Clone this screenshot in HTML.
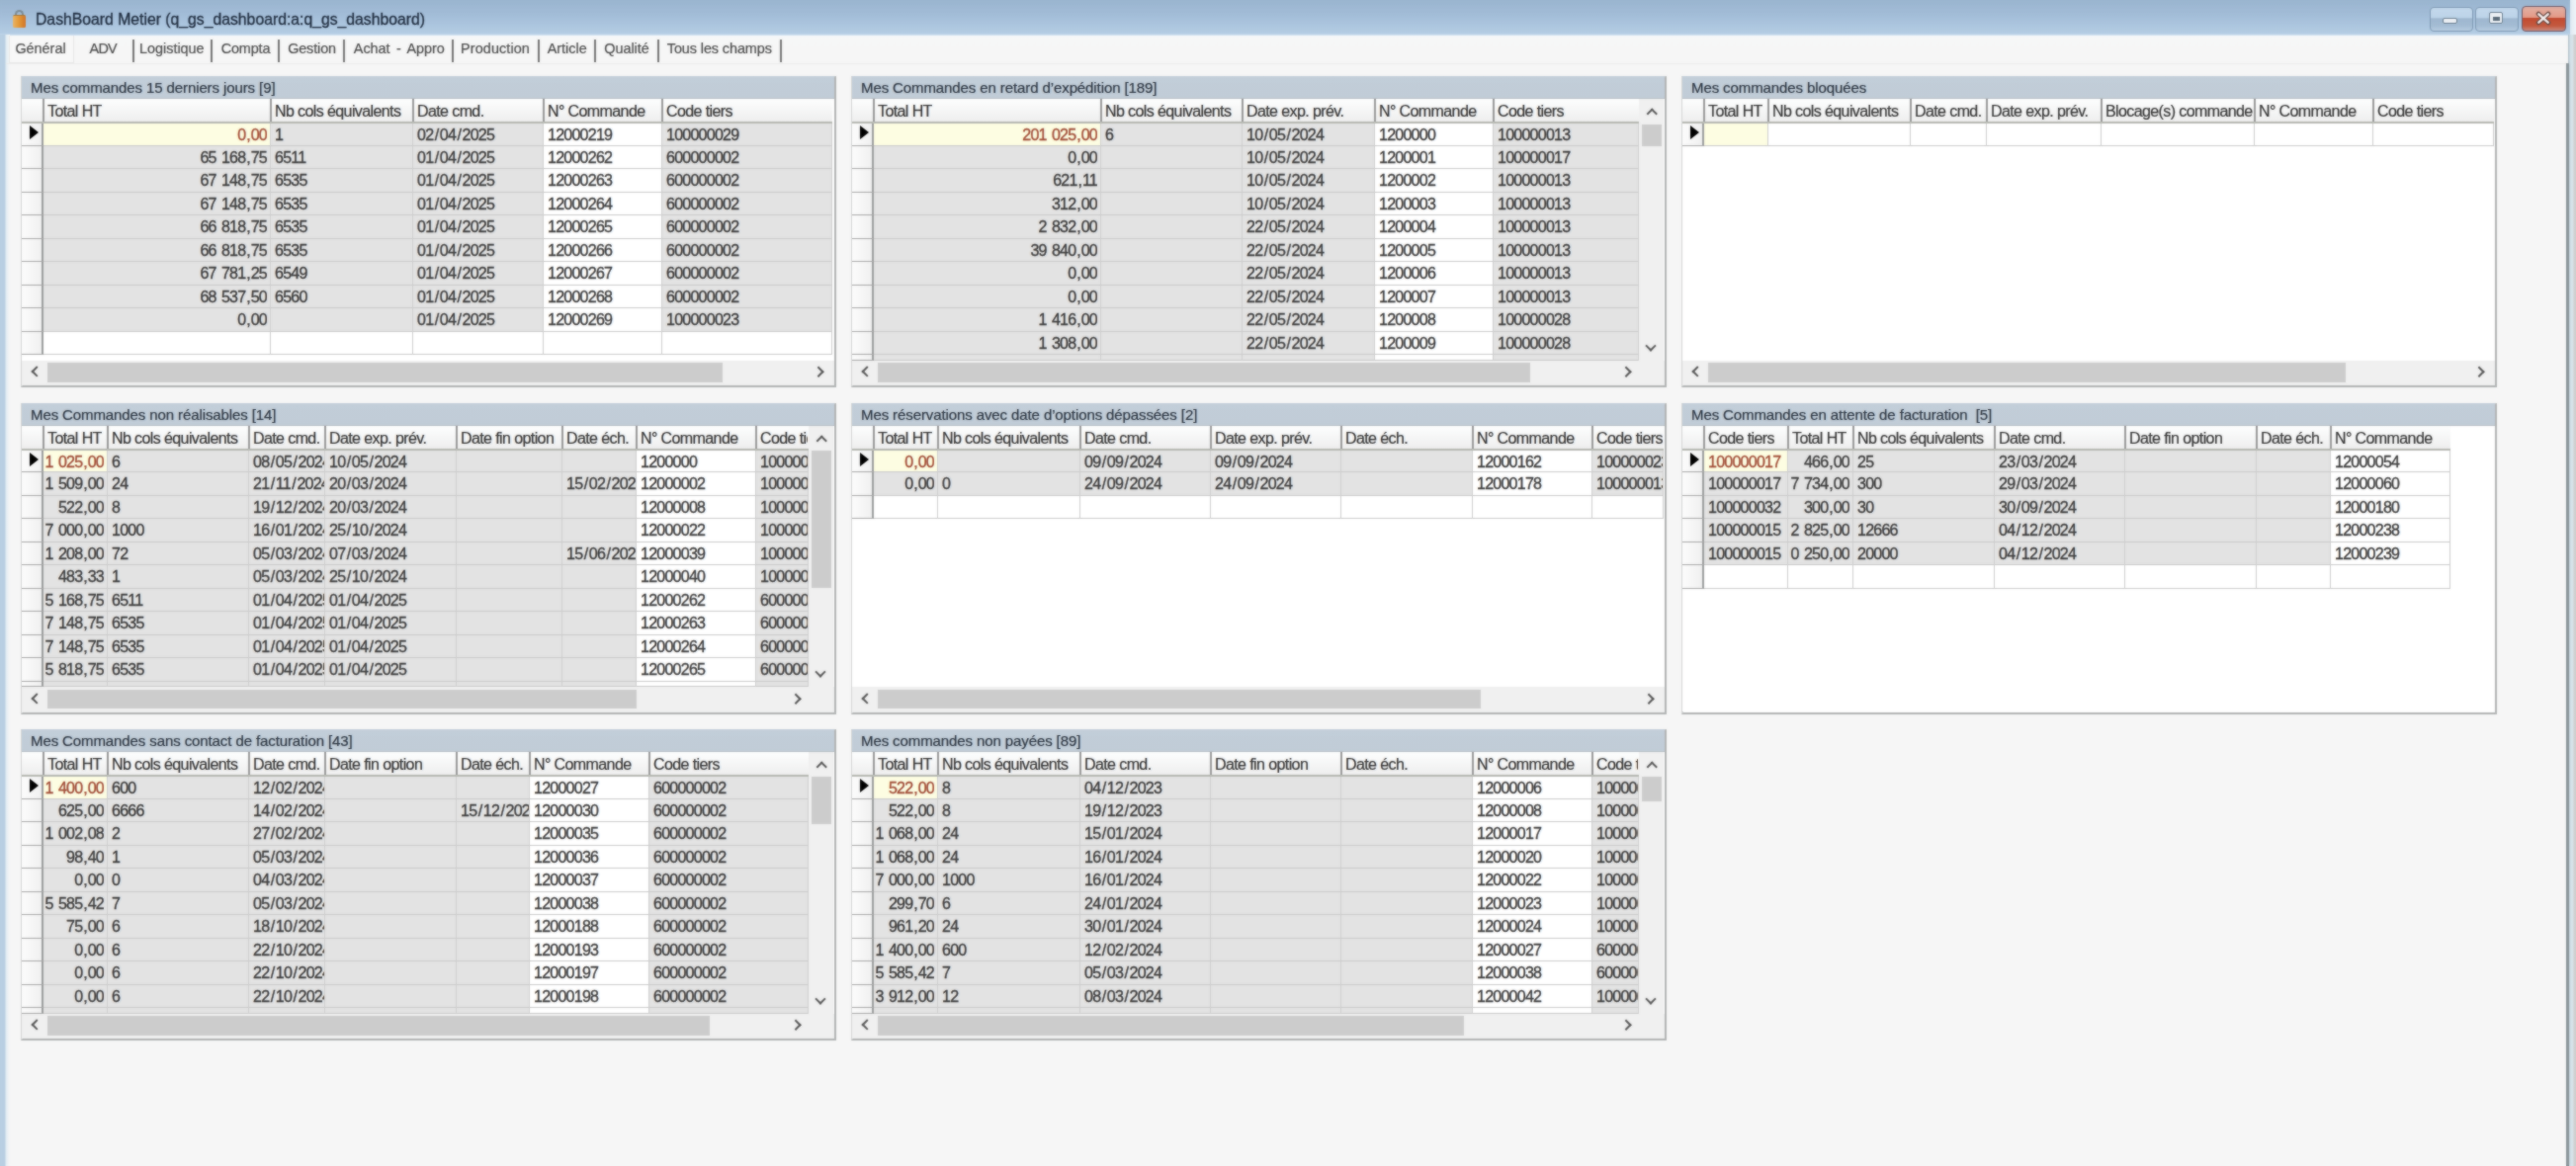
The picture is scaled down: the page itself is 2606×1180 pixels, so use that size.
<!DOCTYPE html><html><head><meta charset="utf-8"><style>
*{margin:0;padding:0;box-sizing:border-box}
html,body{width:2606px;height:1180px;overflow:hidden;background:#f6f6f6;font-family:"Liberation Sans",sans-serif;position:relative}
div{position:absolute}
.pn{background:#fff;border-left:2px solid #d4d6d6;border-top:1px solid #c4c8cc;border-right:2px solid #b2b4b4;border-bottom:2px solid #b2b4b4}
.ph{height:23px;background:linear-gradient(#c3ced9,#c1cdd8);border-bottom:1px solid #b4bcc4}
.pt{font-size:15px;line-height:23px;color:#2a3440;white-space:pre;letter-spacing:-0.1px;-webkit-text-stroke:0.2px currentColor}
.wa{background:#fff}
.ch{height:25px;background:linear-gradient(#fdfefe,#eeeeee);border-bottom:2px solid #b6b8b2}
.hs{width:2px;height:23px;background:#9a9a9a}
.ht{font-size:16px;line-height:26px;height:23px;color:#333;white-space:nowrap;overflow:hidden;letter-spacing:-0.6px;-webkit-text-stroke:0.2px currentColor}
.ic{width:22px;background:linear-gradient(90deg,#fcfcfc,#f0f0f0);border-right:2px solid #9c9e9e;border-bottom:1.5px solid #a8a8a8}
.c{border-right:1px solid #cfcfcf;border-bottom:1px solid #cbcbcb}
.t{font-size:16px;line-height:24px;height:22px;white-space:nowrap;overflow:hidden;letter-spacing:-0.75px;word-spacing:1.5px;-webkit-text-stroke:0.35px currentColor}
.tri{right:0;top:0}
.sl{margin:0 1.4px}
.cm{margin:0 0.8px}
.arr{width:0;height:0;border-top:7.5px solid transparent;border-bottom:7.5px solid transparent;border-left:9.5px solid #000}
.vsb{background:#f0f0f0}
.vth{background:#cdcdcd}
.hsb{height:25.5px;background:#f0f0f0}
.hth{height:19.5px;background:#cdcdcd}
.al,.ar,.au,.ad{width:10px;height:10px}
.al::before,.ar::before,.au::before,.ad::before{content:"";position:absolute;width:6.2px;height:6.2px;border-left:2.8px solid #5a5a5a;border-bottom:2.8px solid #5a5a5a}
.al::before{left:3px;top:2.4px;transform:rotate(45deg)}
.ar::before{left:0px;top:2.4px;transform:rotate(-135deg)}
.au::before{left:2px;top:3px;transform:rotate(135deg)}
.ad::before{left:2px;top:0px;transform:rotate(-45deg)}
.tb{left:0;top:0;width:2606px;height:37px;background:linear-gradient(#9ab5cf,#a3bdd8 40%,#b4cde4 92%,#eef4fa)}
.lb{left:0;top:35px;width:10px;height:1145px;background:linear-gradient(90deg,#b8cfe2 45%,#e4eef4 65%,#f6f6f6)}
.rb{left:2598px;top:35px;width:8px;height:1145px;background:linear-gradient(90deg,#aab8c0,#d2e0e8 25%,#d8e4ea 60%,#d0d0d0 75%,#cecece)}
.rbt{left:2600px;top:0;width:6px;height:35px;background:linear-gradient(90deg,#dfe9f2,#eef4f8)}
.title{left:36px;top:8px;font-size:15.75px;line-height:24px;color:#1d2a3c;white-space:nowrap;-webkit-text-stroke:0.3px currentColor}
.tabbar{left:6px;top:36px;width:2592px;height:29px;background:linear-gradient(#f4f8fb,#f6f7f7 10%,#f6f6f6)}
.tab{top:37px;font-size:14.4px;line-height:24px;color:#4a4a4a;white-space:nowrap;-webkit-text-stroke:0.2px currentColor}
.sep{top:39.5px;width:2px;height:23.5px;background:#767676}
.content{left:6px;top:65px;width:2592px;height:1115px;background:#f6f6f6}
</style></head><body><div style="left:0;top:0;width:2606px;height:1180px;overflow:hidden;will-change:transform"><div class="tb"></div><div class="content"></div><div class="tabbar"></div><div class="lb"></div><div class="rb"></div><div class="rbt"></div><div class="title">DashBoard Metier (q_gs_dashboard:a:q_gs_dashboard)</div><div style="left:14.5px;top:9.5px;width:9.5px;height:9px;border:2.2px solid #7d8c94;border-bottom:none;border-radius:5px 5px 0 0"></div><div style="left:12.5px;top:15px;width:13.5px;height:13px;border-radius:1.5px;border-top:1.5px solid #a87838;background:linear-gradient(90deg,#e8b468,#e49a38 45%,#d0742a)"></div><div style="left:9px;top:36px;width:66px;height:28px;border:1px solid #e6e6e6;border-top:none;background:#f8f8f8"></div><div class="tab" style="left:15.4px;">Général</div><div class="tab" style="left:90.5px;letter-spacing:-0.7px">ADV</div><div class="tab" style="left:141px;">Logistique</div><div class="tab" style="left:223.7px;letter-spacing:-0.13px">Compta</div><div class="tab" style="left:291.2px;letter-spacing:-0.13px">Gestion</div><div class="tab" style="left:357.8px;word-spacing:2.4px">Achat - Appro</div><div class="tab" style="left:466px;letter-spacing:0.12px">Production</div><div class="tab" style="left:553.7px;">Article</div><div class="tab" style="left:611.2px;">Qualité</div><div class="tab" style="left:674.8px;letter-spacing:-0.08px">Tous les champs</div><div class="sep" style="left:134px"></div><div class="sep" style="left:213px"></div><div class="sep" style="left:281px"></div><div class="sep" style="left:347px"></div><div class="sep" style="left:457px"></div><div class="sep" style="left:544px"></div><div class="sep" style="left:601px"></div><div class="sep" style="left:665px"></div><div class="sep" style="left:789px"></div><div style="left:2458px;top:7px;width:44px;height:25px;border:1.5px solid #7f9ab4;border-radius:4px;background:linear-gradient(#c4d9ec,#bcd3e8 45%,#9eb7cf 46%,#a5bdd4 80%,#b8cee2)"></div><div style="left:2471px;top:18px;width:15px;height:6px;border:1.5px solid #6a7e90;background:#eef2f6;border-radius:2px"></div><div style="left:2504px;top:7px;width:44px;height:25px;border:1.5px solid #7f9ab4;border-radius:4px;background:linear-gradient(#c4d9ec,#bcd3e8 45%,#9eb7cf 46%,#a5bdd4 80%,#b8cee2)"></div><div style="left:2518px;top:12px;width:14px;height:12px;border:1.5px solid #6a7e90;background:#eef2f6;border-radius:2px"></div><div style="left:2522px;top:16.5px;width:7px;height:4px;background:#5a6a78"></div><div style="left:2551px;top:6px;width:45px;height:26px;border:1.5px solid #6e5a68;border-radius:4px;background:linear-gradient(#e2b0a4,#e49a88 44%,#c24a30 46%,#c45a40 80%,#c88a80)"></div><svg style="position:absolute;left:2564px;top:11px" width="18" height="15" viewBox="0 0 18 15"><path d="M4 3 L14 12 M14 3 L4 12" stroke="#6a4a44" stroke-width="4.6" stroke-linecap="round"/><path d="M4.3 3.3 L13.7 11.7 M13.7 3.3 L4.3 11.7" stroke="#f4eeee" stroke-width="2.4" stroke-linecap="round"/></svg><div style="left:2596px;top:64px;width:2.5px;height:1116px;background:#8a9499"></div><div style="left:6px;top:64px;width:2590px;height:1px;background:#ebebea"></div><div class="pn" style="left:21px;top:77px;width:825px;height:315px"></div><div class="ph" style="left:22px;top:77px;width:822px"></div><div class="pt" style="left:31px;top:77px">Mes commandes 15 derniers jours [9]</div><div class="wa" style="left:22px;top:100px;width:822px;height:264.5px"></div><div class="ch" style="left:22px;top:100px;width:820px"></div><div class="ic" style="left:22px;top:125.0px;height:22.5px"></div><div class="c" style="left:44px;top:125.0px;width:230px;height:22.5px;background:#fdfde2"></div><div class="c" style="left:274px;top:125.0px;width:144px;height:22.5px;background:#e3e3e3"></div><div class="c" style="left:418px;top:125.0px;width:132px;height:22.5px;background:#e3e3e3"></div><div class="c" style="left:550px;top:125.0px;width:120px;height:22.5px;background:#fff"></div><div class="c" style="left:670px;top:125.0px;width:172px;height:22.5px;background:#e3e3e3"></div><div class="t" style="left:44px;top:125.0px;width:226px;color:#a04a34"><div class="tri">0<span class="cm">,</span>00</div></div><div class="t" style="left:278px;top:125.0px;width:139px;color:#3a3a3a">1</div><div class="t" style="left:422px;top:125.0px;width:127px;color:#3a3a3a">02<span class="sl">/</span>04<span class="sl">/</span>2025</div><div class="t" style="left:554px;top:125.0px;width:115px;color:#3a3a3a">12000219</div><div class="t" style="left:674px;top:125.0px;width:167px;color:#3a3a3a">100000029</div><div class="arr" style="left:29.5px;top:127.0px"></div><div class="ic" style="left:22px;top:147.5px;height:23.5px"></div><div class="c" style="left:44px;top:147.5px;width:230px;height:23.5px;background:#e3e3e3"></div><div class="c" style="left:274px;top:147.5px;width:144px;height:23.5px;background:#e3e3e3"></div><div class="c" style="left:418px;top:147.5px;width:132px;height:23.5px;background:#e3e3e3"></div><div class="c" style="left:550px;top:147.5px;width:120px;height:23.5px;background:#fff"></div><div class="c" style="left:670px;top:147.5px;width:172px;height:23.5px;background:#e3e3e3"></div><div class="t" style="left:44px;top:147.5px;width:226px;color:#3a3a3a"><div class="tri">65 168<span class="cm">,</span>75</div></div><div class="t" style="left:278px;top:147.5px;width:139px;color:#3a3a3a">6511</div><div class="t" style="left:422px;top:147.5px;width:127px;color:#3a3a3a">01<span class="sl">/</span>04<span class="sl">/</span>2025</div><div class="t" style="left:554px;top:147.5px;width:115px;color:#3a3a3a">12000262</div><div class="t" style="left:674px;top:147.5px;width:167px;color:#3a3a3a">600000002</div><div class="ic" style="left:22px;top:171.0px;height:23.5px"></div><div class="c" style="left:44px;top:171.0px;width:230px;height:23.5px;background:#e3e3e3"></div><div class="c" style="left:274px;top:171.0px;width:144px;height:23.5px;background:#e3e3e3"></div><div class="c" style="left:418px;top:171.0px;width:132px;height:23.5px;background:#e3e3e3"></div><div class="c" style="left:550px;top:171.0px;width:120px;height:23.5px;background:#fff"></div><div class="c" style="left:670px;top:171.0px;width:172px;height:23.5px;background:#e3e3e3"></div><div class="t" style="left:44px;top:171.0px;width:226px;color:#3a3a3a"><div class="tri">67 148<span class="cm">,</span>75</div></div><div class="t" style="left:278px;top:171.0px;width:139px;color:#3a3a3a">6535</div><div class="t" style="left:422px;top:171.0px;width:127px;color:#3a3a3a">01<span class="sl">/</span>04<span class="sl">/</span>2025</div><div class="t" style="left:554px;top:171.0px;width:115px;color:#3a3a3a">12000263</div><div class="t" style="left:674px;top:171.0px;width:167px;color:#3a3a3a">600000002</div><div class="ic" style="left:22px;top:194.5px;height:23.5px"></div><div class="c" style="left:44px;top:194.5px;width:230px;height:23.5px;background:#e3e3e3"></div><div class="c" style="left:274px;top:194.5px;width:144px;height:23.5px;background:#e3e3e3"></div><div class="c" style="left:418px;top:194.5px;width:132px;height:23.5px;background:#e3e3e3"></div><div class="c" style="left:550px;top:194.5px;width:120px;height:23.5px;background:#fff"></div><div class="c" style="left:670px;top:194.5px;width:172px;height:23.5px;background:#e3e3e3"></div><div class="t" style="left:44px;top:194.5px;width:226px;color:#3a3a3a"><div class="tri">67 148<span class="cm">,</span>75</div></div><div class="t" style="left:278px;top:194.5px;width:139px;color:#3a3a3a">6535</div><div class="t" style="left:422px;top:194.5px;width:127px;color:#3a3a3a">01<span class="sl">/</span>04<span class="sl">/</span>2025</div><div class="t" style="left:554px;top:194.5px;width:115px;color:#3a3a3a">12000264</div><div class="t" style="left:674px;top:194.5px;width:167px;color:#3a3a3a">600000002</div><div class="ic" style="left:22px;top:218.0px;height:23.5px"></div><div class="c" style="left:44px;top:218.0px;width:230px;height:23.5px;background:#e3e3e3"></div><div class="c" style="left:274px;top:218.0px;width:144px;height:23.5px;background:#e3e3e3"></div><div class="c" style="left:418px;top:218.0px;width:132px;height:23.5px;background:#e3e3e3"></div><div class="c" style="left:550px;top:218.0px;width:120px;height:23.5px;background:#fff"></div><div class="c" style="left:670px;top:218.0px;width:172px;height:23.5px;background:#e3e3e3"></div><div class="t" style="left:44px;top:218.0px;width:226px;color:#3a3a3a"><div class="tri">66 818<span class="cm">,</span>75</div></div><div class="t" style="left:278px;top:218.0px;width:139px;color:#3a3a3a">6535</div><div class="t" style="left:422px;top:218.0px;width:127px;color:#3a3a3a">01<span class="sl">/</span>04<span class="sl">/</span>2025</div><div class="t" style="left:554px;top:218.0px;width:115px;color:#3a3a3a">12000265</div><div class="t" style="left:674px;top:218.0px;width:167px;color:#3a3a3a">600000002</div><div class="ic" style="left:22px;top:241.5px;height:23.5px"></div><div class="c" style="left:44px;top:241.5px;width:230px;height:23.5px;background:#e3e3e3"></div><div class="c" style="left:274px;top:241.5px;width:144px;height:23.5px;background:#e3e3e3"></div><div class="c" style="left:418px;top:241.5px;width:132px;height:23.5px;background:#e3e3e3"></div><div class="c" style="left:550px;top:241.5px;width:120px;height:23.5px;background:#fff"></div><div class="c" style="left:670px;top:241.5px;width:172px;height:23.5px;background:#e3e3e3"></div><div class="t" style="left:44px;top:241.5px;width:226px;color:#3a3a3a"><div class="tri">66 818<span class="cm">,</span>75</div></div><div class="t" style="left:278px;top:241.5px;width:139px;color:#3a3a3a">6535</div><div class="t" style="left:422px;top:241.5px;width:127px;color:#3a3a3a">01<span class="sl">/</span>04<span class="sl">/</span>2025</div><div class="t" style="left:554px;top:241.5px;width:115px;color:#3a3a3a">12000266</div><div class="t" style="left:674px;top:241.5px;width:167px;color:#3a3a3a">600000002</div><div class="ic" style="left:22px;top:265.0px;height:23.5px"></div><div class="c" style="left:44px;top:265.0px;width:230px;height:23.5px;background:#e3e3e3"></div><div class="c" style="left:274px;top:265.0px;width:144px;height:23.5px;background:#e3e3e3"></div><div class="c" style="left:418px;top:265.0px;width:132px;height:23.5px;background:#e3e3e3"></div><div class="c" style="left:550px;top:265.0px;width:120px;height:23.5px;background:#fff"></div><div class="c" style="left:670px;top:265.0px;width:172px;height:23.5px;background:#e3e3e3"></div><div class="t" style="left:44px;top:265.0px;width:226px;color:#3a3a3a"><div class="tri">67 781<span class="cm">,</span>25</div></div><div class="t" style="left:278px;top:265.0px;width:139px;color:#3a3a3a">6549</div><div class="t" style="left:422px;top:265.0px;width:127px;color:#3a3a3a">01<span class="sl">/</span>04<span class="sl">/</span>2025</div><div class="t" style="left:554px;top:265.0px;width:115px;color:#3a3a3a">12000267</div><div class="t" style="left:674px;top:265.0px;width:167px;color:#3a3a3a">600000002</div><div class="ic" style="left:22px;top:288.5px;height:23.5px"></div><div class="c" style="left:44px;top:288.5px;width:230px;height:23.5px;background:#e3e3e3"></div><div class="c" style="left:274px;top:288.5px;width:144px;height:23.5px;background:#e3e3e3"></div><div class="c" style="left:418px;top:288.5px;width:132px;height:23.5px;background:#e3e3e3"></div><div class="c" style="left:550px;top:288.5px;width:120px;height:23.5px;background:#fff"></div><div class="c" style="left:670px;top:288.5px;width:172px;height:23.5px;background:#e3e3e3"></div><div class="t" style="left:44px;top:288.5px;width:226px;color:#3a3a3a"><div class="tri">68 537<span class="cm">,</span>50</div></div><div class="t" style="left:278px;top:288.5px;width:139px;color:#3a3a3a">6560</div><div class="t" style="left:422px;top:288.5px;width:127px;color:#3a3a3a">01<span class="sl">/</span>04<span class="sl">/</span>2025</div><div class="t" style="left:554px;top:288.5px;width:115px;color:#3a3a3a">12000268</div><div class="t" style="left:674px;top:288.5px;width:167px;color:#3a3a3a">600000002</div><div class="ic" style="left:22px;top:312.0px;height:23.5px"></div><div class="c" style="left:44px;top:312.0px;width:230px;height:23.5px;background:#e3e3e3"></div><div class="c" style="left:274px;top:312.0px;width:144px;height:23.5px;background:#e3e3e3"></div><div class="c" style="left:418px;top:312.0px;width:132px;height:23.5px;background:#e3e3e3"></div><div class="c" style="left:550px;top:312.0px;width:120px;height:23.5px;background:#fff"></div><div class="c" style="left:670px;top:312.0px;width:172px;height:23.5px;background:#e3e3e3"></div><div class="t" style="left:44px;top:312.0px;width:226px;color:#3a3a3a"><div class="tri">0<span class="cm">,</span>00</div></div><div class="t" style="left:422px;top:312.0px;width:127px;color:#3a3a3a">01<span class="sl">/</span>04<span class="sl">/</span>2025</div><div class="t" style="left:554px;top:312.0px;width:115px;color:#3a3a3a">12000269</div><div class="t" style="left:674px;top:312.0px;width:167px;color:#3a3a3a">100000023</div><div class="ic" style="left:22px;top:335.5px;height:23.5px"></div><div class="c" style="left:44px;top:335.5px;width:230px;height:23.5px;background:#fff"></div><div class="c" style="left:274px;top:335.5px;width:144px;height:23.5px;background:#fff"></div><div class="c" style="left:418px;top:335.5px;width:132px;height:23.5px;background:#fff"></div><div class="c" style="left:550px;top:335.5px;width:120px;height:23.5px;background:#fff"></div><div class="c" style="left:670px;top:335.5px;width:172px;height:23.5px;background:#fff"></div><div class="hs" style="left:43px;top:100px"></div><div class="ht" style="left:48px;top:100px;width:225px">Total HT</div><div class="hs" style="left:273px;top:100px"></div><div class="ht" style="left:278px;top:100px;width:139px">Nb cols équivalents</div><div class="hs" style="left:417px;top:100px"></div><div class="ht" style="left:422px;top:100px;width:127px">Date cmd.</div><div class="hs" style="left:549px;top:100px"></div><div class="ht" style="left:554px;top:100px;width:115px">N° Commande</div><div class="hs" style="left:669px;top:100px"></div><div class="ht" style="left:674px;top:100px;width:167px">Code tiers</div><div class="hsb" style="left:22px;top:364.5px;width:822px"></div><div class="hth" style="left:48px;top:367.0px;width:683px"></div><div class="al" style="left:29.5px;top:370.0px"></div><div class="ar" style="left:824px;top:370.0px"></div><div class="pn" style="left:861px;top:77px;width:825px;height:315px"></div><div class="ph" style="left:862px;top:77px;width:822px"></div><div class="pt" style="left:871px;top:77px">Mes Commandes en retard d’expédition [189]</div><div class="wa" style="left:862px;top:100px;width:822px;height:264.5px"></div><div class="ch" style="left:862px;top:100px;width:796px"></div><div class="ic" style="left:862px;top:125.0px;height:22.5px"></div><div class="c" style="left:884px;top:125.0px;width:230px;height:22.5px;background:#fdfde2"></div><div class="c" style="left:1114px;top:125.0px;width:143px;height:22.5px;background:#e3e3e3"></div><div class="c" style="left:1257px;top:125.0px;width:134px;height:22.5px;background:#e3e3e3"></div><div class="c" style="left:1391px;top:125.0px;width:120px;height:22.5px;background:#fff"></div><div class="c" style="left:1511px;top:125.0px;width:147px;height:22.5px;background:#e3e3e3"></div><div class="t" style="left:884px;top:125.0px;width:226px;color:#a04a34"><div class="tri">201 025<span class="cm">,</span>00</div></div><div class="t" style="left:1118px;top:125.0px;width:138px;color:#3a3a3a">6</div><div class="t" style="left:1261px;top:125.0px;width:129px;color:#3a3a3a">10<span class="sl">/</span>05<span class="sl">/</span>2024</div><div class="t" style="left:1395px;top:125.0px;width:115px;color:#3a3a3a">1200000</div><div class="t" style="left:1515px;top:125.0px;width:142px;color:#3a3a3a">100000013</div><div class="arr" style="left:869.5px;top:127.0px"></div><div class="ic" style="left:862px;top:147.5px;height:23.5px"></div><div class="c" style="left:884px;top:147.5px;width:230px;height:23.5px;background:#e3e3e3"></div><div class="c" style="left:1114px;top:147.5px;width:143px;height:23.5px;background:#e3e3e3"></div><div class="c" style="left:1257px;top:147.5px;width:134px;height:23.5px;background:#e3e3e3"></div><div class="c" style="left:1391px;top:147.5px;width:120px;height:23.5px;background:#fff"></div><div class="c" style="left:1511px;top:147.5px;width:147px;height:23.5px;background:#e3e3e3"></div><div class="t" style="left:884px;top:147.5px;width:226px;color:#3a3a3a"><div class="tri">0<span class="cm">,</span>00</div></div><div class="t" style="left:1261px;top:147.5px;width:129px;color:#3a3a3a">10<span class="sl">/</span>05<span class="sl">/</span>2024</div><div class="t" style="left:1395px;top:147.5px;width:115px;color:#3a3a3a">1200001</div><div class="t" style="left:1515px;top:147.5px;width:142px;color:#3a3a3a">100000017</div><div class="ic" style="left:862px;top:171.0px;height:23.5px"></div><div class="c" style="left:884px;top:171.0px;width:230px;height:23.5px;background:#e3e3e3"></div><div class="c" style="left:1114px;top:171.0px;width:143px;height:23.5px;background:#e3e3e3"></div><div class="c" style="left:1257px;top:171.0px;width:134px;height:23.5px;background:#e3e3e3"></div><div class="c" style="left:1391px;top:171.0px;width:120px;height:23.5px;background:#fff"></div><div class="c" style="left:1511px;top:171.0px;width:147px;height:23.5px;background:#e3e3e3"></div><div class="t" style="left:884px;top:171.0px;width:226px;color:#3a3a3a"><div class="tri">621<span class="cm">,</span>11</div></div><div class="t" style="left:1261px;top:171.0px;width:129px;color:#3a3a3a">10<span class="sl">/</span>05<span class="sl">/</span>2024</div><div class="t" style="left:1395px;top:171.0px;width:115px;color:#3a3a3a">1200002</div><div class="t" style="left:1515px;top:171.0px;width:142px;color:#3a3a3a">100000013</div><div class="ic" style="left:862px;top:194.5px;height:23.5px"></div><div class="c" style="left:884px;top:194.5px;width:230px;height:23.5px;background:#e3e3e3"></div><div class="c" style="left:1114px;top:194.5px;width:143px;height:23.5px;background:#e3e3e3"></div><div class="c" style="left:1257px;top:194.5px;width:134px;height:23.5px;background:#e3e3e3"></div><div class="c" style="left:1391px;top:194.5px;width:120px;height:23.5px;background:#fff"></div><div class="c" style="left:1511px;top:194.5px;width:147px;height:23.5px;background:#e3e3e3"></div><div class="t" style="left:884px;top:194.5px;width:226px;color:#3a3a3a"><div class="tri">312<span class="cm">,</span>00</div></div><div class="t" style="left:1261px;top:194.5px;width:129px;color:#3a3a3a">10<span class="sl">/</span>05<span class="sl">/</span>2024</div><div class="t" style="left:1395px;top:194.5px;width:115px;color:#3a3a3a">1200003</div><div class="t" style="left:1515px;top:194.5px;width:142px;color:#3a3a3a">100000013</div><div class="ic" style="left:862px;top:218.0px;height:23.5px"></div><div class="c" style="left:884px;top:218.0px;width:230px;height:23.5px;background:#e3e3e3"></div><div class="c" style="left:1114px;top:218.0px;width:143px;height:23.5px;background:#e3e3e3"></div><div class="c" style="left:1257px;top:218.0px;width:134px;height:23.5px;background:#e3e3e3"></div><div class="c" style="left:1391px;top:218.0px;width:120px;height:23.5px;background:#fff"></div><div class="c" style="left:1511px;top:218.0px;width:147px;height:23.5px;background:#e3e3e3"></div><div class="t" style="left:884px;top:218.0px;width:226px;color:#3a3a3a"><div class="tri">2 832<span class="cm">,</span>00</div></div><div class="t" style="left:1261px;top:218.0px;width:129px;color:#3a3a3a">22<span class="sl">/</span>05<span class="sl">/</span>2024</div><div class="t" style="left:1395px;top:218.0px;width:115px;color:#3a3a3a">1200004</div><div class="t" style="left:1515px;top:218.0px;width:142px;color:#3a3a3a">100000013</div><div class="ic" style="left:862px;top:241.5px;height:23.5px"></div><div class="c" style="left:884px;top:241.5px;width:230px;height:23.5px;background:#e3e3e3"></div><div class="c" style="left:1114px;top:241.5px;width:143px;height:23.5px;background:#e3e3e3"></div><div class="c" style="left:1257px;top:241.5px;width:134px;height:23.5px;background:#e3e3e3"></div><div class="c" style="left:1391px;top:241.5px;width:120px;height:23.5px;background:#fff"></div><div class="c" style="left:1511px;top:241.5px;width:147px;height:23.5px;background:#e3e3e3"></div><div class="t" style="left:884px;top:241.5px;width:226px;color:#3a3a3a"><div class="tri">39 840<span class="cm">,</span>00</div></div><div class="t" style="left:1261px;top:241.5px;width:129px;color:#3a3a3a">22<span class="sl">/</span>05<span class="sl">/</span>2024</div><div class="t" style="left:1395px;top:241.5px;width:115px;color:#3a3a3a">1200005</div><div class="t" style="left:1515px;top:241.5px;width:142px;color:#3a3a3a">100000013</div><div class="ic" style="left:862px;top:265.0px;height:23.5px"></div><div class="c" style="left:884px;top:265.0px;width:230px;height:23.5px;background:#e3e3e3"></div><div class="c" style="left:1114px;top:265.0px;width:143px;height:23.5px;background:#e3e3e3"></div><div class="c" style="left:1257px;top:265.0px;width:134px;height:23.5px;background:#e3e3e3"></div><div class="c" style="left:1391px;top:265.0px;width:120px;height:23.5px;background:#fff"></div><div class="c" style="left:1511px;top:265.0px;width:147px;height:23.5px;background:#e3e3e3"></div><div class="t" style="left:884px;top:265.0px;width:226px;color:#3a3a3a"><div class="tri">0<span class="cm">,</span>00</div></div><div class="t" style="left:1261px;top:265.0px;width:129px;color:#3a3a3a">22<span class="sl">/</span>05<span class="sl">/</span>2024</div><div class="t" style="left:1395px;top:265.0px;width:115px;color:#3a3a3a">1200006</div><div class="t" style="left:1515px;top:265.0px;width:142px;color:#3a3a3a">100000013</div><div class="ic" style="left:862px;top:288.5px;height:23.5px"></div><div class="c" style="left:884px;top:288.5px;width:230px;height:23.5px;background:#e3e3e3"></div><div class="c" style="left:1114px;top:288.5px;width:143px;height:23.5px;background:#e3e3e3"></div><div class="c" style="left:1257px;top:288.5px;width:134px;height:23.5px;background:#e3e3e3"></div><div class="c" style="left:1391px;top:288.5px;width:120px;height:23.5px;background:#fff"></div><div class="c" style="left:1511px;top:288.5px;width:147px;height:23.5px;background:#e3e3e3"></div><div class="t" style="left:884px;top:288.5px;width:226px;color:#3a3a3a"><div class="tri">0<span class="cm">,</span>00</div></div><div class="t" style="left:1261px;top:288.5px;width:129px;color:#3a3a3a">22<span class="sl">/</span>05<span class="sl">/</span>2024</div><div class="t" style="left:1395px;top:288.5px;width:115px;color:#3a3a3a">1200007</div><div class="t" style="left:1515px;top:288.5px;width:142px;color:#3a3a3a">100000013</div><div class="ic" style="left:862px;top:312.0px;height:23.5px"></div><div class="c" style="left:884px;top:312.0px;width:230px;height:23.5px;background:#e3e3e3"></div><div class="c" style="left:1114px;top:312.0px;width:143px;height:23.5px;background:#e3e3e3"></div><div class="c" style="left:1257px;top:312.0px;width:134px;height:23.5px;background:#e3e3e3"></div><div class="c" style="left:1391px;top:312.0px;width:120px;height:23.5px;background:#fff"></div><div class="c" style="left:1511px;top:312.0px;width:147px;height:23.5px;background:#e3e3e3"></div><div class="t" style="left:884px;top:312.0px;width:226px;color:#3a3a3a"><div class="tri">1 416<span class="cm">,</span>00</div></div><div class="t" style="left:1261px;top:312.0px;width:129px;color:#3a3a3a">22<span class="sl">/</span>05<span class="sl">/</span>2024</div><div class="t" style="left:1395px;top:312.0px;width:115px;color:#3a3a3a">1200008</div><div class="t" style="left:1515px;top:312.0px;width:142px;color:#3a3a3a">100000028</div><div class="ic" style="left:862px;top:335.5px;height:23.5px"></div><div class="c" style="left:884px;top:335.5px;width:230px;height:23.5px;background:#e3e3e3"></div><div class="c" style="left:1114px;top:335.5px;width:143px;height:23.5px;background:#e3e3e3"></div><div class="c" style="left:1257px;top:335.5px;width:134px;height:23.5px;background:#e3e3e3"></div><div class="c" style="left:1391px;top:335.5px;width:120px;height:23.5px;background:#fff"></div><div class="c" style="left:1511px;top:335.5px;width:147px;height:23.5px;background:#e3e3e3"></div><div class="t" style="left:884px;top:335.5px;width:226px;color:#3a3a3a"><div class="tri">1 308<span class="cm">,</span>00</div></div><div class="t" style="left:1261px;top:335.5px;width:129px;color:#3a3a3a">22<span class="sl">/</span>05<span class="sl">/</span>2024</div><div class="t" style="left:1395px;top:335.5px;width:115px;color:#3a3a3a">1200009</div><div class="t" style="left:1515px;top:335.5px;width:142px;color:#3a3a3a">100000028</div><div class="ic" style="left:862px;top:359.0px;height:5.5px"></div><div class="c" style="left:884px;top:359.0px;width:230px;height:5.5px;background:#e3e3e3"></div><div class="c" style="left:1114px;top:359.0px;width:143px;height:5.5px;background:#e3e3e3"></div><div class="c" style="left:1257px;top:359.0px;width:134px;height:5.5px;background:#e3e3e3"></div><div class="c" style="left:1391px;top:359.0px;width:120px;height:5.5px;background:#fff"></div><div class="c" style="left:1511px;top:359.0px;width:147px;height:5.5px;background:#e3e3e3"></div><div class="hs" style="left:883px;top:100px"></div><div class="ht" style="left:888px;top:100px;width:225px">Total HT</div><div class="hs" style="left:1113px;top:100px"></div><div class="ht" style="left:1118px;top:100px;width:138px">Nb cols équivalents</div><div class="hs" style="left:1256px;top:100px"></div><div class="ht" style="left:1261px;top:100px;width:129px">Date exp. prév.</div><div class="hs" style="left:1390px;top:100px"></div><div class="ht" style="left:1395px;top:100px;width:115px">N° Commande</div><div class="hs" style="left:1510px;top:100px"></div><div class="ht" style="left:1515px;top:100px;width:142px">Code tiers</div><div class="vsb" style="left:1658px;top:100px;width:25px;height:264.5px"></div><div class="vth" style="left:1660.5px;top:126px;width:20px;height:21.5px"></div><div class="au" style="left:1665px;top:108px"></div><div class="ad" style="left:1664px;top:345.5px"></div><div class="hsb" style="left:862px;top:364.5px;width:822px"></div><div class="hth" style="left:888px;top:367.0px;width:660px"></div><div class="al" style="left:869.5px;top:370.0px"></div><div class="ar" style="left:1641px;top:370.0px"></div><div class="pn" style="left:1701px;top:77px;width:825px;height:315px"></div><div class="ph" style="left:1702px;top:77px;width:822px"></div><div class="pt" style="left:1711px;top:77px">Mes commandes bloquées</div><div class="wa" style="left:1702px;top:100px;width:822px;height:264.5px"></div><div class="ch" style="left:1702px;top:100px;width:821px"></div><div class="ic" style="left:1702px;top:125.0px;height:22.5px"></div><div class="c" style="left:1724px;top:125.0px;width:65px;height:22.5px;background:#fdfde2"></div><div class="c" style="left:1789px;top:125.0px;width:144px;height:22.5px;background:#fff"></div><div class="c" style="left:1933px;top:125.0px;width:77px;height:22.5px;background:#fff"></div><div class="c" style="left:2010px;top:125.0px;width:116px;height:22.5px;background:#fff"></div><div class="c" style="left:2126px;top:125.0px;width:155px;height:22.5px;background:#fff"></div><div class="c" style="left:2281px;top:125.0px;width:120px;height:22.5px;background:#fff"></div><div class="c" style="left:2401px;top:125.0px;width:122px;height:22.5px;background:#fff"></div><div class="arr" style="left:1709.5px;top:127.0px"></div><div class="hs" style="left:1723px;top:100px"></div><div class="ht" style="left:1728px;top:100px;width:60px">Total HT</div><div class="hs" style="left:1788px;top:100px"></div><div class="ht" style="left:1793px;top:100px;width:139px">Nb cols équivalents</div><div class="hs" style="left:1932px;top:100px"></div><div class="ht" style="left:1937px;top:100px;width:72px">Date cmd.</div><div class="hs" style="left:2009px;top:100px"></div><div class="ht" style="left:2014px;top:100px;width:111px">Date exp. prév.</div><div class="hs" style="left:2125px;top:100px"></div><div class="ht" style="left:2130px;top:100px;width:150px">Blocage(s) commande</div><div class="hs" style="left:2280px;top:100px"></div><div class="ht" style="left:2285px;top:100px;width:115px">N° Commande</div><div class="hs" style="left:2400px;top:100px"></div><div class="ht" style="left:2405px;top:100px;width:117px">Code tiers</div><div class="hsb" style="left:1702px;top:364.5px;width:822px"></div><div class="hth" style="left:1728px;top:367.0px;width:645px"></div><div class="al" style="left:1709.5px;top:370.0px"></div><div class="ar" style="left:2504px;top:370.0px"></div><div class="pn" style="left:21px;top:407.5px;width:825px;height:315px"></div><div class="ph" style="left:22px;top:407.5px;width:822px"></div><div class="pt" style="left:31px;top:407.5px">Mes Commandes non réalisables [14]</div><div class="wa" style="left:22px;top:430.5px;width:822px;height:264.5px"></div><div class="ch" style="left:22px;top:430.5px;width:796px"></div><div class="ic" style="left:22px;top:455.5px;height:22.5px"></div><div class="c" style="left:44px;top:455.5px;width:65px;height:22.5px;background:#fdfde2"></div><div class="c" style="left:109px;top:455.5px;width:143px;height:22.5px;background:#e3e3e3"></div><div class="c" style="left:252px;top:455.5px;width:77px;height:22.5px;background:#e3e3e3"></div><div class="c" style="left:329px;top:455.5px;width:133px;height:22.5px;background:#e3e3e3"></div><div class="c" style="left:462px;top:455.5px;width:107px;height:22.5px;background:#e3e3e3"></div><div class="c" style="left:569px;top:455.5px;width:75px;height:22.5px;background:#e3e3e3"></div><div class="c" style="left:644px;top:455.5px;width:121px;height:22.5px;background:#fff"></div><div class="c" style="left:765px;top:455.5px;width:53px;height:22.5px;background:#e3e3e3"></div><div class="t" style="left:44px;top:455.5px;width:61px;color:#a04a34"><div class="tri">1 025<span class="cm">,</span>00</div></div><div class="t" style="left:113px;top:455.5px;width:138px;color:#3a3a3a">6</div><div class="t" style="left:256px;top:455.5px;width:72px;color:#3a3a3a">08<span class="sl">/</span>05<span class="sl">/</span>2024</div><div class="t" style="left:333px;top:455.5px;width:128px;color:#3a3a3a">10<span class="sl">/</span>05<span class="sl">/</span>2024</div><div class="t" style="left:648px;top:455.5px;width:116px;color:#3a3a3a">1200000</div><div class="t" style="left:769px;top:455.5px;width:48px;color:#3a3a3a">100000013</div><div class="arr" style="left:29.5px;top:457.5px"></div><div class="ic" style="left:22px;top:478.0px;height:23.5px"></div><div class="c" style="left:44px;top:478.0px;width:65px;height:23.5px;background:#e3e3e3"></div><div class="c" style="left:109px;top:478.0px;width:143px;height:23.5px;background:#e3e3e3"></div><div class="c" style="left:252px;top:478.0px;width:77px;height:23.5px;background:#e3e3e3"></div><div class="c" style="left:329px;top:478.0px;width:133px;height:23.5px;background:#e3e3e3"></div><div class="c" style="left:462px;top:478.0px;width:107px;height:23.5px;background:#e3e3e3"></div><div class="c" style="left:569px;top:478.0px;width:75px;height:23.5px;background:#e3e3e3"></div><div class="c" style="left:644px;top:478.0px;width:121px;height:23.5px;background:#fff"></div><div class="c" style="left:765px;top:478.0px;width:53px;height:23.5px;background:#e3e3e3"></div><div class="t" style="left:44px;top:478.0px;width:61px;color:#3a3a3a"><div class="tri">1 509<span class="cm">,</span>00</div></div><div class="t" style="left:113px;top:478.0px;width:138px;color:#3a3a3a">24</div><div class="t" style="left:256px;top:478.0px;width:72px;color:#3a3a3a">21<span class="sl">/</span>11<span class="sl">/</span>2024</div><div class="t" style="left:333px;top:478.0px;width:128px;color:#3a3a3a">20<span class="sl">/</span>03<span class="sl">/</span>2024</div><div class="t" style="left:573px;top:478.0px;width:70px;color:#3a3a3a">15<span class="sl">/</span>02<span class="sl">/</span>2024</div><div class="t" style="left:648px;top:478.0px;width:116px;color:#3a3a3a">12000002</div><div class="t" style="left:769px;top:478.0px;width:48px;color:#3a3a3a">100000013</div><div class="ic" style="left:22px;top:501.5px;height:23.5px"></div><div class="c" style="left:44px;top:501.5px;width:65px;height:23.5px;background:#e3e3e3"></div><div class="c" style="left:109px;top:501.5px;width:143px;height:23.5px;background:#e3e3e3"></div><div class="c" style="left:252px;top:501.5px;width:77px;height:23.5px;background:#e3e3e3"></div><div class="c" style="left:329px;top:501.5px;width:133px;height:23.5px;background:#e3e3e3"></div><div class="c" style="left:462px;top:501.5px;width:107px;height:23.5px;background:#e3e3e3"></div><div class="c" style="left:569px;top:501.5px;width:75px;height:23.5px;background:#e3e3e3"></div><div class="c" style="left:644px;top:501.5px;width:121px;height:23.5px;background:#fff"></div><div class="c" style="left:765px;top:501.5px;width:53px;height:23.5px;background:#e3e3e3"></div><div class="t" style="left:44px;top:501.5px;width:61px;color:#3a3a3a"><div class="tri">522<span class="cm">,</span>00</div></div><div class="t" style="left:113px;top:501.5px;width:138px;color:#3a3a3a">8</div><div class="t" style="left:256px;top:501.5px;width:72px;color:#3a3a3a">19<span class="sl">/</span>12<span class="sl">/</span>2024</div><div class="t" style="left:333px;top:501.5px;width:128px;color:#3a3a3a">20<span class="sl">/</span>03<span class="sl">/</span>2024</div><div class="t" style="left:648px;top:501.5px;width:116px;color:#3a3a3a">12000008</div><div class="t" style="left:769px;top:501.5px;width:48px;color:#3a3a3a">100000013</div><div class="ic" style="left:22px;top:525.0px;height:23.5px"></div><div class="c" style="left:44px;top:525.0px;width:65px;height:23.5px;background:#e3e3e3"></div><div class="c" style="left:109px;top:525.0px;width:143px;height:23.5px;background:#e3e3e3"></div><div class="c" style="left:252px;top:525.0px;width:77px;height:23.5px;background:#e3e3e3"></div><div class="c" style="left:329px;top:525.0px;width:133px;height:23.5px;background:#e3e3e3"></div><div class="c" style="left:462px;top:525.0px;width:107px;height:23.5px;background:#e3e3e3"></div><div class="c" style="left:569px;top:525.0px;width:75px;height:23.5px;background:#e3e3e3"></div><div class="c" style="left:644px;top:525.0px;width:121px;height:23.5px;background:#fff"></div><div class="c" style="left:765px;top:525.0px;width:53px;height:23.5px;background:#e3e3e3"></div><div class="t" style="left:44px;top:525.0px;width:61px;color:#3a3a3a"><div class="tri">7 000<span class="cm">,</span>00</div></div><div class="t" style="left:113px;top:525.0px;width:138px;color:#3a3a3a">1000</div><div class="t" style="left:256px;top:525.0px;width:72px;color:#3a3a3a">16<span class="sl">/</span>01<span class="sl">/</span>2024</div><div class="t" style="left:333px;top:525.0px;width:128px;color:#3a3a3a">25<span class="sl">/</span>10<span class="sl">/</span>2024</div><div class="t" style="left:648px;top:525.0px;width:116px;color:#3a3a3a">12000022</div><div class="t" style="left:769px;top:525.0px;width:48px;color:#3a3a3a">100000013</div><div class="ic" style="left:22px;top:548.5px;height:23.5px"></div><div class="c" style="left:44px;top:548.5px;width:65px;height:23.5px;background:#e3e3e3"></div><div class="c" style="left:109px;top:548.5px;width:143px;height:23.5px;background:#e3e3e3"></div><div class="c" style="left:252px;top:548.5px;width:77px;height:23.5px;background:#e3e3e3"></div><div class="c" style="left:329px;top:548.5px;width:133px;height:23.5px;background:#e3e3e3"></div><div class="c" style="left:462px;top:548.5px;width:107px;height:23.5px;background:#e3e3e3"></div><div class="c" style="left:569px;top:548.5px;width:75px;height:23.5px;background:#e3e3e3"></div><div class="c" style="left:644px;top:548.5px;width:121px;height:23.5px;background:#fff"></div><div class="c" style="left:765px;top:548.5px;width:53px;height:23.5px;background:#e3e3e3"></div><div class="t" style="left:44px;top:548.5px;width:61px;color:#3a3a3a"><div class="tri">1 208<span class="cm">,</span>00</div></div><div class="t" style="left:113px;top:548.5px;width:138px;color:#3a3a3a">72</div><div class="t" style="left:256px;top:548.5px;width:72px;color:#3a3a3a">05<span class="sl">/</span>03<span class="sl">/</span>2024</div><div class="t" style="left:333px;top:548.5px;width:128px;color:#3a3a3a">07<span class="sl">/</span>03<span class="sl">/</span>2024</div><div class="t" style="left:573px;top:548.5px;width:70px;color:#3a3a3a">15<span class="sl">/</span>06<span class="sl">/</span>2024</div><div class="t" style="left:648px;top:548.5px;width:116px;color:#3a3a3a">12000039</div><div class="t" style="left:769px;top:548.5px;width:48px;color:#3a3a3a">100000013</div><div class="ic" style="left:22px;top:572.0px;height:23.5px"></div><div class="c" style="left:44px;top:572.0px;width:65px;height:23.5px;background:#e3e3e3"></div><div class="c" style="left:109px;top:572.0px;width:143px;height:23.5px;background:#e3e3e3"></div><div class="c" style="left:252px;top:572.0px;width:77px;height:23.5px;background:#e3e3e3"></div><div class="c" style="left:329px;top:572.0px;width:133px;height:23.5px;background:#e3e3e3"></div><div class="c" style="left:462px;top:572.0px;width:107px;height:23.5px;background:#e3e3e3"></div><div class="c" style="left:569px;top:572.0px;width:75px;height:23.5px;background:#e3e3e3"></div><div class="c" style="left:644px;top:572.0px;width:121px;height:23.5px;background:#fff"></div><div class="c" style="left:765px;top:572.0px;width:53px;height:23.5px;background:#e3e3e3"></div><div class="t" style="left:44px;top:572.0px;width:61px;color:#3a3a3a"><div class="tri">483<span class="cm">,</span>33</div></div><div class="t" style="left:113px;top:572.0px;width:138px;color:#3a3a3a">1</div><div class="t" style="left:256px;top:572.0px;width:72px;color:#3a3a3a">05<span class="sl">/</span>03<span class="sl">/</span>2024</div><div class="t" style="left:333px;top:572.0px;width:128px;color:#3a3a3a">25<span class="sl">/</span>10<span class="sl">/</span>2024</div><div class="t" style="left:648px;top:572.0px;width:116px;color:#3a3a3a">12000040</div><div class="t" style="left:769px;top:572.0px;width:48px;color:#3a3a3a">100000013</div><div class="ic" style="left:22px;top:595.5px;height:23.5px"></div><div class="c" style="left:44px;top:595.5px;width:65px;height:23.5px;background:#e3e3e3"></div><div class="c" style="left:109px;top:595.5px;width:143px;height:23.5px;background:#e3e3e3"></div><div class="c" style="left:252px;top:595.5px;width:77px;height:23.5px;background:#e3e3e3"></div><div class="c" style="left:329px;top:595.5px;width:133px;height:23.5px;background:#e3e3e3"></div><div class="c" style="left:462px;top:595.5px;width:107px;height:23.5px;background:#e3e3e3"></div><div class="c" style="left:569px;top:595.5px;width:75px;height:23.5px;background:#e3e3e3"></div><div class="c" style="left:644px;top:595.5px;width:121px;height:23.5px;background:#fff"></div><div class="c" style="left:765px;top:595.5px;width:53px;height:23.5px;background:#e3e3e3"></div><div class="t" style="left:44px;top:595.5px;width:61px;color:#3a3a3a"><div class="tri">5 168<span class="cm">,</span>75</div></div><div class="t" style="left:113px;top:595.5px;width:138px;color:#3a3a3a">6511</div><div class="t" style="left:256px;top:595.5px;width:72px;color:#3a3a3a">01<span class="sl">/</span>04<span class="sl">/</span>2025</div><div class="t" style="left:333px;top:595.5px;width:128px;color:#3a3a3a">01<span class="sl">/</span>04<span class="sl">/</span>2025</div><div class="t" style="left:648px;top:595.5px;width:116px;color:#3a3a3a">12000262</div><div class="t" style="left:769px;top:595.5px;width:48px;color:#3a3a3a">600000002</div><div class="ic" style="left:22px;top:619.0px;height:23.5px"></div><div class="c" style="left:44px;top:619.0px;width:65px;height:23.5px;background:#e3e3e3"></div><div class="c" style="left:109px;top:619.0px;width:143px;height:23.5px;background:#e3e3e3"></div><div class="c" style="left:252px;top:619.0px;width:77px;height:23.5px;background:#e3e3e3"></div><div class="c" style="left:329px;top:619.0px;width:133px;height:23.5px;background:#e3e3e3"></div><div class="c" style="left:462px;top:619.0px;width:107px;height:23.5px;background:#e3e3e3"></div><div class="c" style="left:569px;top:619.0px;width:75px;height:23.5px;background:#e3e3e3"></div><div class="c" style="left:644px;top:619.0px;width:121px;height:23.5px;background:#fff"></div><div class="c" style="left:765px;top:619.0px;width:53px;height:23.5px;background:#e3e3e3"></div><div class="t" style="left:44px;top:619.0px;width:61px;color:#3a3a3a"><div class="tri">7 148<span class="cm">,</span>75</div></div><div class="t" style="left:113px;top:619.0px;width:138px;color:#3a3a3a">6535</div><div class="t" style="left:256px;top:619.0px;width:72px;color:#3a3a3a">01<span class="sl">/</span>04<span class="sl">/</span>2025</div><div class="t" style="left:333px;top:619.0px;width:128px;color:#3a3a3a">01<span class="sl">/</span>04<span class="sl">/</span>2025</div><div class="t" style="left:648px;top:619.0px;width:116px;color:#3a3a3a">12000263</div><div class="t" style="left:769px;top:619.0px;width:48px;color:#3a3a3a">600000002</div><div class="ic" style="left:22px;top:642.5px;height:23.5px"></div><div class="c" style="left:44px;top:642.5px;width:65px;height:23.5px;background:#e3e3e3"></div><div class="c" style="left:109px;top:642.5px;width:143px;height:23.5px;background:#e3e3e3"></div><div class="c" style="left:252px;top:642.5px;width:77px;height:23.5px;background:#e3e3e3"></div><div class="c" style="left:329px;top:642.5px;width:133px;height:23.5px;background:#e3e3e3"></div><div class="c" style="left:462px;top:642.5px;width:107px;height:23.5px;background:#e3e3e3"></div><div class="c" style="left:569px;top:642.5px;width:75px;height:23.5px;background:#e3e3e3"></div><div class="c" style="left:644px;top:642.5px;width:121px;height:23.5px;background:#fff"></div><div class="c" style="left:765px;top:642.5px;width:53px;height:23.5px;background:#e3e3e3"></div><div class="t" style="left:44px;top:642.5px;width:61px;color:#3a3a3a"><div class="tri">7 148<span class="cm">,</span>75</div></div><div class="t" style="left:113px;top:642.5px;width:138px;color:#3a3a3a">6535</div><div class="t" style="left:256px;top:642.5px;width:72px;color:#3a3a3a">01<span class="sl">/</span>04<span class="sl">/</span>2025</div><div class="t" style="left:333px;top:642.5px;width:128px;color:#3a3a3a">01<span class="sl">/</span>04<span class="sl">/</span>2025</div><div class="t" style="left:648px;top:642.5px;width:116px;color:#3a3a3a">12000264</div><div class="t" style="left:769px;top:642.5px;width:48px;color:#3a3a3a">600000002</div><div class="ic" style="left:22px;top:666.0px;height:23.5px"></div><div class="c" style="left:44px;top:666.0px;width:65px;height:23.5px;background:#e3e3e3"></div><div class="c" style="left:109px;top:666.0px;width:143px;height:23.5px;background:#e3e3e3"></div><div class="c" style="left:252px;top:666.0px;width:77px;height:23.5px;background:#e3e3e3"></div><div class="c" style="left:329px;top:666.0px;width:133px;height:23.5px;background:#e3e3e3"></div><div class="c" style="left:462px;top:666.0px;width:107px;height:23.5px;background:#e3e3e3"></div><div class="c" style="left:569px;top:666.0px;width:75px;height:23.5px;background:#e3e3e3"></div><div class="c" style="left:644px;top:666.0px;width:121px;height:23.5px;background:#fff"></div><div class="c" style="left:765px;top:666.0px;width:53px;height:23.5px;background:#e3e3e3"></div><div class="t" style="left:44px;top:666.0px;width:61px;color:#3a3a3a"><div class="tri">5 818<span class="cm">,</span>75</div></div><div class="t" style="left:113px;top:666.0px;width:138px;color:#3a3a3a">6535</div><div class="t" style="left:256px;top:666.0px;width:72px;color:#3a3a3a">01<span class="sl">/</span>04<span class="sl">/</span>2025</div><div class="t" style="left:333px;top:666.0px;width:128px;color:#3a3a3a">01<span class="sl">/</span>04<span class="sl">/</span>2025</div><div class="t" style="left:648px;top:666.0px;width:116px;color:#3a3a3a">12000265</div><div class="t" style="left:769px;top:666.0px;width:48px;color:#3a3a3a">600000002</div><div class="ic" style="left:22px;top:689.5px;height:5.5px"></div><div class="c" style="left:44px;top:689.5px;width:65px;height:5.5px;background:#e3e3e3"></div><div class="c" style="left:109px;top:689.5px;width:143px;height:5.5px;background:#e3e3e3"></div><div class="c" style="left:252px;top:689.5px;width:77px;height:5.5px;background:#e3e3e3"></div><div class="c" style="left:329px;top:689.5px;width:133px;height:5.5px;background:#e3e3e3"></div><div class="c" style="left:462px;top:689.5px;width:107px;height:5.5px;background:#e3e3e3"></div><div class="c" style="left:569px;top:689.5px;width:75px;height:5.5px;background:#e3e3e3"></div><div class="c" style="left:644px;top:689.5px;width:121px;height:5.5px;background:#fff"></div><div class="c" style="left:765px;top:689.5px;width:53px;height:5.5px;background:#e3e3e3"></div><div class="hs" style="left:43px;top:430.5px"></div><div class="ht" style="left:48px;top:430.5px;width:60px">Total HT</div><div class="hs" style="left:108px;top:430.5px"></div><div class="ht" style="left:113px;top:430.5px;width:138px">Nb cols équivalents</div><div class="hs" style="left:251px;top:430.5px"></div><div class="ht" style="left:256px;top:430.5px;width:72px">Date cmd.</div><div class="hs" style="left:328px;top:430.5px"></div><div class="ht" style="left:333px;top:430.5px;width:128px">Date exp. prév.</div><div class="hs" style="left:461px;top:430.5px"></div><div class="ht" style="left:466px;top:430.5px;width:102px">Date fin option</div><div class="hs" style="left:568px;top:430.5px"></div><div class="ht" style="left:573px;top:430.5px;width:70px">Date éch.</div><div class="hs" style="left:643px;top:430.5px"></div><div class="ht" style="left:648px;top:430.5px;width:116px">N° Commande</div><div class="hs" style="left:764px;top:430.5px"></div><div class="ht" style="left:769px;top:430.5px;width:48px">Code tiers</div><div class="vsb" style="left:818px;top:430.5px;width:25px;height:264.5px"></div><div class="vth" style="left:820.5px;top:456px;width:20px;height:139px"></div><div class="au" style="left:825px;top:438.5px"></div><div class="ad" style="left:824px;top:676.0px"></div><div class="hsb" style="left:22px;top:695.0px;width:822px"></div><div class="hth" style="left:48px;top:697.5px;width:596px"></div><div class="al" style="left:29.5px;top:700.5px"></div><div class="ar" style="left:801px;top:700.5px"></div><div class="pn" style="left:861px;top:407.5px;width:825px;height:315px"></div><div class="ph" style="left:862px;top:407.5px;width:822px"></div><div class="pt" style="left:871px;top:407.5px">Mes réservations avec date d’options dépassées [2]</div><div class="wa" style="left:862px;top:430.5px;width:822px;height:264.5px"></div><div class="ch" style="left:862px;top:430.5px;width:821px"></div><div class="ic" style="left:862px;top:455.5px;height:22.5px"></div><div class="c" style="left:884px;top:455.5px;width:65px;height:22.5px;background:#fdfde2"></div><div class="c" style="left:949px;top:455.5px;width:144px;height:22.5px;background:#e3e3e3"></div><div class="c" style="left:1093px;top:455.5px;width:132px;height:22.5px;background:#e3e3e3"></div><div class="c" style="left:1225px;top:455.5px;width:132px;height:22.5px;background:#e3e3e3"></div><div class="c" style="left:1357px;top:455.5px;width:133px;height:22.5px;background:#e3e3e3"></div><div class="c" style="left:1490px;top:455.5px;width:121px;height:22.5px;background:#fff"></div><div class="c" style="left:1611px;top:455.5px;width:72px;height:22.5px;background:#e3e3e3"></div><div class="t" style="left:884px;top:455.5px;width:61px;color:#a04a34"><div class="tri">0<span class="cm">,</span>00</div></div><div class="t" style="left:1097px;top:455.5px;width:127px;color:#3a3a3a">09<span class="sl">/</span>09<span class="sl">/</span>2024</div><div class="t" style="left:1229px;top:455.5px;width:127px;color:#3a3a3a">09<span class="sl">/</span>09<span class="sl">/</span>2024</div><div class="t" style="left:1494px;top:455.5px;width:116px;color:#3a3a3a">12000162</div><div class="t" style="left:1615px;top:455.5px;width:67px;color:#3a3a3a">100000023</div><div class="arr" style="left:869.5px;top:457.5px"></div><div class="ic" style="left:862px;top:478.0px;height:23.5px"></div><div class="c" style="left:884px;top:478.0px;width:65px;height:23.5px;background:#e3e3e3"></div><div class="c" style="left:949px;top:478.0px;width:144px;height:23.5px;background:#e3e3e3"></div><div class="c" style="left:1093px;top:478.0px;width:132px;height:23.5px;background:#e3e3e3"></div><div class="c" style="left:1225px;top:478.0px;width:132px;height:23.5px;background:#e3e3e3"></div><div class="c" style="left:1357px;top:478.0px;width:133px;height:23.5px;background:#e3e3e3"></div><div class="c" style="left:1490px;top:478.0px;width:121px;height:23.5px;background:#fff"></div><div class="c" style="left:1611px;top:478.0px;width:72px;height:23.5px;background:#e3e3e3"></div><div class="t" style="left:884px;top:478.0px;width:61px;color:#3a3a3a"><div class="tri">0<span class="cm">,</span>00</div></div><div class="t" style="left:953px;top:478.0px;width:139px;color:#3a3a3a">0</div><div class="t" style="left:1097px;top:478.0px;width:127px;color:#3a3a3a">24<span class="sl">/</span>09<span class="sl">/</span>2024</div><div class="t" style="left:1229px;top:478.0px;width:127px;color:#3a3a3a">24<span class="sl">/</span>09<span class="sl">/</span>2024</div><div class="t" style="left:1494px;top:478.0px;width:116px;color:#3a3a3a">12000178</div><div class="t" style="left:1615px;top:478.0px;width:67px;color:#3a3a3a">100000013</div><div class="ic" style="left:862px;top:501.5px;height:23.5px"></div><div class="c" style="left:884px;top:501.5px;width:65px;height:23.5px;background:#fff"></div><div class="c" style="left:949px;top:501.5px;width:144px;height:23.5px;background:#fff"></div><div class="c" style="left:1093px;top:501.5px;width:132px;height:23.5px;background:#fff"></div><div class="c" style="left:1225px;top:501.5px;width:132px;height:23.5px;background:#fff"></div><div class="c" style="left:1357px;top:501.5px;width:133px;height:23.5px;background:#fff"></div><div class="c" style="left:1490px;top:501.5px;width:121px;height:23.5px;background:#fff"></div><div class="c" style="left:1611px;top:501.5px;width:72px;height:23.5px;background:#fff"></div><div class="hs" style="left:883px;top:430.5px"></div><div class="ht" style="left:888px;top:430.5px;width:60px">Total HT</div><div class="hs" style="left:948px;top:430.5px"></div><div class="ht" style="left:953px;top:430.5px;width:139px">Nb cols équivalents</div><div class="hs" style="left:1092px;top:430.5px"></div><div class="ht" style="left:1097px;top:430.5px;width:127px">Date cmd.</div><div class="hs" style="left:1224px;top:430.5px"></div><div class="ht" style="left:1229px;top:430.5px;width:127px">Date exp. prév.</div><div class="hs" style="left:1356px;top:430.5px"></div><div class="ht" style="left:1361px;top:430.5px;width:128px">Date éch.</div><div class="hs" style="left:1489px;top:430.5px"></div><div class="ht" style="left:1494px;top:430.5px;width:116px">N° Commande</div><div class="hs" style="left:1610px;top:430.5px"></div><div class="ht" style="left:1615px;top:430.5px;width:67px">Code tiers</div><div class="hsb" style="left:862px;top:695.0px;width:822px"></div><div class="hth" style="left:888px;top:697.5px;width:610px"></div><div class="al" style="left:869.5px;top:700.5px"></div><div class="ar" style="left:1664px;top:700.5px"></div><div class="pn" style="left:1701px;top:407.5px;width:825px;height:315px"></div><div class="ph" style="left:1702px;top:407.5px;width:822px"></div><div class="pt" style="left:1711px;top:407.5px">Mes Commandes en attente de facturation  [5]</div><div class="wa" style="left:1702px;top:430.5px;width:822px;height:289.0px"></div><div class="ch" style="left:1702px;top:430.5px;width:777px"></div><div class="ic" style="left:1702px;top:455.5px;height:22.5px"></div><div class="c" style="left:1724px;top:455.5px;width:85px;height:22.5px;background:#fdfde2"></div><div class="c" style="left:1809px;top:455.5px;width:66px;height:22.5px;background:#e3e3e3"></div><div class="c" style="left:1875px;top:455.5px;width:143px;height:22.5px;background:#e3e3e3"></div><div class="c" style="left:2018px;top:455.5px;width:132px;height:22.5px;background:#e3e3e3"></div><div class="c" style="left:2150px;top:455.5px;width:133px;height:22.5px;background:#e3e3e3"></div><div class="c" style="left:2283px;top:455.5px;width:75px;height:22.5px;background:#e3e3e3"></div><div class="c" style="left:2358px;top:455.5px;width:121px;height:22.5px;background:#fff"></div><div class="t" style="left:1728px;top:455.5px;width:80px;color:#a04a34">100000017</div><div class="t" style="left:1809px;top:455.5px;width:62px;color:#3a3a3a"><div class="tri">466<span class="cm">,</span>00</div></div><div class="t" style="left:1879px;top:455.5px;width:138px;color:#3a3a3a">25</div><div class="t" style="left:2022px;top:455.5px;width:127px;color:#3a3a3a">23<span class="sl">/</span>03<span class="sl">/</span>2024</div><div class="t" style="left:2362px;top:455.5px;width:116px;color:#3a3a3a">12000054</div><div class="arr" style="left:1709.5px;top:457.5px"></div><div class="ic" style="left:1702px;top:478.0px;height:23.5px"></div><div class="c" style="left:1724px;top:478.0px;width:85px;height:23.5px;background:#e3e3e3"></div><div class="c" style="left:1809px;top:478.0px;width:66px;height:23.5px;background:#e3e3e3"></div><div class="c" style="left:1875px;top:478.0px;width:143px;height:23.5px;background:#e3e3e3"></div><div class="c" style="left:2018px;top:478.0px;width:132px;height:23.5px;background:#e3e3e3"></div><div class="c" style="left:2150px;top:478.0px;width:133px;height:23.5px;background:#e3e3e3"></div><div class="c" style="left:2283px;top:478.0px;width:75px;height:23.5px;background:#e3e3e3"></div><div class="c" style="left:2358px;top:478.0px;width:121px;height:23.5px;background:#fff"></div><div class="t" style="left:1728px;top:478.0px;width:80px;color:#3a3a3a">100000017</div><div class="t" style="left:1809px;top:478.0px;width:62px;color:#3a3a3a"><div class="tri">7 734<span class="cm">,</span>00</div></div><div class="t" style="left:1879px;top:478.0px;width:138px;color:#3a3a3a">300</div><div class="t" style="left:2022px;top:478.0px;width:127px;color:#3a3a3a">29<span class="sl">/</span>03<span class="sl">/</span>2024</div><div class="t" style="left:2362px;top:478.0px;width:116px;color:#3a3a3a">12000060</div><div class="ic" style="left:1702px;top:501.5px;height:23.5px"></div><div class="c" style="left:1724px;top:501.5px;width:85px;height:23.5px;background:#e3e3e3"></div><div class="c" style="left:1809px;top:501.5px;width:66px;height:23.5px;background:#e3e3e3"></div><div class="c" style="left:1875px;top:501.5px;width:143px;height:23.5px;background:#e3e3e3"></div><div class="c" style="left:2018px;top:501.5px;width:132px;height:23.5px;background:#e3e3e3"></div><div class="c" style="left:2150px;top:501.5px;width:133px;height:23.5px;background:#e3e3e3"></div><div class="c" style="left:2283px;top:501.5px;width:75px;height:23.5px;background:#e3e3e3"></div><div class="c" style="left:2358px;top:501.5px;width:121px;height:23.5px;background:#fff"></div><div class="t" style="left:1728px;top:501.5px;width:80px;color:#3a3a3a">100000032</div><div class="t" style="left:1809px;top:501.5px;width:62px;color:#3a3a3a"><div class="tri">300<span class="cm">,</span>00</div></div><div class="t" style="left:1879px;top:501.5px;width:138px;color:#3a3a3a">30</div><div class="t" style="left:2022px;top:501.5px;width:127px;color:#3a3a3a">30<span class="sl">/</span>09<span class="sl">/</span>2024</div><div class="t" style="left:2362px;top:501.5px;width:116px;color:#3a3a3a">12000180</div><div class="ic" style="left:1702px;top:525.0px;height:23.5px"></div><div class="c" style="left:1724px;top:525.0px;width:85px;height:23.5px;background:#e3e3e3"></div><div class="c" style="left:1809px;top:525.0px;width:66px;height:23.5px;background:#e3e3e3"></div><div class="c" style="left:1875px;top:525.0px;width:143px;height:23.5px;background:#e3e3e3"></div><div class="c" style="left:2018px;top:525.0px;width:132px;height:23.5px;background:#e3e3e3"></div><div class="c" style="left:2150px;top:525.0px;width:133px;height:23.5px;background:#e3e3e3"></div><div class="c" style="left:2283px;top:525.0px;width:75px;height:23.5px;background:#e3e3e3"></div><div class="c" style="left:2358px;top:525.0px;width:121px;height:23.5px;background:#fff"></div><div class="t" style="left:1728px;top:525.0px;width:80px;color:#3a3a3a">100000015</div><div class="t" style="left:1809px;top:525.0px;width:62px;color:#3a3a3a"><div class="tri">2 825<span class="cm">,</span>00</div></div><div class="t" style="left:1879px;top:525.0px;width:138px;color:#3a3a3a">12666</div><div class="t" style="left:2022px;top:525.0px;width:127px;color:#3a3a3a">04<span class="sl">/</span>12<span class="sl">/</span>2024</div><div class="t" style="left:2362px;top:525.0px;width:116px;color:#3a3a3a">12000238</div><div class="ic" style="left:1702px;top:548.5px;height:23.5px"></div><div class="c" style="left:1724px;top:548.5px;width:85px;height:23.5px;background:#e3e3e3"></div><div class="c" style="left:1809px;top:548.5px;width:66px;height:23.5px;background:#e3e3e3"></div><div class="c" style="left:1875px;top:548.5px;width:143px;height:23.5px;background:#e3e3e3"></div><div class="c" style="left:2018px;top:548.5px;width:132px;height:23.5px;background:#e3e3e3"></div><div class="c" style="left:2150px;top:548.5px;width:133px;height:23.5px;background:#e3e3e3"></div><div class="c" style="left:2283px;top:548.5px;width:75px;height:23.5px;background:#e3e3e3"></div><div class="c" style="left:2358px;top:548.5px;width:121px;height:23.5px;background:#fff"></div><div class="t" style="left:1728px;top:548.5px;width:80px;color:#3a3a3a">100000015</div><div class="t" style="left:1809px;top:548.5px;width:62px;color:#3a3a3a"><div class="tri">0 250<span class="cm">,</span>00</div></div><div class="t" style="left:1879px;top:548.5px;width:138px;color:#3a3a3a">20000</div><div class="t" style="left:2022px;top:548.5px;width:127px;color:#3a3a3a">04<span class="sl">/</span>12<span class="sl">/</span>2024</div><div class="t" style="left:2362px;top:548.5px;width:116px;color:#3a3a3a">12000239</div><div class="ic" style="left:1702px;top:572.0px;height:23.5px"></div><div class="c" style="left:1724px;top:572.0px;width:85px;height:23.5px;background:#fff"></div><div class="c" style="left:1809px;top:572.0px;width:66px;height:23.5px;background:#fff"></div><div class="c" style="left:1875px;top:572.0px;width:143px;height:23.5px;background:#fff"></div><div class="c" style="left:2018px;top:572.0px;width:132px;height:23.5px;background:#fff"></div><div class="c" style="left:2150px;top:572.0px;width:133px;height:23.5px;background:#fff"></div><div class="c" style="left:2283px;top:572.0px;width:75px;height:23.5px;background:#fff"></div><div class="c" style="left:2358px;top:572.0px;width:121px;height:23.5px;background:#fff"></div><div class="hs" style="left:1723px;top:430.5px"></div><div class="ht" style="left:1728px;top:430.5px;width:80px">Code tiers</div><div class="hs" style="left:1808px;top:430.5px"></div><div class="ht" style="left:1813px;top:430.5px;width:61px">Total HT</div><div class="hs" style="left:1874px;top:430.5px"></div><div class="ht" style="left:1879px;top:430.5px;width:138px">Nb cols équivalents</div><div class="hs" style="left:2017px;top:430.5px"></div><div class="ht" style="left:2022px;top:430.5px;width:127px">Date cmd.</div><div class="hs" style="left:2149px;top:430.5px"></div><div class="ht" style="left:2154px;top:430.5px;width:128px">Date fin option</div><div class="hs" style="left:2282px;top:430.5px"></div><div class="ht" style="left:2287px;top:430.5px;width:70px">Date éch.</div><div class="hs" style="left:2357px;top:430.5px"></div><div class="ht" style="left:2362px;top:430.5px;width:116px">N° Commande</div><div class="pn" style="left:21px;top:738px;width:825px;height:315px"></div><div class="ph" style="left:22px;top:738px;width:822px"></div><div class="pt" style="left:31px;top:738px">Mes Commandes sans contact de facturation [43]</div><div class="wa" style="left:22px;top:761px;width:822px;height:264.5px"></div><div class="ch" style="left:22px;top:761px;width:796px"></div><div class="ic" style="left:22px;top:786.0px;height:22.5px"></div><div class="c" style="left:44px;top:786.0px;width:65px;height:22.5px;background:#fdfde2"></div><div class="c" style="left:109px;top:786.0px;width:143px;height:22.5px;background:#e3e3e3"></div><div class="c" style="left:252px;top:786.0px;width:77px;height:22.5px;background:#e3e3e3"></div><div class="c" style="left:329px;top:786.0px;width:133px;height:22.5px;background:#e3e3e3"></div><div class="c" style="left:462px;top:786.0px;width:74px;height:22.5px;background:#e3e3e3"></div><div class="c" style="left:536px;top:786.0px;width:121px;height:22.5px;background:#fff"></div><div class="c" style="left:657px;top:786.0px;width:161px;height:22.5px;background:#e3e3e3"></div><div class="t" style="left:44px;top:786.0px;width:61px;color:#a04a34"><div class="tri">1 400<span class="cm">,</span>00</div></div><div class="t" style="left:113px;top:786.0px;width:138px;color:#3a3a3a">600</div><div class="t" style="left:256px;top:786.0px;width:72px;color:#3a3a3a">12<span class="sl">/</span>02<span class="sl">/</span>2024</div><div class="t" style="left:540px;top:786.0px;width:116px;color:#3a3a3a">12000027</div><div class="t" style="left:661px;top:786.0px;width:156px;color:#3a3a3a">600000002</div><div class="arr" style="left:29.5px;top:788.0px"></div><div class="ic" style="left:22px;top:808.5px;height:23.5px"></div><div class="c" style="left:44px;top:808.5px;width:65px;height:23.5px;background:#e3e3e3"></div><div class="c" style="left:109px;top:808.5px;width:143px;height:23.5px;background:#e3e3e3"></div><div class="c" style="left:252px;top:808.5px;width:77px;height:23.5px;background:#e3e3e3"></div><div class="c" style="left:329px;top:808.5px;width:133px;height:23.5px;background:#e3e3e3"></div><div class="c" style="left:462px;top:808.5px;width:74px;height:23.5px;background:#e3e3e3"></div><div class="c" style="left:536px;top:808.5px;width:121px;height:23.5px;background:#fff"></div><div class="c" style="left:657px;top:808.5px;width:161px;height:23.5px;background:#e3e3e3"></div><div class="t" style="left:44px;top:808.5px;width:61px;color:#3a3a3a"><div class="tri">625<span class="cm">,</span>00</div></div><div class="t" style="left:113px;top:808.5px;width:138px;color:#3a3a3a">6666</div><div class="t" style="left:256px;top:808.5px;width:72px;color:#3a3a3a">14<span class="sl">/</span>02<span class="sl">/</span>2024</div><div class="t" style="left:466px;top:808.5px;width:69px;color:#3a3a3a">15<span class="sl">/</span>12<span class="sl">/</span>2024</div><div class="t" style="left:540px;top:808.5px;width:116px;color:#3a3a3a">12000030</div><div class="t" style="left:661px;top:808.5px;width:156px;color:#3a3a3a">600000002</div><div class="ic" style="left:22px;top:832.0px;height:23.5px"></div><div class="c" style="left:44px;top:832.0px;width:65px;height:23.5px;background:#e3e3e3"></div><div class="c" style="left:109px;top:832.0px;width:143px;height:23.5px;background:#e3e3e3"></div><div class="c" style="left:252px;top:832.0px;width:77px;height:23.5px;background:#e3e3e3"></div><div class="c" style="left:329px;top:832.0px;width:133px;height:23.5px;background:#e3e3e3"></div><div class="c" style="left:462px;top:832.0px;width:74px;height:23.5px;background:#e3e3e3"></div><div class="c" style="left:536px;top:832.0px;width:121px;height:23.5px;background:#fff"></div><div class="c" style="left:657px;top:832.0px;width:161px;height:23.5px;background:#e3e3e3"></div><div class="t" style="left:44px;top:832.0px;width:61px;color:#3a3a3a"><div class="tri">1 002<span class="cm">,</span>08</div></div><div class="t" style="left:113px;top:832.0px;width:138px;color:#3a3a3a">2</div><div class="t" style="left:256px;top:832.0px;width:72px;color:#3a3a3a">27<span class="sl">/</span>02<span class="sl">/</span>2024</div><div class="t" style="left:540px;top:832.0px;width:116px;color:#3a3a3a">12000035</div><div class="t" style="left:661px;top:832.0px;width:156px;color:#3a3a3a">600000002</div><div class="ic" style="left:22px;top:855.5px;height:23.5px"></div><div class="c" style="left:44px;top:855.5px;width:65px;height:23.5px;background:#e3e3e3"></div><div class="c" style="left:109px;top:855.5px;width:143px;height:23.5px;background:#e3e3e3"></div><div class="c" style="left:252px;top:855.5px;width:77px;height:23.5px;background:#e3e3e3"></div><div class="c" style="left:329px;top:855.5px;width:133px;height:23.5px;background:#e3e3e3"></div><div class="c" style="left:462px;top:855.5px;width:74px;height:23.5px;background:#e3e3e3"></div><div class="c" style="left:536px;top:855.5px;width:121px;height:23.5px;background:#fff"></div><div class="c" style="left:657px;top:855.5px;width:161px;height:23.5px;background:#e3e3e3"></div><div class="t" style="left:44px;top:855.5px;width:61px;color:#3a3a3a"><div class="tri">98<span class="cm">,</span>40</div></div><div class="t" style="left:113px;top:855.5px;width:138px;color:#3a3a3a">1</div><div class="t" style="left:256px;top:855.5px;width:72px;color:#3a3a3a">05<span class="sl">/</span>03<span class="sl">/</span>2024</div><div class="t" style="left:540px;top:855.5px;width:116px;color:#3a3a3a">12000036</div><div class="t" style="left:661px;top:855.5px;width:156px;color:#3a3a3a">600000002</div><div class="ic" style="left:22px;top:879.0px;height:23.5px"></div><div class="c" style="left:44px;top:879.0px;width:65px;height:23.5px;background:#e3e3e3"></div><div class="c" style="left:109px;top:879.0px;width:143px;height:23.5px;background:#e3e3e3"></div><div class="c" style="left:252px;top:879.0px;width:77px;height:23.5px;background:#e3e3e3"></div><div class="c" style="left:329px;top:879.0px;width:133px;height:23.5px;background:#e3e3e3"></div><div class="c" style="left:462px;top:879.0px;width:74px;height:23.5px;background:#e3e3e3"></div><div class="c" style="left:536px;top:879.0px;width:121px;height:23.5px;background:#fff"></div><div class="c" style="left:657px;top:879.0px;width:161px;height:23.5px;background:#e3e3e3"></div><div class="t" style="left:44px;top:879.0px;width:61px;color:#3a3a3a"><div class="tri">0<span class="cm">,</span>00</div></div><div class="t" style="left:113px;top:879.0px;width:138px;color:#3a3a3a">0</div><div class="t" style="left:256px;top:879.0px;width:72px;color:#3a3a3a">04<span class="sl">/</span>03<span class="sl">/</span>2024</div><div class="t" style="left:540px;top:879.0px;width:116px;color:#3a3a3a">12000037</div><div class="t" style="left:661px;top:879.0px;width:156px;color:#3a3a3a">600000002</div><div class="ic" style="left:22px;top:902.5px;height:23.5px"></div><div class="c" style="left:44px;top:902.5px;width:65px;height:23.5px;background:#e3e3e3"></div><div class="c" style="left:109px;top:902.5px;width:143px;height:23.5px;background:#e3e3e3"></div><div class="c" style="left:252px;top:902.5px;width:77px;height:23.5px;background:#e3e3e3"></div><div class="c" style="left:329px;top:902.5px;width:133px;height:23.5px;background:#e3e3e3"></div><div class="c" style="left:462px;top:902.5px;width:74px;height:23.5px;background:#e3e3e3"></div><div class="c" style="left:536px;top:902.5px;width:121px;height:23.5px;background:#fff"></div><div class="c" style="left:657px;top:902.5px;width:161px;height:23.5px;background:#e3e3e3"></div><div class="t" style="left:44px;top:902.5px;width:61px;color:#3a3a3a"><div class="tri">5 585<span class="cm">,</span>42</div></div><div class="t" style="left:113px;top:902.5px;width:138px;color:#3a3a3a">7</div><div class="t" style="left:256px;top:902.5px;width:72px;color:#3a3a3a">05<span class="sl">/</span>03<span class="sl">/</span>2024</div><div class="t" style="left:540px;top:902.5px;width:116px;color:#3a3a3a">12000038</div><div class="t" style="left:661px;top:902.5px;width:156px;color:#3a3a3a">600000002</div><div class="ic" style="left:22px;top:926.0px;height:23.5px"></div><div class="c" style="left:44px;top:926.0px;width:65px;height:23.5px;background:#e3e3e3"></div><div class="c" style="left:109px;top:926.0px;width:143px;height:23.5px;background:#e3e3e3"></div><div class="c" style="left:252px;top:926.0px;width:77px;height:23.5px;background:#e3e3e3"></div><div class="c" style="left:329px;top:926.0px;width:133px;height:23.5px;background:#e3e3e3"></div><div class="c" style="left:462px;top:926.0px;width:74px;height:23.5px;background:#e3e3e3"></div><div class="c" style="left:536px;top:926.0px;width:121px;height:23.5px;background:#fff"></div><div class="c" style="left:657px;top:926.0px;width:161px;height:23.5px;background:#e3e3e3"></div><div class="t" style="left:44px;top:926.0px;width:61px;color:#3a3a3a"><div class="tri">75<span class="cm">,</span>00</div></div><div class="t" style="left:113px;top:926.0px;width:138px;color:#3a3a3a">6</div><div class="t" style="left:256px;top:926.0px;width:72px;color:#3a3a3a">18<span class="sl">/</span>10<span class="sl">/</span>2024</div><div class="t" style="left:540px;top:926.0px;width:116px;color:#3a3a3a">12000188</div><div class="t" style="left:661px;top:926.0px;width:156px;color:#3a3a3a">600000002</div><div class="ic" style="left:22px;top:949.5px;height:23.5px"></div><div class="c" style="left:44px;top:949.5px;width:65px;height:23.5px;background:#e3e3e3"></div><div class="c" style="left:109px;top:949.5px;width:143px;height:23.5px;background:#e3e3e3"></div><div class="c" style="left:252px;top:949.5px;width:77px;height:23.5px;background:#e3e3e3"></div><div class="c" style="left:329px;top:949.5px;width:133px;height:23.5px;background:#e3e3e3"></div><div class="c" style="left:462px;top:949.5px;width:74px;height:23.5px;background:#e3e3e3"></div><div class="c" style="left:536px;top:949.5px;width:121px;height:23.5px;background:#fff"></div><div class="c" style="left:657px;top:949.5px;width:161px;height:23.5px;background:#e3e3e3"></div><div class="t" style="left:44px;top:949.5px;width:61px;color:#3a3a3a"><div class="tri">0<span class="cm">,</span>00</div></div><div class="t" style="left:113px;top:949.5px;width:138px;color:#3a3a3a">6</div><div class="t" style="left:256px;top:949.5px;width:72px;color:#3a3a3a">22<span class="sl">/</span>10<span class="sl">/</span>2024</div><div class="t" style="left:540px;top:949.5px;width:116px;color:#3a3a3a">12000193</div><div class="t" style="left:661px;top:949.5px;width:156px;color:#3a3a3a">600000002</div><div class="ic" style="left:22px;top:973.0px;height:23.5px"></div><div class="c" style="left:44px;top:973.0px;width:65px;height:23.5px;background:#e3e3e3"></div><div class="c" style="left:109px;top:973.0px;width:143px;height:23.5px;background:#e3e3e3"></div><div class="c" style="left:252px;top:973.0px;width:77px;height:23.5px;background:#e3e3e3"></div><div class="c" style="left:329px;top:973.0px;width:133px;height:23.5px;background:#e3e3e3"></div><div class="c" style="left:462px;top:973.0px;width:74px;height:23.5px;background:#e3e3e3"></div><div class="c" style="left:536px;top:973.0px;width:121px;height:23.5px;background:#fff"></div><div class="c" style="left:657px;top:973.0px;width:161px;height:23.5px;background:#e3e3e3"></div><div class="t" style="left:44px;top:973.0px;width:61px;color:#3a3a3a"><div class="tri">0<span class="cm">,</span>00</div></div><div class="t" style="left:113px;top:973.0px;width:138px;color:#3a3a3a">6</div><div class="t" style="left:256px;top:973.0px;width:72px;color:#3a3a3a">22<span class="sl">/</span>10<span class="sl">/</span>2024</div><div class="t" style="left:540px;top:973.0px;width:116px;color:#3a3a3a">12000197</div><div class="t" style="left:661px;top:973.0px;width:156px;color:#3a3a3a">600000002</div><div class="ic" style="left:22px;top:996.5px;height:23.5px"></div><div class="c" style="left:44px;top:996.5px;width:65px;height:23.5px;background:#e3e3e3"></div><div class="c" style="left:109px;top:996.5px;width:143px;height:23.5px;background:#e3e3e3"></div><div class="c" style="left:252px;top:996.5px;width:77px;height:23.5px;background:#e3e3e3"></div><div class="c" style="left:329px;top:996.5px;width:133px;height:23.5px;background:#e3e3e3"></div><div class="c" style="left:462px;top:996.5px;width:74px;height:23.5px;background:#e3e3e3"></div><div class="c" style="left:536px;top:996.5px;width:121px;height:23.5px;background:#fff"></div><div class="c" style="left:657px;top:996.5px;width:161px;height:23.5px;background:#e3e3e3"></div><div class="t" style="left:44px;top:996.5px;width:61px;color:#3a3a3a"><div class="tri">0<span class="cm">,</span>00</div></div><div class="t" style="left:113px;top:996.5px;width:138px;color:#3a3a3a">6</div><div class="t" style="left:256px;top:996.5px;width:72px;color:#3a3a3a">22<span class="sl">/</span>10<span class="sl">/</span>2024</div><div class="t" style="left:540px;top:996.5px;width:116px;color:#3a3a3a">12000198</div><div class="t" style="left:661px;top:996.5px;width:156px;color:#3a3a3a">600000002</div><div class="ic" style="left:22px;top:1020.0px;height:5.5px"></div><div class="c" style="left:44px;top:1020.0px;width:65px;height:5.5px;background:#e3e3e3"></div><div class="c" style="left:109px;top:1020.0px;width:143px;height:5.5px;background:#e3e3e3"></div><div class="c" style="left:252px;top:1020.0px;width:77px;height:5.5px;background:#e3e3e3"></div><div class="c" style="left:329px;top:1020.0px;width:133px;height:5.5px;background:#e3e3e3"></div><div class="c" style="left:462px;top:1020.0px;width:74px;height:5.5px;background:#e3e3e3"></div><div class="c" style="left:536px;top:1020.0px;width:121px;height:5.5px;background:#fff"></div><div class="c" style="left:657px;top:1020.0px;width:161px;height:5.5px;background:#e3e3e3"></div><div class="hs" style="left:43px;top:761px"></div><div class="ht" style="left:48px;top:761px;width:60px">Total HT</div><div class="hs" style="left:108px;top:761px"></div><div class="ht" style="left:113px;top:761px;width:138px">Nb cols équivalents</div><div class="hs" style="left:251px;top:761px"></div><div class="ht" style="left:256px;top:761px;width:72px">Date cmd.</div><div class="hs" style="left:328px;top:761px"></div><div class="ht" style="left:333px;top:761px;width:128px">Date fin option</div><div class="hs" style="left:461px;top:761px"></div><div class="ht" style="left:466px;top:761px;width:69px">Date éch.</div><div class="hs" style="left:535px;top:761px"></div><div class="ht" style="left:540px;top:761px;width:116px">N° Commande</div><div class="hs" style="left:656px;top:761px"></div><div class="ht" style="left:661px;top:761px;width:156px">Code tiers</div><div class="vsb" style="left:818px;top:761px;width:25px;height:264.5px"></div><div class="vth" style="left:820.5px;top:786px;width:20px;height:48px"></div><div class="au" style="left:825px;top:769px"></div><div class="ad" style="left:824px;top:1006.5px"></div><div class="hsb" style="left:22px;top:1025.5px;width:822px"></div><div class="hth" style="left:48px;top:1028.0px;width:670px"></div><div class="al" style="left:29.5px;top:1031.0px"></div><div class="ar" style="left:801px;top:1031.0px"></div><div class="pn" style="left:861px;top:738px;width:825px;height:315px"></div><div class="ph" style="left:862px;top:738px;width:822px"></div><div class="pt" style="left:871px;top:738px">Mes commandes non payées [89]</div><div class="wa" style="left:862px;top:761px;width:822px;height:264.5px"></div><div class="ch" style="left:862px;top:761px;width:796px"></div><div class="ic" style="left:862px;top:786.0px;height:22.5px"></div><div class="c" style="left:884px;top:786.0px;width:65px;height:22.5px;background:#fdfde2"></div><div class="c" style="left:949px;top:786.0px;width:144px;height:22.5px;background:#e3e3e3"></div><div class="c" style="left:1093px;top:786.0px;width:132px;height:22.5px;background:#e3e3e3"></div><div class="c" style="left:1225px;top:786.0px;width:132px;height:22.5px;background:#e3e3e3"></div><div class="c" style="left:1357px;top:786.0px;width:133px;height:22.5px;background:#e3e3e3"></div><div class="c" style="left:1490px;top:786.0px;width:121px;height:22.5px;background:#fff"></div><div class="c" style="left:1611px;top:786.0px;width:47px;height:22.5px;background:#e3e3e3"></div><div class="t" style="left:884px;top:786.0px;width:61px;color:#a04a34"><div class="tri">522<span class="cm">,</span>00</div></div><div class="t" style="left:953px;top:786.0px;width:139px;color:#3a3a3a">8</div><div class="t" style="left:1097px;top:786.0px;width:127px;color:#3a3a3a">04<span class="sl">/</span>12<span class="sl">/</span>2023</div><div class="t" style="left:1494px;top:786.0px;width:116px;color:#3a3a3a">12000006</div><div class="t" style="left:1615px;top:786.0px;width:42px;color:#3a3a3a">100000013</div><div class="arr" style="left:869.5px;top:788.0px"></div><div class="ic" style="left:862px;top:808.5px;height:23.5px"></div><div class="c" style="left:884px;top:808.5px;width:65px;height:23.5px;background:#e3e3e3"></div><div class="c" style="left:949px;top:808.5px;width:144px;height:23.5px;background:#e3e3e3"></div><div class="c" style="left:1093px;top:808.5px;width:132px;height:23.5px;background:#e3e3e3"></div><div class="c" style="left:1225px;top:808.5px;width:132px;height:23.5px;background:#e3e3e3"></div><div class="c" style="left:1357px;top:808.5px;width:133px;height:23.5px;background:#e3e3e3"></div><div class="c" style="left:1490px;top:808.5px;width:121px;height:23.5px;background:#fff"></div><div class="c" style="left:1611px;top:808.5px;width:47px;height:23.5px;background:#e3e3e3"></div><div class="t" style="left:884px;top:808.5px;width:61px;color:#3a3a3a"><div class="tri">522<span class="cm">,</span>00</div></div><div class="t" style="left:953px;top:808.5px;width:139px;color:#3a3a3a">8</div><div class="t" style="left:1097px;top:808.5px;width:127px;color:#3a3a3a">19<span class="sl">/</span>12<span class="sl">/</span>2023</div><div class="t" style="left:1494px;top:808.5px;width:116px;color:#3a3a3a">12000008</div><div class="t" style="left:1615px;top:808.5px;width:42px;color:#3a3a3a">100000013</div><div class="ic" style="left:862px;top:832.0px;height:23.5px"></div><div class="c" style="left:884px;top:832.0px;width:65px;height:23.5px;background:#e3e3e3"></div><div class="c" style="left:949px;top:832.0px;width:144px;height:23.5px;background:#e3e3e3"></div><div class="c" style="left:1093px;top:832.0px;width:132px;height:23.5px;background:#e3e3e3"></div><div class="c" style="left:1225px;top:832.0px;width:132px;height:23.5px;background:#e3e3e3"></div><div class="c" style="left:1357px;top:832.0px;width:133px;height:23.5px;background:#e3e3e3"></div><div class="c" style="left:1490px;top:832.0px;width:121px;height:23.5px;background:#fff"></div><div class="c" style="left:1611px;top:832.0px;width:47px;height:23.5px;background:#e3e3e3"></div><div class="t" style="left:884px;top:832.0px;width:61px;color:#3a3a3a"><div class="tri">1 068<span class="cm">,</span>00</div></div><div class="t" style="left:953px;top:832.0px;width:139px;color:#3a3a3a">24</div><div class="t" style="left:1097px;top:832.0px;width:127px;color:#3a3a3a">15<span class="sl">/</span>01<span class="sl">/</span>2024</div><div class="t" style="left:1494px;top:832.0px;width:116px;color:#3a3a3a">12000017</div><div class="t" style="left:1615px;top:832.0px;width:42px;color:#3a3a3a">100000013</div><div class="ic" style="left:862px;top:855.5px;height:23.5px"></div><div class="c" style="left:884px;top:855.5px;width:65px;height:23.5px;background:#e3e3e3"></div><div class="c" style="left:949px;top:855.5px;width:144px;height:23.5px;background:#e3e3e3"></div><div class="c" style="left:1093px;top:855.5px;width:132px;height:23.5px;background:#e3e3e3"></div><div class="c" style="left:1225px;top:855.5px;width:132px;height:23.5px;background:#e3e3e3"></div><div class="c" style="left:1357px;top:855.5px;width:133px;height:23.5px;background:#e3e3e3"></div><div class="c" style="left:1490px;top:855.5px;width:121px;height:23.5px;background:#fff"></div><div class="c" style="left:1611px;top:855.5px;width:47px;height:23.5px;background:#e3e3e3"></div><div class="t" style="left:884px;top:855.5px;width:61px;color:#3a3a3a"><div class="tri">1 068<span class="cm">,</span>00</div></div><div class="t" style="left:953px;top:855.5px;width:139px;color:#3a3a3a">24</div><div class="t" style="left:1097px;top:855.5px;width:127px;color:#3a3a3a">16<span class="sl">/</span>01<span class="sl">/</span>2024</div><div class="t" style="left:1494px;top:855.5px;width:116px;color:#3a3a3a">12000020</div><div class="t" style="left:1615px;top:855.5px;width:42px;color:#3a3a3a">100000013</div><div class="ic" style="left:862px;top:879.0px;height:23.5px"></div><div class="c" style="left:884px;top:879.0px;width:65px;height:23.5px;background:#e3e3e3"></div><div class="c" style="left:949px;top:879.0px;width:144px;height:23.5px;background:#e3e3e3"></div><div class="c" style="left:1093px;top:879.0px;width:132px;height:23.5px;background:#e3e3e3"></div><div class="c" style="left:1225px;top:879.0px;width:132px;height:23.5px;background:#e3e3e3"></div><div class="c" style="left:1357px;top:879.0px;width:133px;height:23.5px;background:#e3e3e3"></div><div class="c" style="left:1490px;top:879.0px;width:121px;height:23.5px;background:#fff"></div><div class="c" style="left:1611px;top:879.0px;width:47px;height:23.5px;background:#e3e3e3"></div><div class="t" style="left:884px;top:879.0px;width:61px;color:#3a3a3a"><div class="tri">7 000<span class="cm">,</span>00</div></div><div class="t" style="left:953px;top:879.0px;width:139px;color:#3a3a3a">1000</div><div class="t" style="left:1097px;top:879.0px;width:127px;color:#3a3a3a">16<span class="sl">/</span>01<span class="sl">/</span>2024</div><div class="t" style="left:1494px;top:879.0px;width:116px;color:#3a3a3a">12000022</div><div class="t" style="left:1615px;top:879.0px;width:42px;color:#3a3a3a">100000013</div><div class="ic" style="left:862px;top:902.5px;height:23.5px"></div><div class="c" style="left:884px;top:902.5px;width:65px;height:23.5px;background:#e3e3e3"></div><div class="c" style="left:949px;top:902.5px;width:144px;height:23.5px;background:#e3e3e3"></div><div class="c" style="left:1093px;top:902.5px;width:132px;height:23.5px;background:#e3e3e3"></div><div class="c" style="left:1225px;top:902.5px;width:132px;height:23.5px;background:#e3e3e3"></div><div class="c" style="left:1357px;top:902.5px;width:133px;height:23.5px;background:#e3e3e3"></div><div class="c" style="left:1490px;top:902.5px;width:121px;height:23.5px;background:#fff"></div><div class="c" style="left:1611px;top:902.5px;width:47px;height:23.5px;background:#e3e3e3"></div><div class="t" style="left:884px;top:902.5px;width:61px;color:#3a3a3a"><div class="tri">299<span class="cm">,</span>70</div></div><div class="t" style="left:953px;top:902.5px;width:139px;color:#3a3a3a">6</div><div class="t" style="left:1097px;top:902.5px;width:127px;color:#3a3a3a">24<span class="sl">/</span>01<span class="sl">/</span>2024</div><div class="t" style="left:1494px;top:902.5px;width:116px;color:#3a3a3a">12000023</div><div class="t" style="left:1615px;top:902.5px;width:42px;color:#3a3a3a">100000013</div><div class="ic" style="left:862px;top:926.0px;height:23.5px"></div><div class="c" style="left:884px;top:926.0px;width:65px;height:23.5px;background:#e3e3e3"></div><div class="c" style="left:949px;top:926.0px;width:144px;height:23.5px;background:#e3e3e3"></div><div class="c" style="left:1093px;top:926.0px;width:132px;height:23.5px;background:#e3e3e3"></div><div class="c" style="left:1225px;top:926.0px;width:132px;height:23.5px;background:#e3e3e3"></div><div class="c" style="left:1357px;top:926.0px;width:133px;height:23.5px;background:#e3e3e3"></div><div class="c" style="left:1490px;top:926.0px;width:121px;height:23.5px;background:#fff"></div><div class="c" style="left:1611px;top:926.0px;width:47px;height:23.5px;background:#e3e3e3"></div><div class="t" style="left:884px;top:926.0px;width:61px;color:#3a3a3a"><div class="tri">961<span class="cm">,</span>20</div></div><div class="t" style="left:953px;top:926.0px;width:139px;color:#3a3a3a">24</div><div class="t" style="left:1097px;top:926.0px;width:127px;color:#3a3a3a">30<span class="sl">/</span>01<span class="sl">/</span>2024</div><div class="t" style="left:1494px;top:926.0px;width:116px;color:#3a3a3a">12000024</div><div class="t" style="left:1615px;top:926.0px;width:42px;color:#3a3a3a">100000013</div><div class="ic" style="left:862px;top:949.5px;height:23.5px"></div><div class="c" style="left:884px;top:949.5px;width:65px;height:23.5px;background:#e3e3e3"></div><div class="c" style="left:949px;top:949.5px;width:144px;height:23.5px;background:#e3e3e3"></div><div class="c" style="left:1093px;top:949.5px;width:132px;height:23.5px;background:#e3e3e3"></div><div class="c" style="left:1225px;top:949.5px;width:132px;height:23.5px;background:#e3e3e3"></div><div class="c" style="left:1357px;top:949.5px;width:133px;height:23.5px;background:#e3e3e3"></div><div class="c" style="left:1490px;top:949.5px;width:121px;height:23.5px;background:#fff"></div><div class="c" style="left:1611px;top:949.5px;width:47px;height:23.5px;background:#e3e3e3"></div><div class="t" style="left:884px;top:949.5px;width:61px;color:#3a3a3a"><div class="tri">1 400<span class="cm">,</span>00</div></div><div class="t" style="left:953px;top:949.5px;width:139px;color:#3a3a3a">600</div><div class="t" style="left:1097px;top:949.5px;width:127px;color:#3a3a3a">12<span class="sl">/</span>02<span class="sl">/</span>2024</div><div class="t" style="left:1494px;top:949.5px;width:116px;color:#3a3a3a">12000027</div><div class="t" style="left:1615px;top:949.5px;width:42px;color:#3a3a3a">600000002</div><div class="ic" style="left:862px;top:973.0px;height:23.5px"></div><div class="c" style="left:884px;top:973.0px;width:65px;height:23.5px;background:#e3e3e3"></div><div class="c" style="left:949px;top:973.0px;width:144px;height:23.5px;background:#e3e3e3"></div><div class="c" style="left:1093px;top:973.0px;width:132px;height:23.5px;background:#e3e3e3"></div><div class="c" style="left:1225px;top:973.0px;width:132px;height:23.5px;background:#e3e3e3"></div><div class="c" style="left:1357px;top:973.0px;width:133px;height:23.5px;background:#e3e3e3"></div><div class="c" style="left:1490px;top:973.0px;width:121px;height:23.5px;background:#fff"></div><div class="c" style="left:1611px;top:973.0px;width:47px;height:23.5px;background:#e3e3e3"></div><div class="t" style="left:884px;top:973.0px;width:61px;color:#3a3a3a"><div class="tri">5 585<span class="cm">,</span>42</div></div><div class="t" style="left:953px;top:973.0px;width:139px;color:#3a3a3a">7</div><div class="t" style="left:1097px;top:973.0px;width:127px;color:#3a3a3a">05<span class="sl">/</span>03<span class="sl">/</span>2024</div><div class="t" style="left:1494px;top:973.0px;width:116px;color:#3a3a3a">12000038</div><div class="t" style="left:1615px;top:973.0px;width:42px;color:#3a3a3a">600000002</div><div class="ic" style="left:862px;top:996.5px;height:23.5px"></div><div class="c" style="left:884px;top:996.5px;width:65px;height:23.5px;background:#e3e3e3"></div><div class="c" style="left:949px;top:996.5px;width:144px;height:23.5px;background:#e3e3e3"></div><div class="c" style="left:1093px;top:996.5px;width:132px;height:23.5px;background:#e3e3e3"></div><div class="c" style="left:1225px;top:996.5px;width:132px;height:23.5px;background:#e3e3e3"></div><div class="c" style="left:1357px;top:996.5px;width:133px;height:23.5px;background:#e3e3e3"></div><div class="c" style="left:1490px;top:996.5px;width:121px;height:23.5px;background:#fff"></div><div class="c" style="left:1611px;top:996.5px;width:47px;height:23.5px;background:#e3e3e3"></div><div class="t" style="left:884px;top:996.5px;width:61px;color:#3a3a3a"><div class="tri">3 912<span class="cm">,</span>00</div></div><div class="t" style="left:953px;top:996.5px;width:139px;color:#3a3a3a">12</div><div class="t" style="left:1097px;top:996.5px;width:127px;color:#3a3a3a">08<span class="sl">/</span>03<span class="sl">/</span>2024</div><div class="t" style="left:1494px;top:996.5px;width:116px;color:#3a3a3a">12000042</div><div class="t" style="left:1615px;top:996.5px;width:42px;color:#3a3a3a">100000013</div><div class="ic" style="left:862px;top:1020.0px;height:5.5px"></div><div class="c" style="left:884px;top:1020.0px;width:65px;height:5.5px;background:#e3e3e3"></div><div class="c" style="left:949px;top:1020.0px;width:144px;height:5.5px;background:#e3e3e3"></div><div class="c" style="left:1093px;top:1020.0px;width:132px;height:5.5px;background:#e3e3e3"></div><div class="c" style="left:1225px;top:1020.0px;width:132px;height:5.5px;background:#e3e3e3"></div><div class="c" style="left:1357px;top:1020.0px;width:133px;height:5.5px;background:#e3e3e3"></div><div class="c" style="left:1490px;top:1020.0px;width:121px;height:5.5px;background:#fff"></div><div class="c" style="left:1611px;top:1020.0px;width:47px;height:5.5px;background:#e3e3e3"></div><div class="hs" style="left:883px;top:761px"></div><div class="ht" style="left:888px;top:761px;width:60px">Total HT</div><div class="hs" style="left:948px;top:761px"></div><div class="ht" style="left:953px;top:761px;width:139px">Nb cols équivalents</div><div class="hs" style="left:1092px;top:761px"></div><div class="ht" style="left:1097px;top:761px;width:127px">Date cmd.</div><div class="hs" style="left:1224px;top:761px"></div><div class="ht" style="left:1229px;top:761px;width:127px">Date fin option</div><div class="hs" style="left:1356px;top:761px"></div><div class="ht" style="left:1361px;top:761px;width:128px">Date éch.</div><div class="hs" style="left:1489px;top:761px"></div><div class="ht" style="left:1494px;top:761px;width:116px">N° Commande</div><div class="hs" style="left:1610px;top:761px"></div><div class="ht" style="left:1615px;top:761px;width:42px">Code tiers</div><div class="vsb" style="left:1658px;top:761px;width:25px;height:264.5px"></div><div class="vth" style="left:1660.5px;top:786px;width:20px;height:25px"></div><div class="au" style="left:1665px;top:769px"></div><div class="ad" style="left:1664px;top:1006.5px"></div><div class="hsb" style="left:862px;top:1025.5px;width:822px"></div><div class="hth" style="left:888px;top:1028.0px;width:593px"></div><div class="al" style="left:869.5px;top:1031.0px"></div><div class="ar" style="left:1641px;top:1031.0px"></div></div><div style="left:0;top:0;width:2606px;height:1180px;overflow:hidden;filter:blur(0.8px);opacity:0.55"><div class="tb"></div><div class="content"></div><div class="tabbar"></div><div class="lb"></div><div class="rb"></div><div class="rbt"></div><div class="title">DashBoard Metier (q_gs_dashboard:a:q_gs_dashboard)</div><div style="left:14.5px;top:9.5px;width:9.5px;height:9px;border:2.2px solid #7d8c94;border-bottom:none;border-radius:5px 5px 0 0"></div><div style="left:12.5px;top:15px;width:13.5px;height:13px;border-radius:1.5px;border-top:1.5px solid #a87838;background:linear-gradient(90deg,#e8b468,#e49a38 45%,#d0742a)"></div><div style="left:9px;top:36px;width:66px;height:28px;border:1px solid #e6e6e6;border-top:none;background:#f8f8f8"></div><div class="tab" style="left:15.4px;">Général</div><div class="tab" style="left:90.5px;letter-spacing:-0.7px">ADV</div><div class="tab" style="left:141px;">Logistique</div><div class="tab" style="left:223.7px;letter-spacing:-0.13px">Compta</div><div class="tab" style="left:291.2px;letter-spacing:-0.13px">Gestion</div><div class="tab" style="left:357.8px;word-spacing:2.4px">Achat - Appro</div><div class="tab" style="left:466px;letter-spacing:0.12px">Production</div><div class="tab" style="left:553.7px;">Article</div><div class="tab" style="left:611.2px;">Qualité</div><div class="tab" style="left:674.8px;letter-spacing:-0.08px">Tous les champs</div><div class="sep" style="left:134px"></div><div class="sep" style="left:213px"></div><div class="sep" style="left:281px"></div><div class="sep" style="left:347px"></div><div class="sep" style="left:457px"></div><div class="sep" style="left:544px"></div><div class="sep" style="left:601px"></div><div class="sep" style="left:665px"></div><div class="sep" style="left:789px"></div><div style="left:2458px;top:7px;width:44px;height:25px;border:1.5px solid #7f9ab4;border-radius:4px;background:linear-gradient(#c4d9ec,#bcd3e8 45%,#9eb7cf 46%,#a5bdd4 80%,#b8cee2)"></div><div style="left:2471px;top:18px;width:15px;height:6px;border:1.5px solid #6a7e90;background:#eef2f6;border-radius:2px"></div><div style="left:2504px;top:7px;width:44px;height:25px;border:1.5px solid #7f9ab4;border-radius:4px;background:linear-gradient(#c4d9ec,#bcd3e8 45%,#9eb7cf 46%,#a5bdd4 80%,#b8cee2)"></div><div style="left:2518px;top:12px;width:14px;height:12px;border:1.5px solid #6a7e90;background:#eef2f6;border-radius:2px"></div><div style="left:2522px;top:16.5px;width:7px;height:4px;background:#5a6a78"></div><div style="left:2551px;top:6px;width:45px;height:26px;border:1.5px solid #6e5a68;border-radius:4px;background:linear-gradient(#e2b0a4,#e49a88 44%,#c24a30 46%,#c45a40 80%,#c88a80)"></div><svg style="position:absolute;left:2564px;top:11px" width="18" height="15" viewBox="0 0 18 15"><path d="M4 3 L14 12 M14 3 L4 12" stroke="#6a4a44" stroke-width="4.6" stroke-linecap="round"/><path d="M4.3 3.3 L13.7 11.7 M13.7 3.3 L4.3 11.7" stroke="#f4eeee" stroke-width="2.4" stroke-linecap="round"/></svg><div style="left:2596px;top:64px;width:2.5px;height:1116px;background:#8a9499"></div><div style="left:6px;top:64px;width:2590px;height:1px;background:#ebebea"></div><div class="pn" style="left:21px;top:77px;width:825px;height:315px"></div><div class="ph" style="left:22px;top:77px;width:822px"></div><div class="pt" style="left:31px;top:77px">Mes commandes 15 derniers jours [9]</div><div class="wa" style="left:22px;top:100px;width:822px;height:264.5px"></div><div class="ch" style="left:22px;top:100px;width:820px"></div><div class="ic" style="left:22px;top:125.0px;height:22.5px"></div><div class="c" style="left:44px;top:125.0px;width:230px;height:22.5px;background:#fdfde2"></div><div class="c" style="left:274px;top:125.0px;width:144px;height:22.5px;background:#e3e3e3"></div><div class="c" style="left:418px;top:125.0px;width:132px;height:22.5px;background:#e3e3e3"></div><div class="c" style="left:550px;top:125.0px;width:120px;height:22.5px;background:#fff"></div><div class="c" style="left:670px;top:125.0px;width:172px;height:22.5px;background:#e3e3e3"></div><div class="t" style="left:44px;top:125.0px;width:226px;color:#a04a34"><div class="tri">0<span class="cm">,</span>00</div></div><div class="t" style="left:278px;top:125.0px;width:139px;color:#3a3a3a">1</div><div class="t" style="left:422px;top:125.0px;width:127px;color:#3a3a3a">02<span class="sl">/</span>04<span class="sl">/</span>2025</div><div class="t" style="left:554px;top:125.0px;width:115px;color:#3a3a3a">12000219</div><div class="t" style="left:674px;top:125.0px;width:167px;color:#3a3a3a">100000029</div><div class="arr" style="left:29.5px;top:127.0px"></div><div class="ic" style="left:22px;top:147.5px;height:23.5px"></div><div class="c" style="left:44px;top:147.5px;width:230px;height:23.5px;background:#e3e3e3"></div><div class="c" style="left:274px;top:147.5px;width:144px;height:23.5px;background:#e3e3e3"></div><div class="c" style="left:418px;top:147.5px;width:132px;height:23.5px;background:#e3e3e3"></div><div class="c" style="left:550px;top:147.5px;width:120px;height:23.5px;background:#fff"></div><div class="c" style="left:670px;top:147.5px;width:172px;height:23.5px;background:#e3e3e3"></div><div class="t" style="left:44px;top:147.5px;width:226px;color:#3a3a3a"><div class="tri">65 168<span class="cm">,</span>75</div></div><div class="t" style="left:278px;top:147.5px;width:139px;color:#3a3a3a">6511</div><div class="t" style="left:422px;top:147.5px;width:127px;color:#3a3a3a">01<span class="sl">/</span>04<span class="sl">/</span>2025</div><div class="t" style="left:554px;top:147.5px;width:115px;color:#3a3a3a">12000262</div><div class="t" style="left:674px;top:147.5px;width:167px;color:#3a3a3a">600000002</div><div class="ic" style="left:22px;top:171.0px;height:23.5px"></div><div class="c" style="left:44px;top:171.0px;width:230px;height:23.5px;background:#e3e3e3"></div><div class="c" style="left:274px;top:171.0px;width:144px;height:23.5px;background:#e3e3e3"></div><div class="c" style="left:418px;top:171.0px;width:132px;height:23.5px;background:#e3e3e3"></div><div class="c" style="left:550px;top:171.0px;width:120px;height:23.5px;background:#fff"></div><div class="c" style="left:670px;top:171.0px;width:172px;height:23.5px;background:#e3e3e3"></div><div class="t" style="left:44px;top:171.0px;width:226px;color:#3a3a3a"><div class="tri">67 148<span class="cm">,</span>75</div></div><div class="t" style="left:278px;top:171.0px;width:139px;color:#3a3a3a">6535</div><div class="t" style="left:422px;top:171.0px;width:127px;color:#3a3a3a">01<span class="sl">/</span>04<span class="sl">/</span>2025</div><div class="t" style="left:554px;top:171.0px;width:115px;color:#3a3a3a">12000263</div><div class="t" style="left:674px;top:171.0px;width:167px;color:#3a3a3a">600000002</div><div class="ic" style="left:22px;top:194.5px;height:23.5px"></div><div class="c" style="left:44px;top:194.5px;width:230px;height:23.5px;background:#e3e3e3"></div><div class="c" style="left:274px;top:194.5px;width:144px;height:23.5px;background:#e3e3e3"></div><div class="c" style="left:418px;top:194.5px;width:132px;height:23.5px;background:#e3e3e3"></div><div class="c" style="left:550px;top:194.5px;width:120px;height:23.5px;background:#fff"></div><div class="c" style="left:670px;top:194.5px;width:172px;height:23.5px;background:#e3e3e3"></div><div class="t" style="left:44px;top:194.5px;width:226px;color:#3a3a3a"><div class="tri">67 148<span class="cm">,</span>75</div></div><div class="t" style="left:278px;top:194.5px;width:139px;color:#3a3a3a">6535</div><div class="t" style="left:422px;top:194.5px;width:127px;color:#3a3a3a">01<span class="sl">/</span>04<span class="sl">/</span>2025</div><div class="t" style="left:554px;top:194.5px;width:115px;color:#3a3a3a">12000264</div><div class="t" style="left:674px;top:194.5px;width:167px;color:#3a3a3a">600000002</div><div class="ic" style="left:22px;top:218.0px;height:23.5px"></div><div class="c" style="left:44px;top:218.0px;width:230px;height:23.5px;background:#e3e3e3"></div><div class="c" style="left:274px;top:218.0px;width:144px;height:23.5px;background:#e3e3e3"></div><div class="c" style="left:418px;top:218.0px;width:132px;height:23.5px;background:#e3e3e3"></div><div class="c" style="left:550px;top:218.0px;width:120px;height:23.5px;background:#fff"></div><div class="c" style="left:670px;top:218.0px;width:172px;height:23.5px;background:#e3e3e3"></div><div class="t" style="left:44px;top:218.0px;width:226px;color:#3a3a3a"><div class="tri">66 818<span class="cm">,</span>75</div></div><div class="t" style="left:278px;top:218.0px;width:139px;color:#3a3a3a">6535</div><div class="t" style="left:422px;top:218.0px;width:127px;color:#3a3a3a">01<span class="sl">/</span>04<span class="sl">/</span>2025</div><div class="t" style="left:554px;top:218.0px;width:115px;color:#3a3a3a">12000265</div><div class="t" style="left:674px;top:218.0px;width:167px;color:#3a3a3a">600000002</div><div class="ic" style="left:22px;top:241.5px;height:23.5px"></div><div class="c" style="left:44px;top:241.5px;width:230px;height:23.5px;background:#e3e3e3"></div><div class="c" style="left:274px;top:241.5px;width:144px;height:23.5px;background:#e3e3e3"></div><div class="c" style="left:418px;top:241.5px;width:132px;height:23.5px;background:#e3e3e3"></div><div class="c" style="left:550px;top:241.5px;width:120px;height:23.5px;background:#fff"></div><div class="c" style="left:670px;top:241.5px;width:172px;height:23.5px;background:#e3e3e3"></div><div class="t" style="left:44px;top:241.5px;width:226px;color:#3a3a3a"><div class="tri">66 818<span class="cm">,</span>75</div></div><div class="t" style="left:278px;top:241.5px;width:139px;color:#3a3a3a">6535</div><div class="t" style="left:422px;top:241.5px;width:127px;color:#3a3a3a">01<span class="sl">/</span>04<span class="sl">/</span>2025</div><div class="t" style="left:554px;top:241.5px;width:115px;color:#3a3a3a">12000266</div><div class="t" style="left:674px;top:241.5px;width:167px;color:#3a3a3a">600000002</div><div class="ic" style="left:22px;top:265.0px;height:23.5px"></div><div class="c" style="left:44px;top:265.0px;width:230px;height:23.5px;background:#e3e3e3"></div><div class="c" style="left:274px;top:265.0px;width:144px;height:23.5px;background:#e3e3e3"></div><div class="c" style="left:418px;top:265.0px;width:132px;height:23.5px;background:#e3e3e3"></div><div class="c" style="left:550px;top:265.0px;width:120px;height:23.5px;background:#fff"></div><div class="c" style="left:670px;top:265.0px;width:172px;height:23.5px;background:#e3e3e3"></div><div class="t" style="left:44px;top:265.0px;width:226px;color:#3a3a3a"><div class="tri">67 781<span class="cm">,</span>25</div></div><div class="t" style="left:278px;top:265.0px;width:139px;color:#3a3a3a">6549</div><div class="t" style="left:422px;top:265.0px;width:127px;color:#3a3a3a">01<span class="sl">/</span>04<span class="sl">/</span>2025</div><div class="t" style="left:554px;top:265.0px;width:115px;color:#3a3a3a">12000267</div><div class="t" style="left:674px;top:265.0px;width:167px;color:#3a3a3a">600000002</div><div class="ic" style="left:22px;top:288.5px;height:23.5px"></div><div class="c" style="left:44px;top:288.5px;width:230px;height:23.5px;background:#e3e3e3"></div><div class="c" style="left:274px;top:288.5px;width:144px;height:23.5px;background:#e3e3e3"></div><div class="c" style="left:418px;top:288.5px;width:132px;height:23.5px;background:#e3e3e3"></div><div class="c" style="left:550px;top:288.5px;width:120px;height:23.5px;background:#fff"></div><div class="c" style="left:670px;top:288.5px;width:172px;height:23.5px;background:#e3e3e3"></div><div class="t" style="left:44px;top:288.5px;width:226px;color:#3a3a3a"><div class="tri">68 537<span class="cm">,</span>50</div></div><div class="t" style="left:278px;top:288.5px;width:139px;color:#3a3a3a">6560</div><div class="t" style="left:422px;top:288.5px;width:127px;color:#3a3a3a">01<span class="sl">/</span>04<span class="sl">/</span>2025</div><div class="t" style="left:554px;top:288.5px;width:115px;color:#3a3a3a">12000268</div><div class="t" style="left:674px;top:288.5px;width:167px;color:#3a3a3a">600000002</div><div class="ic" style="left:22px;top:312.0px;height:23.5px"></div><div class="c" style="left:44px;top:312.0px;width:230px;height:23.5px;background:#e3e3e3"></div><div class="c" style="left:274px;top:312.0px;width:144px;height:23.5px;background:#e3e3e3"></div><div class="c" style="left:418px;top:312.0px;width:132px;height:23.5px;background:#e3e3e3"></div><div class="c" style="left:550px;top:312.0px;width:120px;height:23.5px;background:#fff"></div><div class="c" style="left:670px;top:312.0px;width:172px;height:23.5px;background:#e3e3e3"></div><div class="t" style="left:44px;top:312.0px;width:226px;color:#3a3a3a"><div class="tri">0<span class="cm">,</span>00</div></div><div class="t" style="left:422px;top:312.0px;width:127px;color:#3a3a3a">01<span class="sl">/</span>04<span class="sl">/</span>2025</div><div class="t" style="left:554px;top:312.0px;width:115px;color:#3a3a3a">12000269</div><div class="t" style="left:674px;top:312.0px;width:167px;color:#3a3a3a">100000023</div><div class="ic" style="left:22px;top:335.5px;height:23.5px"></div><div class="c" style="left:44px;top:335.5px;width:230px;height:23.5px;background:#fff"></div><div class="c" style="left:274px;top:335.5px;width:144px;height:23.5px;background:#fff"></div><div class="c" style="left:418px;top:335.5px;width:132px;height:23.5px;background:#fff"></div><div class="c" style="left:550px;top:335.5px;width:120px;height:23.5px;background:#fff"></div><div class="c" style="left:670px;top:335.5px;width:172px;height:23.5px;background:#fff"></div><div class="hs" style="left:43px;top:100px"></div><div class="ht" style="left:48px;top:100px;width:225px">Total HT</div><div class="hs" style="left:273px;top:100px"></div><div class="ht" style="left:278px;top:100px;width:139px">Nb cols équivalents</div><div class="hs" style="left:417px;top:100px"></div><div class="ht" style="left:422px;top:100px;width:127px">Date cmd.</div><div class="hs" style="left:549px;top:100px"></div><div class="ht" style="left:554px;top:100px;width:115px">N° Commande</div><div class="hs" style="left:669px;top:100px"></div><div class="ht" style="left:674px;top:100px;width:167px">Code tiers</div><div class="hsb" style="left:22px;top:364.5px;width:822px"></div><div class="hth" style="left:48px;top:367.0px;width:683px"></div><div class="al" style="left:29.5px;top:370.0px"></div><div class="ar" style="left:824px;top:370.0px"></div><div class="pn" style="left:861px;top:77px;width:825px;height:315px"></div><div class="ph" style="left:862px;top:77px;width:822px"></div><div class="pt" style="left:871px;top:77px">Mes Commandes en retard d’expédition [189]</div><div class="wa" style="left:862px;top:100px;width:822px;height:264.5px"></div><div class="ch" style="left:862px;top:100px;width:796px"></div><div class="ic" style="left:862px;top:125.0px;height:22.5px"></div><div class="c" style="left:884px;top:125.0px;width:230px;height:22.5px;background:#fdfde2"></div><div class="c" style="left:1114px;top:125.0px;width:143px;height:22.5px;background:#e3e3e3"></div><div class="c" style="left:1257px;top:125.0px;width:134px;height:22.5px;background:#e3e3e3"></div><div class="c" style="left:1391px;top:125.0px;width:120px;height:22.5px;background:#fff"></div><div class="c" style="left:1511px;top:125.0px;width:147px;height:22.5px;background:#e3e3e3"></div><div class="t" style="left:884px;top:125.0px;width:226px;color:#a04a34"><div class="tri">201 025<span class="cm">,</span>00</div></div><div class="t" style="left:1118px;top:125.0px;width:138px;color:#3a3a3a">6</div><div class="t" style="left:1261px;top:125.0px;width:129px;color:#3a3a3a">10<span class="sl">/</span>05<span class="sl">/</span>2024</div><div class="t" style="left:1395px;top:125.0px;width:115px;color:#3a3a3a">1200000</div><div class="t" style="left:1515px;top:125.0px;width:142px;color:#3a3a3a">100000013</div><div class="arr" style="left:869.5px;top:127.0px"></div><div class="ic" style="left:862px;top:147.5px;height:23.5px"></div><div class="c" style="left:884px;top:147.5px;width:230px;height:23.5px;background:#e3e3e3"></div><div class="c" style="left:1114px;top:147.5px;width:143px;height:23.5px;background:#e3e3e3"></div><div class="c" style="left:1257px;top:147.5px;width:134px;height:23.5px;background:#e3e3e3"></div><div class="c" style="left:1391px;top:147.5px;width:120px;height:23.5px;background:#fff"></div><div class="c" style="left:1511px;top:147.5px;width:147px;height:23.5px;background:#e3e3e3"></div><div class="t" style="left:884px;top:147.5px;width:226px;color:#3a3a3a"><div class="tri">0<span class="cm">,</span>00</div></div><div class="t" style="left:1261px;top:147.5px;width:129px;color:#3a3a3a">10<span class="sl">/</span>05<span class="sl">/</span>2024</div><div class="t" style="left:1395px;top:147.5px;width:115px;color:#3a3a3a">1200001</div><div class="t" style="left:1515px;top:147.5px;width:142px;color:#3a3a3a">100000017</div><div class="ic" style="left:862px;top:171.0px;height:23.5px"></div><div class="c" style="left:884px;top:171.0px;width:230px;height:23.5px;background:#e3e3e3"></div><div class="c" style="left:1114px;top:171.0px;width:143px;height:23.5px;background:#e3e3e3"></div><div class="c" style="left:1257px;top:171.0px;width:134px;height:23.5px;background:#e3e3e3"></div><div class="c" style="left:1391px;top:171.0px;width:120px;height:23.5px;background:#fff"></div><div class="c" style="left:1511px;top:171.0px;width:147px;height:23.5px;background:#e3e3e3"></div><div class="t" style="left:884px;top:171.0px;width:226px;color:#3a3a3a"><div class="tri">621<span class="cm">,</span>11</div></div><div class="t" style="left:1261px;top:171.0px;width:129px;color:#3a3a3a">10<span class="sl">/</span>05<span class="sl">/</span>2024</div><div class="t" style="left:1395px;top:171.0px;width:115px;color:#3a3a3a">1200002</div><div class="t" style="left:1515px;top:171.0px;width:142px;color:#3a3a3a">100000013</div><div class="ic" style="left:862px;top:194.5px;height:23.5px"></div><div class="c" style="left:884px;top:194.5px;width:230px;height:23.5px;background:#e3e3e3"></div><div class="c" style="left:1114px;top:194.5px;width:143px;height:23.5px;background:#e3e3e3"></div><div class="c" style="left:1257px;top:194.5px;width:134px;height:23.5px;background:#e3e3e3"></div><div class="c" style="left:1391px;top:194.5px;width:120px;height:23.5px;background:#fff"></div><div class="c" style="left:1511px;top:194.5px;width:147px;height:23.5px;background:#e3e3e3"></div><div class="t" style="left:884px;top:194.5px;width:226px;color:#3a3a3a"><div class="tri">312<span class="cm">,</span>00</div></div><div class="t" style="left:1261px;top:194.5px;width:129px;color:#3a3a3a">10<span class="sl">/</span>05<span class="sl">/</span>2024</div><div class="t" style="left:1395px;top:194.5px;width:115px;color:#3a3a3a">1200003</div><div class="t" style="left:1515px;top:194.5px;width:142px;color:#3a3a3a">100000013</div><div class="ic" style="left:862px;top:218.0px;height:23.5px"></div><div class="c" style="left:884px;top:218.0px;width:230px;height:23.5px;background:#e3e3e3"></div><div class="c" style="left:1114px;top:218.0px;width:143px;height:23.5px;background:#e3e3e3"></div><div class="c" style="left:1257px;top:218.0px;width:134px;height:23.5px;background:#e3e3e3"></div><div class="c" style="left:1391px;top:218.0px;width:120px;height:23.5px;background:#fff"></div><div class="c" style="left:1511px;top:218.0px;width:147px;height:23.5px;background:#e3e3e3"></div><div class="t" style="left:884px;top:218.0px;width:226px;color:#3a3a3a"><div class="tri">2 832<span class="cm">,</span>00</div></div><div class="t" style="left:1261px;top:218.0px;width:129px;color:#3a3a3a">22<span class="sl">/</span>05<span class="sl">/</span>2024</div><div class="t" style="left:1395px;top:218.0px;width:115px;color:#3a3a3a">1200004</div><div class="t" style="left:1515px;top:218.0px;width:142px;color:#3a3a3a">100000013</div><div class="ic" style="left:862px;top:241.5px;height:23.5px"></div><div class="c" style="left:884px;top:241.5px;width:230px;height:23.5px;background:#e3e3e3"></div><div class="c" style="left:1114px;top:241.5px;width:143px;height:23.5px;background:#e3e3e3"></div><div class="c" style="left:1257px;top:241.5px;width:134px;height:23.5px;background:#e3e3e3"></div><div class="c" style="left:1391px;top:241.5px;width:120px;height:23.5px;background:#fff"></div><div class="c" style="left:1511px;top:241.5px;width:147px;height:23.5px;background:#e3e3e3"></div><div class="t" style="left:884px;top:241.5px;width:226px;color:#3a3a3a"><div class="tri">39 840<span class="cm">,</span>00</div></div><div class="t" style="left:1261px;top:241.5px;width:129px;color:#3a3a3a">22<span class="sl">/</span>05<span class="sl">/</span>2024</div><div class="t" style="left:1395px;top:241.5px;width:115px;color:#3a3a3a">1200005</div><div class="t" style="left:1515px;top:241.5px;width:142px;color:#3a3a3a">100000013</div><div class="ic" style="left:862px;top:265.0px;height:23.5px"></div><div class="c" style="left:884px;top:265.0px;width:230px;height:23.5px;background:#e3e3e3"></div><div class="c" style="left:1114px;top:265.0px;width:143px;height:23.5px;background:#e3e3e3"></div><div class="c" style="left:1257px;top:265.0px;width:134px;height:23.5px;background:#e3e3e3"></div><div class="c" style="left:1391px;top:265.0px;width:120px;height:23.5px;background:#fff"></div><div class="c" style="left:1511px;top:265.0px;width:147px;height:23.5px;background:#e3e3e3"></div><div class="t" style="left:884px;top:265.0px;width:226px;color:#3a3a3a"><div class="tri">0<span class="cm">,</span>00</div></div><div class="t" style="left:1261px;top:265.0px;width:129px;color:#3a3a3a">22<span class="sl">/</span>05<span class="sl">/</span>2024</div><div class="t" style="left:1395px;top:265.0px;width:115px;color:#3a3a3a">1200006</div><div class="t" style="left:1515px;top:265.0px;width:142px;color:#3a3a3a">100000013</div><div class="ic" style="left:862px;top:288.5px;height:23.5px"></div><div class="c" style="left:884px;top:288.5px;width:230px;height:23.5px;background:#e3e3e3"></div><div class="c" style="left:1114px;top:288.5px;width:143px;height:23.5px;background:#e3e3e3"></div><div class="c" style="left:1257px;top:288.5px;width:134px;height:23.5px;background:#e3e3e3"></div><div class="c" style="left:1391px;top:288.5px;width:120px;height:23.5px;background:#fff"></div><div class="c" style="left:1511px;top:288.5px;width:147px;height:23.5px;background:#e3e3e3"></div><div class="t" style="left:884px;top:288.5px;width:226px;color:#3a3a3a"><div class="tri">0<span class="cm">,</span>00</div></div><div class="t" style="left:1261px;top:288.5px;width:129px;color:#3a3a3a">22<span class="sl">/</span>05<span class="sl">/</span>2024</div><div class="t" style="left:1395px;top:288.5px;width:115px;color:#3a3a3a">1200007</div><div class="t" style="left:1515px;top:288.5px;width:142px;color:#3a3a3a">100000013</div><div class="ic" style="left:862px;top:312.0px;height:23.5px"></div><div class="c" style="left:884px;top:312.0px;width:230px;height:23.5px;background:#e3e3e3"></div><div class="c" style="left:1114px;top:312.0px;width:143px;height:23.5px;background:#e3e3e3"></div><div class="c" style="left:1257px;top:312.0px;width:134px;height:23.5px;background:#e3e3e3"></div><div class="c" style="left:1391px;top:312.0px;width:120px;height:23.5px;background:#fff"></div><div class="c" style="left:1511px;top:312.0px;width:147px;height:23.5px;background:#e3e3e3"></div><div class="t" style="left:884px;top:312.0px;width:226px;color:#3a3a3a"><div class="tri">1 416<span class="cm">,</span>00</div></div><div class="t" style="left:1261px;top:312.0px;width:129px;color:#3a3a3a">22<span class="sl">/</span>05<span class="sl">/</span>2024</div><div class="t" style="left:1395px;top:312.0px;width:115px;color:#3a3a3a">1200008</div><div class="t" style="left:1515px;top:312.0px;width:142px;color:#3a3a3a">100000028</div><div class="ic" style="left:862px;top:335.5px;height:23.5px"></div><div class="c" style="left:884px;top:335.5px;width:230px;height:23.5px;background:#e3e3e3"></div><div class="c" style="left:1114px;top:335.5px;width:143px;height:23.5px;background:#e3e3e3"></div><div class="c" style="left:1257px;top:335.5px;width:134px;height:23.5px;background:#e3e3e3"></div><div class="c" style="left:1391px;top:335.5px;width:120px;height:23.5px;background:#fff"></div><div class="c" style="left:1511px;top:335.5px;width:147px;height:23.5px;background:#e3e3e3"></div><div class="t" style="left:884px;top:335.5px;width:226px;color:#3a3a3a"><div class="tri">1 308<span class="cm">,</span>00</div></div><div class="t" style="left:1261px;top:335.5px;width:129px;color:#3a3a3a">22<span class="sl">/</span>05<span class="sl">/</span>2024</div><div class="t" style="left:1395px;top:335.5px;width:115px;color:#3a3a3a">1200009</div><div class="t" style="left:1515px;top:335.5px;width:142px;color:#3a3a3a">100000028</div><div class="ic" style="left:862px;top:359.0px;height:5.5px"></div><div class="c" style="left:884px;top:359.0px;width:230px;height:5.5px;background:#e3e3e3"></div><div class="c" style="left:1114px;top:359.0px;width:143px;height:5.5px;background:#e3e3e3"></div><div class="c" style="left:1257px;top:359.0px;width:134px;height:5.5px;background:#e3e3e3"></div><div class="c" style="left:1391px;top:359.0px;width:120px;height:5.5px;background:#fff"></div><div class="c" style="left:1511px;top:359.0px;width:147px;height:5.5px;background:#e3e3e3"></div><div class="hs" style="left:883px;top:100px"></div><div class="ht" style="left:888px;top:100px;width:225px">Total HT</div><div class="hs" style="left:1113px;top:100px"></div><div class="ht" style="left:1118px;top:100px;width:138px">Nb cols équivalents</div><div class="hs" style="left:1256px;top:100px"></div><div class="ht" style="left:1261px;top:100px;width:129px">Date exp. prév.</div><div class="hs" style="left:1390px;top:100px"></div><div class="ht" style="left:1395px;top:100px;width:115px">N° Commande</div><div class="hs" style="left:1510px;top:100px"></div><div class="ht" style="left:1515px;top:100px;width:142px">Code tiers</div><div class="vsb" style="left:1658px;top:100px;width:25px;height:264.5px"></div><div class="vth" style="left:1660.5px;top:126px;width:20px;height:21.5px"></div><div class="au" style="left:1665px;top:108px"></div><div class="ad" style="left:1664px;top:345.5px"></div><div class="hsb" style="left:862px;top:364.5px;width:822px"></div><div class="hth" style="left:888px;top:367.0px;width:660px"></div><div class="al" style="left:869.5px;top:370.0px"></div><div class="ar" style="left:1641px;top:370.0px"></div><div class="pn" style="left:1701px;top:77px;width:825px;height:315px"></div><div class="ph" style="left:1702px;top:77px;width:822px"></div><div class="pt" style="left:1711px;top:77px">Mes commandes bloquées</div><div class="wa" style="left:1702px;top:100px;width:822px;height:264.5px"></div><div class="ch" style="left:1702px;top:100px;width:821px"></div><div class="ic" style="left:1702px;top:125.0px;height:22.5px"></div><div class="c" style="left:1724px;top:125.0px;width:65px;height:22.5px;background:#fdfde2"></div><div class="c" style="left:1789px;top:125.0px;width:144px;height:22.5px;background:#fff"></div><div class="c" style="left:1933px;top:125.0px;width:77px;height:22.5px;background:#fff"></div><div class="c" style="left:2010px;top:125.0px;width:116px;height:22.5px;background:#fff"></div><div class="c" style="left:2126px;top:125.0px;width:155px;height:22.5px;background:#fff"></div><div class="c" style="left:2281px;top:125.0px;width:120px;height:22.5px;background:#fff"></div><div class="c" style="left:2401px;top:125.0px;width:122px;height:22.5px;background:#fff"></div><div class="arr" style="left:1709.5px;top:127.0px"></div><div class="hs" style="left:1723px;top:100px"></div><div class="ht" style="left:1728px;top:100px;width:60px">Total HT</div><div class="hs" style="left:1788px;top:100px"></div><div class="ht" style="left:1793px;top:100px;width:139px">Nb cols équivalents</div><div class="hs" style="left:1932px;top:100px"></div><div class="ht" style="left:1937px;top:100px;width:72px">Date cmd.</div><div class="hs" style="left:2009px;top:100px"></div><div class="ht" style="left:2014px;top:100px;width:111px">Date exp. prév.</div><div class="hs" style="left:2125px;top:100px"></div><div class="ht" style="left:2130px;top:100px;width:150px">Blocage(s) commande</div><div class="hs" style="left:2280px;top:100px"></div><div class="ht" style="left:2285px;top:100px;width:115px">N° Commande</div><div class="hs" style="left:2400px;top:100px"></div><div class="ht" style="left:2405px;top:100px;width:117px">Code tiers</div><div class="hsb" style="left:1702px;top:364.5px;width:822px"></div><div class="hth" style="left:1728px;top:367.0px;width:645px"></div><div class="al" style="left:1709.5px;top:370.0px"></div><div class="ar" style="left:2504px;top:370.0px"></div><div class="pn" style="left:21px;top:407.5px;width:825px;height:315px"></div><div class="ph" style="left:22px;top:407.5px;width:822px"></div><div class="pt" style="left:31px;top:407.5px">Mes Commandes non réalisables [14]</div><div class="wa" style="left:22px;top:430.5px;width:822px;height:264.5px"></div><div class="ch" style="left:22px;top:430.5px;width:796px"></div><div class="ic" style="left:22px;top:455.5px;height:22.5px"></div><div class="c" style="left:44px;top:455.5px;width:65px;height:22.5px;background:#fdfde2"></div><div class="c" style="left:109px;top:455.5px;width:143px;height:22.5px;background:#e3e3e3"></div><div class="c" style="left:252px;top:455.5px;width:77px;height:22.5px;background:#e3e3e3"></div><div class="c" style="left:329px;top:455.5px;width:133px;height:22.5px;background:#e3e3e3"></div><div class="c" style="left:462px;top:455.5px;width:107px;height:22.5px;background:#e3e3e3"></div><div class="c" style="left:569px;top:455.5px;width:75px;height:22.5px;background:#e3e3e3"></div><div class="c" style="left:644px;top:455.5px;width:121px;height:22.5px;background:#fff"></div><div class="c" style="left:765px;top:455.5px;width:53px;height:22.5px;background:#e3e3e3"></div><div class="t" style="left:44px;top:455.5px;width:61px;color:#a04a34"><div class="tri">1 025<span class="cm">,</span>00</div></div><div class="t" style="left:113px;top:455.5px;width:138px;color:#3a3a3a">6</div><div class="t" style="left:256px;top:455.5px;width:72px;color:#3a3a3a">08<span class="sl">/</span>05<span class="sl">/</span>2024</div><div class="t" style="left:333px;top:455.5px;width:128px;color:#3a3a3a">10<span class="sl">/</span>05<span class="sl">/</span>2024</div><div class="t" style="left:648px;top:455.5px;width:116px;color:#3a3a3a">1200000</div><div class="t" style="left:769px;top:455.5px;width:48px;color:#3a3a3a">100000013</div><div class="arr" style="left:29.5px;top:457.5px"></div><div class="ic" style="left:22px;top:478.0px;height:23.5px"></div><div class="c" style="left:44px;top:478.0px;width:65px;height:23.5px;background:#e3e3e3"></div><div class="c" style="left:109px;top:478.0px;width:143px;height:23.5px;background:#e3e3e3"></div><div class="c" style="left:252px;top:478.0px;width:77px;height:23.5px;background:#e3e3e3"></div><div class="c" style="left:329px;top:478.0px;width:133px;height:23.5px;background:#e3e3e3"></div><div class="c" style="left:462px;top:478.0px;width:107px;height:23.5px;background:#e3e3e3"></div><div class="c" style="left:569px;top:478.0px;width:75px;height:23.5px;background:#e3e3e3"></div><div class="c" style="left:644px;top:478.0px;width:121px;height:23.5px;background:#fff"></div><div class="c" style="left:765px;top:478.0px;width:53px;height:23.5px;background:#e3e3e3"></div><div class="t" style="left:44px;top:478.0px;width:61px;color:#3a3a3a"><div class="tri">1 509<span class="cm">,</span>00</div></div><div class="t" style="left:113px;top:478.0px;width:138px;color:#3a3a3a">24</div><div class="t" style="left:256px;top:478.0px;width:72px;color:#3a3a3a">21<span class="sl">/</span>11<span class="sl">/</span>2024</div><div class="t" style="left:333px;top:478.0px;width:128px;color:#3a3a3a">20<span class="sl">/</span>03<span class="sl">/</span>2024</div><div class="t" style="left:573px;top:478.0px;width:70px;color:#3a3a3a">15<span class="sl">/</span>02<span class="sl">/</span>2024</div><div class="t" style="left:648px;top:478.0px;width:116px;color:#3a3a3a">12000002</div><div class="t" style="left:769px;top:478.0px;width:48px;color:#3a3a3a">100000013</div><div class="ic" style="left:22px;top:501.5px;height:23.5px"></div><div class="c" style="left:44px;top:501.5px;width:65px;height:23.5px;background:#e3e3e3"></div><div class="c" style="left:109px;top:501.5px;width:143px;height:23.5px;background:#e3e3e3"></div><div class="c" style="left:252px;top:501.5px;width:77px;height:23.5px;background:#e3e3e3"></div><div class="c" style="left:329px;top:501.5px;width:133px;height:23.5px;background:#e3e3e3"></div><div class="c" style="left:462px;top:501.5px;width:107px;height:23.5px;background:#e3e3e3"></div><div class="c" style="left:569px;top:501.5px;width:75px;height:23.5px;background:#e3e3e3"></div><div class="c" style="left:644px;top:501.5px;width:121px;height:23.5px;background:#fff"></div><div class="c" style="left:765px;top:501.5px;width:53px;height:23.5px;background:#e3e3e3"></div><div class="t" style="left:44px;top:501.5px;width:61px;color:#3a3a3a"><div class="tri">522<span class="cm">,</span>00</div></div><div class="t" style="left:113px;top:501.5px;width:138px;color:#3a3a3a">8</div><div class="t" style="left:256px;top:501.5px;width:72px;color:#3a3a3a">19<span class="sl">/</span>12<span class="sl">/</span>2024</div><div class="t" style="left:333px;top:501.5px;width:128px;color:#3a3a3a">20<span class="sl">/</span>03<span class="sl">/</span>2024</div><div class="t" style="left:648px;top:501.5px;width:116px;color:#3a3a3a">12000008</div><div class="t" style="left:769px;top:501.5px;width:48px;color:#3a3a3a">100000013</div><div class="ic" style="left:22px;top:525.0px;height:23.5px"></div><div class="c" style="left:44px;top:525.0px;width:65px;height:23.5px;background:#e3e3e3"></div><div class="c" style="left:109px;top:525.0px;width:143px;height:23.5px;background:#e3e3e3"></div><div class="c" style="left:252px;top:525.0px;width:77px;height:23.5px;background:#e3e3e3"></div><div class="c" style="left:329px;top:525.0px;width:133px;height:23.5px;background:#e3e3e3"></div><div class="c" style="left:462px;top:525.0px;width:107px;height:23.5px;background:#e3e3e3"></div><div class="c" style="left:569px;top:525.0px;width:75px;height:23.5px;background:#e3e3e3"></div><div class="c" style="left:644px;top:525.0px;width:121px;height:23.5px;background:#fff"></div><div class="c" style="left:765px;top:525.0px;width:53px;height:23.5px;background:#e3e3e3"></div><div class="t" style="left:44px;top:525.0px;width:61px;color:#3a3a3a"><div class="tri">7 000<span class="cm">,</span>00</div></div><div class="t" style="left:113px;top:525.0px;width:138px;color:#3a3a3a">1000</div><div class="t" style="left:256px;top:525.0px;width:72px;color:#3a3a3a">16<span class="sl">/</span>01<span class="sl">/</span>2024</div><div class="t" style="left:333px;top:525.0px;width:128px;color:#3a3a3a">25<span class="sl">/</span>10<span class="sl">/</span>2024</div><div class="t" style="left:648px;top:525.0px;width:116px;color:#3a3a3a">12000022</div><div class="t" style="left:769px;top:525.0px;width:48px;color:#3a3a3a">100000013</div><div class="ic" style="left:22px;top:548.5px;height:23.5px"></div><div class="c" style="left:44px;top:548.5px;width:65px;height:23.5px;background:#e3e3e3"></div><div class="c" style="left:109px;top:548.5px;width:143px;height:23.5px;background:#e3e3e3"></div><div class="c" style="left:252px;top:548.5px;width:77px;height:23.5px;background:#e3e3e3"></div><div class="c" style="left:329px;top:548.5px;width:133px;height:23.5px;background:#e3e3e3"></div><div class="c" style="left:462px;top:548.5px;width:107px;height:23.5px;background:#e3e3e3"></div><div class="c" style="left:569px;top:548.5px;width:75px;height:23.5px;background:#e3e3e3"></div><div class="c" style="left:644px;top:548.5px;width:121px;height:23.5px;background:#fff"></div><div class="c" style="left:765px;top:548.5px;width:53px;height:23.5px;background:#e3e3e3"></div><div class="t" style="left:44px;top:548.5px;width:61px;color:#3a3a3a"><div class="tri">1 208<span class="cm">,</span>00</div></div><div class="t" style="left:113px;top:548.5px;width:138px;color:#3a3a3a">72</div><div class="t" style="left:256px;top:548.5px;width:72px;color:#3a3a3a">05<span class="sl">/</span>03<span class="sl">/</span>2024</div><div class="t" style="left:333px;top:548.5px;width:128px;color:#3a3a3a">07<span class="sl">/</span>03<span class="sl">/</span>2024</div><div class="t" style="left:573px;top:548.5px;width:70px;color:#3a3a3a">15<span class="sl">/</span>06<span class="sl">/</span>2024</div><div class="t" style="left:648px;top:548.5px;width:116px;color:#3a3a3a">12000039</div><div class="t" style="left:769px;top:548.5px;width:48px;color:#3a3a3a">100000013</div><div class="ic" style="left:22px;top:572.0px;height:23.5px"></div><div class="c" style="left:44px;top:572.0px;width:65px;height:23.5px;background:#e3e3e3"></div><div class="c" style="left:109px;top:572.0px;width:143px;height:23.5px;background:#e3e3e3"></div><div class="c" style="left:252px;top:572.0px;width:77px;height:23.5px;background:#e3e3e3"></div><div class="c" style="left:329px;top:572.0px;width:133px;height:23.5px;background:#e3e3e3"></div><div class="c" style="left:462px;top:572.0px;width:107px;height:23.5px;background:#e3e3e3"></div><div class="c" style="left:569px;top:572.0px;width:75px;height:23.5px;background:#e3e3e3"></div><div class="c" style="left:644px;top:572.0px;width:121px;height:23.5px;background:#fff"></div><div class="c" style="left:765px;top:572.0px;width:53px;height:23.5px;background:#e3e3e3"></div><div class="t" style="left:44px;top:572.0px;width:61px;color:#3a3a3a"><div class="tri">483<span class="cm">,</span>33</div></div><div class="t" style="left:113px;top:572.0px;width:138px;color:#3a3a3a">1</div><div class="t" style="left:256px;top:572.0px;width:72px;color:#3a3a3a">05<span class="sl">/</span>03<span class="sl">/</span>2024</div><div class="t" style="left:333px;top:572.0px;width:128px;color:#3a3a3a">25<span class="sl">/</span>10<span class="sl">/</span>2024</div><div class="t" style="left:648px;top:572.0px;width:116px;color:#3a3a3a">12000040</div><div class="t" style="left:769px;top:572.0px;width:48px;color:#3a3a3a">100000013</div><div class="ic" style="left:22px;top:595.5px;height:23.5px"></div><div class="c" style="left:44px;top:595.5px;width:65px;height:23.5px;background:#e3e3e3"></div><div class="c" style="left:109px;top:595.5px;width:143px;height:23.5px;background:#e3e3e3"></div><div class="c" style="left:252px;top:595.5px;width:77px;height:23.5px;background:#e3e3e3"></div><div class="c" style="left:329px;top:595.5px;width:133px;height:23.5px;background:#e3e3e3"></div><div class="c" style="left:462px;top:595.5px;width:107px;height:23.5px;background:#e3e3e3"></div><div class="c" style="left:569px;top:595.5px;width:75px;height:23.5px;background:#e3e3e3"></div><div class="c" style="left:644px;top:595.5px;width:121px;height:23.5px;background:#fff"></div><div class="c" style="left:765px;top:595.5px;width:53px;height:23.5px;background:#e3e3e3"></div><div class="t" style="left:44px;top:595.5px;width:61px;color:#3a3a3a"><div class="tri">5 168<span class="cm">,</span>75</div></div><div class="t" style="left:113px;top:595.5px;width:138px;color:#3a3a3a">6511</div><div class="t" style="left:256px;top:595.5px;width:72px;color:#3a3a3a">01<span class="sl">/</span>04<span class="sl">/</span>2025</div><div class="t" style="left:333px;top:595.5px;width:128px;color:#3a3a3a">01<span class="sl">/</span>04<span class="sl">/</span>2025</div><div class="t" style="left:648px;top:595.5px;width:116px;color:#3a3a3a">12000262</div><div class="t" style="left:769px;top:595.5px;width:48px;color:#3a3a3a">600000002</div><div class="ic" style="left:22px;top:619.0px;height:23.5px"></div><div class="c" style="left:44px;top:619.0px;width:65px;height:23.5px;background:#e3e3e3"></div><div class="c" style="left:109px;top:619.0px;width:143px;height:23.5px;background:#e3e3e3"></div><div class="c" style="left:252px;top:619.0px;width:77px;height:23.5px;background:#e3e3e3"></div><div class="c" style="left:329px;top:619.0px;width:133px;height:23.5px;background:#e3e3e3"></div><div class="c" style="left:462px;top:619.0px;width:107px;height:23.5px;background:#e3e3e3"></div><div class="c" style="left:569px;top:619.0px;width:75px;height:23.5px;background:#e3e3e3"></div><div class="c" style="left:644px;top:619.0px;width:121px;height:23.5px;background:#fff"></div><div class="c" style="left:765px;top:619.0px;width:53px;height:23.5px;background:#e3e3e3"></div><div class="t" style="left:44px;top:619.0px;width:61px;color:#3a3a3a"><div class="tri">7 148<span class="cm">,</span>75</div></div><div class="t" style="left:113px;top:619.0px;width:138px;color:#3a3a3a">6535</div><div class="t" style="left:256px;top:619.0px;width:72px;color:#3a3a3a">01<span class="sl">/</span>04<span class="sl">/</span>2025</div><div class="t" style="left:333px;top:619.0px;width:128px;color:#3a3a3a">01<span class="sl">/</span>04<span class="sl">/</span>2025</div><div class="t" style="left:648px;top:619.0px;width:116px;color:#3a3a3a">12000263</div><div class="t" style="left:769px;top:619.0px;width:48px;color:#3a3a3a">600000002</div><div class="ic" style="left:22px;top:642.5px;height:23.5px"></div><div class="c" style="left:44px;top:642.5px;width:65px;height:23.5px;background:#e3e3e3"></div><div class="c" style="left:109px;top:642.5px;width:143px;height:23.5px;background:#e3e3e3"></div><div class="c" style="left:252px;top:642.5px;width:77px;height:23.5px;background:#e3e3e3"></div><div class="c" style="left:329px;top:642.5px;width:133px;height:23.5px;background:#e3e3e3"></div><div class="c" style="left:462px;top:642.5px;width:107px;height:23.5px;background:#e3e3e3"></div><div class="c" style="left:569px;top:642.5px;width:75px;height:23.5px;background:#e3e3e3"></div><div class="c" style="left:644px;top:642.5px;width:121px;height:23.5px;background:#fff"></div><div class="c" style="left:765px;top:642.5px;width:53px;height:23.5px;background:#e3e3e3"></div><div class="t" style="left:44px;top:642.5px;width:61px;color:#3a3a3a"><div class="tri">7 148<span class="cm">,</span>75</div></div><div class="t" style="left:113px;top:642.5px;width:138px;color:#3a3a3a">6535</div><div class="t" style="left:256px;top:642.5px;width:72px;color:#3a3a3a">01<span class="sl">/</span>04<span class="sl">/</span>2025</div><div class="t" style="left:333px;top:642.5px;width:128px;color:#3a3a3a">01<span class="sl">/</span>04<span class="sl">/</span>2025</div><div class="t" style="left:648px;top:642.5px;width:116px;color:#3a3a3a">12000264</div><div class="t" style="left:769px;top:642.5px;width:48px;color:#3a3a3a">600000002</div><div class="ic" style="left:22px;top:666.0px;height:23.5px"></div><div class="c" style="left:44px;top:666.0px;width:65px;height:23.5px;background:#e3e3e3"></div><div class="c" style="left:109px;top:666.0px;width:143px;height:23.5px;background:#e3e3e3"></div><div class="c" style="left:252px;top:666.0px;width:77px;height:23.5px;background:#e3e3e3"></div><div class="c" style="left:329px;top:666.0px;width:133px;height:23.5px;background:#e3e3e3"></div><div class="c" style="left:462px;top:666.0px;width:107px;height:23.5px;background:#e3e3e3"></div><div class="c" style="left:569px;top:666.0px;width:75px;height:23.5px;background:#e3e3e3"></div><div class="c" style="left:644px;top:666.0px;width:121px;height:23.5px;background:#fff"></div><div class="c" style="left:765px;top:666.0px;width:53px;height:23.5px;background:#e3e3e3"></div><div class="t" style="left:44px;top:666.0px;width:61px;color:#3a3a3a"><div class="tri">5 818<span class="cm">,</span>75</div></div><div class="t" style="left:113px;top:666.0px;width:138px;color:#3a3a3a">6535</div><div class="t" style="left:256px;top:666.0px;width:72px;color:#3a3a3a">01<span class="sl">/</span>04<span class="sl">/</span>2025</div><div class="t" style="left:333px;top:666.0px;width:128px;color:#3a3a3a">01<span class="sl">/</span>04<span class="sl">/</span>2025</div><div class="t" style="left:648px;top:666.0px;width:116px;color:#3a3a3a">12000265</div><div class="t" style="left:769px;top:666.0px;width:48px;color:#3a3a3a">600000002</div><div class="ic" style="left:22px;top:689.5px;height:5.5px"></div><div class="c" style="left:44px;top:689.5px;width:65px;height:5.5px;background:#e3e3e3"></div><div class="c" style="left:109px;top:689.5px;width:143px;height:5.5px;background:#e3e3e3"></div><div class="c" style="left:252px;top:689.5px;width:77px;height:5.5px;background:#e3e3e3"></div><div class="c" style="left:329px;top:689.5px;width:133px;height:5.5px;background:#e3e3e3"></div><div class="c" style="left:462px;top:689.5px;width:107px;height:5.5px;background:#e3e3e3"></div><div class="c" style="left:569px;top:689.5px;width:75px;height:5.5px;background:#e3e3e3"></div><div class="c" style="left:644px;top:689.5px;width:121px;height:5.5px;background:#fff"></div><div class="c" style="left:765px;top:689.5px;width:53px;height:5.5px;background:#e3e3e3"></div><div class="hs" style="left:43px;top:430.5px"></div><div class="ht" style="left:48px;top:430.5px;width:60px">Total HT</div><div class="hs" style="left:108px;top:430.5px"></div><div class="ht" style="left:113px;top:430.5px;width:138px">Nb cols équivalents</div><div class="hs" style="left:251px;top:430.5px"></div><div class="ht" style="left:256px;top:430.5px;width:72px">Date cmd.</div><div class="hs" style="left:328px;top:430.5px"></div><div class="ht" style="left:333px;top:430.5px;width:128px">Date exp. prév.</div><div class="hs" style="left:461px;top:430.5px"></div><div class="ht" style="left:466px;top:430.5px;width:102px">Date fin option</div><div class="hs" style="left:568px;top:430.5px"></div><div class="ht" style="left:573px;top:430.5px;width:70px">Date éch.</div><div class="hs" style="left:643px;top:430.5px"></div><div class="ht" style="left:648px;top:430.5px;width:116px">N° Commande</div><div class="hs" style="left:764px;top:430.5px"></div><div class="ht" style="left:769px;top:430.5px;width:48px">Code tiers</div><div class="vsb" style="left:818px;top:430.5px;width:25px;height:264.5px"></div><div class="vth" style="left:820.5px;top:456px;width:20px;height:139px"></div><div class="au" style="left:825px;top:438.5px"></div><div class="ad" style="left:824px;top:676.0px"></div><div class="hsb" style="left:22px;top:695.0px;width:822px"></div><div class="hth" style="left:48px;top:697.5px;width:596px"></div><div class="al" style="left:29.5px;top:700.5px"></div><div class="ar" style="left:801px;top:700.5px"></div><div class="pn" style="left:861px;top:407.5px;width:825px;height:315px"></div><div class="ph" style="left:862px;top:407.5px;width:822px"></div><div class="pt" style="left:871px;top:407.5px">Mes réservations avec date d’options dépassées [2]</div><div class="wa" style="left:862px;top:430.5px;width:822px;height:264.5px"></div><div class="ch" style="left:862px;top:430.5px;width:821px"></div><div class="ic" style="left:862px;top:455.5px;height:22.5px"></div><div class="c" style="left:884px;top:455.5px;width:65px;height:22.5px;background:#fdfde2"></div><div class="c" style="left:949px;top:455.5px;width:144px;height:22.5px;background:#e3e3e3"></div><div class="c" style="left:1093px;top:455.5px;width:132px;height:22.5px;background:#e3e3e3"></div><div class="c" style="left:1225px;top:455.5px;width:132px;height:22.5px;background:#e3e3e3"></div><div class="c" style="left:1357px;top:455.5px;width:133px;height:22.5px;background:#e3e3e3"></div><div class="c" style="left:1490px;top:455.5px;width:121px;height:22.5px;background:#fff"></div><div class="c" style="left:1611px;top:455.5px;width:72px;height:22.5px;background:#e3e3e3"></div><div class="t" style="left:884px;top:455.5px;width:61px;color:#a04a34"><div class="tri">0<span class="cm">,</span>00</div></div><div class="t" style="left:1097px;top:455.5px;width:127px;color:#3a3a3a">09<span class="sl">/</span>09<span class="sl">/</span>2024</div><div class="t" style="left:1229px;top:455.5px;width:127px;color:#3a3a3a">09<span class="sl">/</span>09<span class="sl">/</span>2024</div><div class="t" style="left:1494px;top:455.5px;width:116px;color:#3a3a3a">12000162</div><div class="t" style="left:1615px;top:455.5px;width:67px;color:#3a3a3a">100000023</div><div class="arr" style="left:869.5px;top:457.5px"></div><div class="ic" style="left:862px;top:478.0px;height:23.5px"></div><div class="c" style="left:884px;top:478.0px;width:65px;height:23.5px;background:#e3e3e3"></div><div class="c" style="left:949px;top:478.0px;width:144px;height:23.5px;background:#e3e3e3"></div><div class="c" style="left:1093px;top:478.0px;width:132px;height:23.5px;background:#e3e3e3"></div><div class="c" style="left:1225px;top:478.0px;width:132px;height:23.5px;background:#e3e3e3"></div><div class="c" style="left:1357px;top:478.0px;width:133px;height:23.5px;background:#e3e3e3"></div><div class="c" style="left:1490px;top:478.0px;width:121px;height:23.5px;background:#fff"></div><div class="c" style="left:1611px;top:478.0px;width:72px;height:23.5px;background:#e3e3e3"></div><div class="t" style="left:884px;top:478.0px;width:61px;color:#3a3a3a"><div class="tri">0<span class="cm">,</span>00</div></div><div class="t" style="left:953px;top:478.0px;width:139px;color:#3a3a3a">0</div><div class="t" style="left:1097px;top:478.0px;width:127px;color:#3a3a3a">24<span class="sl">/</span>09<span class="sl">/</span>2024</div><div class="t" style="left:1229px;top:478.0px;width:127px;color:#3a3a3a">24<span class="sl">/</span>09<span class="sl">/</span>2024</div><div class="t" style="left:1494px;top:478.0px;width:116px;color:#3a3a3a">12000178</div><div class="t" style="left:1615px;top:478.0px;width:67px;color:#3a3a3a">100000013</div><div class="ic" style="left:862px;top:501.5px;height:23.5px"></div><div class="c" style="left:884px;top:501.5px;width:65px;height:23.5px;background:#fff"></div><div class="c" style="left:949px;top:501.5px;width:144px;height:23.5px;background:#fff"></div><div class="c" style="left:1093px;top:501.5px;width:132px;height:23.5px;background:#fff"></div><div class="c" style="left:1225px;top:501.5px;width:132px;height:23.5px;background:#fff"></div><div class="c" style="left:1357px;top:501.5px;width:133px;height:23.5px;background:#fff"></div><div class="c" style="left:1490px;top:501.5px;width:121px;height:23.5px;background:#fff"></div><div class="c" style="left:1611px;top:501.5px;width:72px;height:23.5px;background:#fff"></div><div class="hs" style="left:883px;top:430.5px"></div><div class="ht" style="left:888px;top:430.5px;width:60px">Total HT</div><div class="hs" style="left:948px;top:430.5px"></div><div class="ht" style="left:953px;top:430.5px;width:139px">Nb cols équivalents</div><div class="hs" style="left:1092px;top:430.5px"></div><div class="ht" style="left:1097px;top:430.5px;width:127px">Date cmd.</div><div class="hs" style="left:1224px;top:430.5px"></div><div class="ht" style="left:1229px;top:430.5px;width:127px">Date exp. prév.</div><div class="hs" style="left:1356px;top:430.5px"></div><div class="ht" style="left:1361px;top:430.5px;width:128px">Date éch.</div><div class="hs" style="left:1489px;top:430.5px"></div><div class="ht" style="left:1494px;top:430.5px;width:116px">N° Commande</div><div class="hs" style="left:1610px;top:430.5px"></div><div class="ht" style="left:1615px;top:430.5px;width:67px">Code tiers</div><div class="hsb" style="left:862px;top:695.0px;width:822px"></div><div class="hth" style="left:888px;top:697.5px;width:610px"></div><div class="al" style="left:869.5px;top:700.5px"></div><div class="ar" style="left:1664px;top:700.5px"></div><div class="pn" style="left:1701px;top:407.5px;width:825px;height:315px"></div><div class="ph" style="left:1702px;top:407.5px;width:822px"></div><div class="pt" style="left:1711px;top:407.5px">Mes Commandes en attente de facturation  [5]</div><div class="wa" style="left:1702px;top:430.5px;width:822px;height:289.0px"></div><div class="ch" style="left:1702px;top:430.5px;width:777px"></div><div class="ic" style="left:1702px;top:455.5px;height:22.5px"></div><div class="c" style="left:1724px;top:455.5px;width:85px;height:22.5px;background:#fdfde2"></div><div class="c" style="left:1809px;top:455.5px;width:66px;height:22.5px;background:#e3e3e3"></div><div class="c" style="left:1875px;top:455.5px;width:143px;height:22.5px;background:#e3e3e3"></div><div class="c" style="left:2018px;top:455.5px;width:132px;height:22.5px;background:#e3e3e3"></div><div class="c" style="left:2150px;top:455.5px;width:133px;height:22.5px;background:#e3e3e3"></div><div class="c" style="left:2283px;top:455.5px;width:75px;height:22.5px;background:#e3e3e3"></div><div class="c" style="left:2358px;top:455.5px;width:121px;height:22.5px;background:#fff"></div><div class="t" style="left:1728px;top:455.5px;width:80px;color:#a04a34">100000017</div><div class="t" style="left:1809px;top:455.5px;width:62px;color:#3a3a3a"><div class="tri">466<span class="cm">,</span>00</div></div><div class="t" style="left:1879px;top:455.5px;width:138px;color:#3a3a3a">25</div><div class="t" style="left:2022px;top:455.5px;width:127px;color:#3a3a3a">23<span class="sl">/</span>03<span class="sl">/</span>2024</div><div class="t" style="left:2362px;top:455.5px;width:116px;color:#3a3a3a">12000054</div><div class="arr" style="left:1709.5px;top:457.5px"></div><div class="ic" style="left:1702px;top:478.0px;height:23.5px"></div><div class="c" style="left:1724px;top:478.0px;width:85px;height:23.5px;background:#e3e3e3"></div><div class="c" style="left:1809px;top:478.0px;width:66px;height:23.5px;background:#e3e3e3"></div><div class="c" style="left:1875px;top:478.0px;width:143px;height:23.5px;background:#e3e3e3"></div><div class="c" style="left:2018px;top:478.0px;width:132px;height:23.5px;background:#e3e3e3"></div><div class="c" style="left:2150px;top:478.0px;width:133px;height:23.5px;background:#e3e3e3"></div><div class="c" style="left:2283px;top:478.0px;width:75px;height:23.5px;background:#e3e3e3"></div><div class="c" style="left:2358px;top:478.0px;width:121px;height:23.5px;background:#fff"></div><div class="t" style="left:1728px;top:478.0px;width:80px;color:#3a3a3a">100000017</div><div class="t" style="left:1809px;top:478.0px;width:62px;color:#3a3a3a"><div class="tri">7 734<span class="cm">,</span>00</div></div><div class="t" style="left:1879px;top:478.0px;width:138px;color:#3a3a3a">300</div><div class="t" style="left:2022px;top:478.0px;width:127px;color:#3a3a3a">29<span class="sl">/</span>03<span class="sl">/</span>2024</div><div class="t" style="left:2362px;top:478.0px;width:116px;color:#3a3a3a">12000060</div><div class="ic" style="left:1702px;top:501.5px;height:23.5px"></div><div class="c" style="left:1724px;top:501.5px;width:85px;height:23.5px;background:#e3e3e3"></div><div class="c" style="left:1809px;top:501.5px;width:66px;height:23.5px;background:#e3e3e3"></div><div class="c" style="left:1875px;top:501.5px;width:143px;height:23.5px;background:#e3e3e3"></div><div class="c" style="left:2018px;top:501.5px;width:132px;height:23.5px;background:#e3e3e3"></div><div class="c" style="left:2150px;top:501.5px;width:133px;height:23.5px;background:#e3e3e3"></div><div class="c" style="left:2283px;top:501.5px;width:75px;height:23.5px;background:#e3e3e3"></div><div class="c" style="left:2358px;top:501.5px;width:121px;height:23.5px;background:#fff"></div><div class="t" style="left:1728px;top:501.5px;width:80px;color:#3a3a3a">100000032</div><div class="t" style="left:1809px;top:501.5px;width:62px;color:#3a3a3a"><div class="tri">300<span class="cm">,</span>00</div></div><div class="t" style="left:1879px;top:501.5px;width:138px;color:#3a3a3a">30</div><div class="t" style="left:2022px;top:501.5px;width:127px;color:#3a3a3a">30<span class="sl">/</span>09<span class="sl">/</span>2024</div><div class="t" style="left:2362px;top:501.5px;width:116px;color:#3a3a3a">12000180</div><div class="ic" style="left:1702px;top:525.0px;height:23.5px"></div><div class="c" style="left:1724px;top:525.0px;width:85px;height:23.5px;background:#e3e3e3"></div><div class="c" style="left:1809px;top:525.0px;width:66px;height:23.5px;background:#e3e3e3"></div><div class="c" style="left:1875px;top:525.0px;width:143px;height:23.5px;background:#e3e3e3"></div><div class="c" style="left:2018px;top:525.0px;width:132px;height:23.5px;background:#e3e3e3"></div><div class="c" style="left:2150px;top:525.0px;width:133px;height:23.5px;background:#e3e3e3"></div><div class="c" style="left:2283px;top:525.0px;width:75px;height:23.5px;background:#e3e3e3"></div><div class="c" style="left:2358px;top:525.0px;width:121px;height:23.5px;background:#fff"></div><div class="t" style="left:1728px;top:525.0px;width:80px;color:#3a3a3a">100000015</div><div class="t" style="left:1809px;top:525.0px;width:62px;color:#3a3a3a"><div class="tri">2 825<span class="cm">,</span>00</div></div><div class="t" style="left:1879px;top:525.0px;width:138px;color:#3a3a3a">12666</div><div class="t" style="left:2022px;top:525.0px;width:127px;color:#3a3a3a">04<span class="sl">/</span>12<span class="sl">/</span>2024</div><div class="t" style="left:2362px;top:525.0px;width:116px;color:#3a3a3a">12000238</div><div class="ic" style="left:1702px;top:548.5px;height:23.5px"></div><div class="c" style="left:1724px;top:548.5px;width:85px;height:23.5px;background:#e3e3e3"></div><div class="c" style="left:1809px;top:548.5px;width:66px;height:23.5px;background:#e3e3e3"></div><div class="c" style="left:1875px;top:548.5px;width:143px;height:23.5px;background:#e3e3e3"></div><div class="c" style="left:2018px;top:548.5px;width:132px;height:23.5px;background:#e3e3e3"></div><div class="c" style="left:2150px;top:548.5px;width:133px;height:23.5px;background:#e3e3e3"></div><div class="c" style="left:2283px;top:548.5px;width:75px;height:23.5px;background:#e3e3e3"></div><div class="c" style="left:2358px;top:548.5px;width:121px;height:23.5px;background:#fff"></div><div class="t" style="left:1728px;top:548.5px;width:80px;color:#3a3a3a">100000015</div><div class="t" style="left:1809px;top:548.5px;width:62px;color:#3a3a3a"><div class="tri">0 250<span class="cm">,</span>00</div></div><div class="t" style="left:1879px;top:548.5px;width:138px;color:#3a3a3a">20000</div><div class="t" style="left:2022px;top:548.5px;width:127px;color:#3a3a3a">04<span class="sl">/</span>12<span class="sl">/</span>2024</div><div class="t" style="left:2362px;top:548.5px;width:116px;color:#3a3a3a">12000239</div><div class="ic" style="left:1702px;top:572.0px;height:23.5px"></div><div class="c" style="left:1724px;top:572.0px;width:85px;height:23.5px;background:#fff"></div><div class="c" style="left:1809px;top:572.0px;width:66px;height:23.5px;background:#fff"></div><div class="c" style="left:1875px;top:572.0px;width:143px;height:23.5px;background:#fff"></div><div class="c" style="left:2018px;top:572.0px;width:132px;height:23.5px;background:#fff"></div><div class="c" style="left:2150px;top:572.0px;width:133px;height:23.5px;background:#fff"></div><div class="c" style="left:2283px;top:572.0px;width:75px;height:23.5px;background:#fff"></div><div class="c" style="left:2358px;top:572.0px;width:121px;height:23.5px;background:#fff"></div><div class="hs" style="left:1723px;top:430.5px"></div><div class="ht" style="left:1728px;top:430.5px;width:80px">Code tiers</div><div class="hs" style="left:1808px;top:430.5px"></div><div class="ht" style="left:1813px;top:430.5px;width:61px">Total HT</div><div class="hs" style="left:1874px;top:430.5px"></div><div class="ht" style="left:1879px;top:430.5px;width:138px">Nb cols équivalents</div><div class="hs" style="left:2017px;top:430.5px"></div><div class="ht" style="left:2022px;top:430.5px;width:127px">Date cmd.</div><div class="hs" style="left:2149px;top:430.5px"></div><div class="ht" style="left:2154px;top:430.5px;width:128px">Date fin option</div><div class="hs" style="left:2282px;top:430.5px"></div><div class="ht" style="left:2287px;top:430.5px;width:70px">Date éch.</div><div class="hs" style="left:2357px;top:430.5px"></div><div class="ht" style="left:2362px;top:430.5px;width:116px">N° Commande</div><div class="pn" style="left:21px;top:738px;width:825px;height:315px"></div><div class="ph" style="left:22px;top:738px;width:822px"></div><div class="pt" style="left:31px;top:738px">Mes Commandes sans contact de facturation [43]</div><div class="wa" style="left:22px;top:761px;width:822px;height:264.5px"></div><div class="ch" style="left:22px;top:761px;width:796px"></div><div class="ic" style="left:22px;top:786.0px;height:22.5px"></div><div class="c" style="left:44px;top:786.0px;width:65px;height:22.5px;background:#fdfde2"></div><div class="c" style="left:109px;top:786.0px;width:143px;height:22.5px;background:#e3e3e3"></div><div class="c" style="left:252px;top:786.0px;width:77px;height:22.5px;background:#e3e3e3"></div><div class="c" style="left:329px;top:786.0px;width:133px;height:22.5px;background:#e3e3e3"></div><div class="c" style="left:462px;top:786.0px;width:74px;height:22.5px;background:#e3e3e3"></div><div class="c" style="left:536px;top:786.0px;width:121px;height:22.5px;background:#fff"></div><div class="c" style="left:657px;top:786.0px;width:161px;height:22.5px;background:#e3e3e3"></div><div class="t" style="left:44px;top:786.0px;width:61px;color:#a04a34"><div class="tri">1 400<span class="cm">,</span>00</div></div><div class="t" style="left:113px;top:786.0px;width:138px;color:#3a3a3a">600</div><div class="t" style="left:256px;top:786.0px;width:72px;color:#3a3a3a">12<span class="sl">/</span>02<span class="sl">/</span>2024</div><div class="t" style="left:540px;top:786.0px;width:116px;color:#3a3a3a">12000027</div><div class="t" style="left:661px;top:786.0px;width:156px;color:#3a3a3a">600000002</div><div class="arr" style="left:29.5px;top:788.0px"></div><div class="ic" style="left:22px;top:808.5px;height:23.5px"></div><div class="c" style="left:44px;top:808.5px;width:65px;height:23.5px;background:#e3e3e3"></div><div class="c" style="left:109px;top:808.5px;width:143px;height:23.5px;background:#e3e3e3"></div><div class="c" style="left:252px;top:808.5px;width:77px;height:23.5px;background:#e3e3e3"></div><div class="c" style="left:329px;top:808.5px;width:133px;height:23.5px;background:#e3e3e3"></div><div class="c" style="left:462px;top:808.5px;width:74px;height:23.5px;background:#e3e3e3"></div><div class="c" style="left:536px;top:808.5px;width:121px;height:23.5px;background:#fff"></div><div class="c" style="left:657px;top:808.5px;width:161px;height:23.5px;background:#e3e3e3"></div><div class="t" style="left:44px;top:808.5px;width:61px;color:#3a3a3a"><div class="tri">625<span class="cm">,</span>00</div></div><div class="t" style="left:113px;top:808.5px;width:138px;color:#3a3a3a">6666</div><div class="t" style="left:256px;top:808.5px;width:72px;color:#3a3a3a">14<span class="sl">/</span>02<span class="sl">/</span>2024</div><div class="t" style="left:466px;top:808.5px;width:69px;color:#3a3a3a">15<span class="sl">/</span>12<span class="sl">/</span>2024</div><div class="t" style="left:540px;top:808.5px;width:116px;color:#3a3a3a">12000030</div><div class="t" style="left:661px;top:808.5px;width:156px;color:#3a3a3a">600000002</div><div class="ic" style="left:22px;top:832.0px;height:23.5px"></div><div class="c" style="left:44px;top:832.0px;width:65px;height:23.5px;background:#e3e3e3"></div><div class="c" style="left:109px;top:832.0px;width:143px;height:23.5px;background:#e3e3e3"></div><div class="c" style="left:252px;top:832.0px;width:77px;height:23.5px;background:#e3e3e3"></div><div class="c" style="left:329px;top:832.0px;width:133px;height:23.5px;background:#e3e3e3"></div><div class="c" style="left:462px;top:832.0px;width:74px;height:23.5px;background:#e3e3e3"></div><div class="c" style="left:536px;top:832.0px;width:121px;height:23.5px;background:#fff"></div><div class="c" style="left:657px;top:832.0px;width:161px;height:23.5px;background:#e3e3e3"></div><div class="t" style="left:44px;top:832.0px;width:61px;color:#3a3a3a"><div class="tri">1 002<span class="cm">,</span>08</div></div><div class="t" style="left:113px;top:832.0px;width:138px;color:#3a3a3a">2</div><div class="t" style="left:256px;top:832.0px;width:72px;color:#3a3a3a">27<span class="sl">/</span>02<span class="sl">/</span>2024</div><div class="t" style="left:540px;top:832.0px;width:116px;color:#3a3a3a">12000035</div><div class="t" style="left:661px;top:832.0px;width:156px;color:#3a3a3a">600000002</div><div class="ic" style="left:22px;top:855.5px;height:23.5px"></div><div class="c" style="left:44px;top:855.5px;width:65px;height:23.5px;background:#e3e3e3"></div><div class="c" style="left:109px;top:855.5px;width:143px;height:23.5px;background:#e3e3e3"></div><div class="c" style="left:252px;top:855.5px;width:77px;height:23.5px;background:#e3e3e3"></div><div class="c" style="left:329px;top:855.5px;width:133px;height:23.5px;background:#e3e3e3"></div><div class="c" style="left:462px;top:855.5px;width:74px;height:23.5px;background:#e3e3e3"></div><div class="c" style="left:536px;top:855.5px;width:121px;height:23.5px;background:#fff"></div><div class="c" style="left:657px;top:855.5px;width:161px;height:23.5px;background:#e3e3e3"></div><div class="t" style="left:44px;top:855.5px;width:61px;color:#3a3a3a"><div class="tri">98<span class="cm">,</span>40</div></div><div class="t" style="left:113px;top:855.5px;width:138px;color:#3a3a3a">1</div><div class="t" style="left:256px;top:855.5px;width:72px;color:#3a3a3a">05<span class="sl">/</span>03<span class="sl">/</span>2024</div><div class="t" style="left:540px;top:855.5px;width:116px;color:#3a3a3a">12000036</div><div class="t" style="left:661px;top:855.5px;width:156px;color:#3a3a3a">600000002</div><div class="ic" style="left:22px;top:879.0px;height:23.5px"></div><div class="c" style="left:44px;top:879.0px;width:65px;height:23.5px;background:#e3e3e3"></div><div class="c" style="left:109px;top:879.0px;width:143px;height:23.5px;background:#e3e3e3"></div><div class="c" style="left:252px;top:879.0px;width:77px;height:23.5px;background:#e3e3e3"></div><div class="c" style="left:329px;top:879.0px;width:133px;height:23.5px;background:#e3e3e3"></div><div class="c" style="left:462px;top:879.0px;width:74px;height:23.5px;background:#e3e3e3"></div><div class="c" style="left:536px;top:879.0px;width:121px;height:23.5px;background:#fff"></div><div class="c" style="left:657px;top:879.0px;width:161px;height:23.5px;background:#e3e3e3"></div><div class="t" style="left:44px;top:879.0px;width:61px;color:#3a3a3a"><div class="tri">0<span class="cm">,</span>00</div></div><div class="t" style="left:113px;top:879.0px;width:138px;color:#3a3a3a">0</div><div class="t" style="left:256px;top:879.0px;width:72px;color:#3a3a3a">04<span class="sl">/</span>03<span class="sl">/</span>2024</div><div class="t" style="left:540px;top:879.0px;width:116px;color:#3a3a3a">12000037</div><div class="t" style="left:661px;top:879.0px;width:156px;color:#3a3a3a">600000002</div><div class="ic" style="left:22px;top:902.5px;height:23.5px"></div><div class="c" style="left:44px;top:902.5px;width:65px;height:23.5px;background:#e3e3e3"></div><div class="c" style="left:109px;top:902.5px;width:143px;height:23.5px;background:#e3e3e3"></div><div class="c" style="left:252px;top:902.5px;width:77px;height:23.5px;background:#e3e3e3"></div><div class="c" style="left:329px;top:902.5px;width:133px;height:23.5px;background:#e3e3e3"></div><div class="c" style="left:462px;top:902.5px;width:74px;height:23.5px;background:#e3e3e3"></div><div class="c" style="left:536px;top:902.5px;width:121px;height:23.5px;background:#fff"></div><div class="c" style="left:657px;top:902.5px;width:161px;height:23.5px;background:#e3e3e3"></div><div class="t" style="left:44px;top:902.5px;width:61px;color:#3a3a3a"><div class="tri">5 585<span class="cm">,</span>42</div></div><div class="t" style="left:113px;top:902.5px;width:138px;color:#3a3a3a">7</div><div class="t" style="left:256px;top:902.5px;width:72px;color:#3a3a3a">05<span class="sl">/</span>03<span class="sl">/</span>2024</div><div class="t" style="left:540px;top:902.5px;width:116px;color:#3a3a3a">12000038</div><div class="t" style="left:661px;top:902.5px;width:156px;color:#3a3a3a">600000002</div><div class="ic" style="left:22px;top:926.0px;height:23.5px"></div><div class="c" style="left:44px;top:926.0px;width:65px;height:23.5px;background:#e3e3e3"></div><div class="c" style="left:109px;top:926.0px;width:143px;height:23.5px;background:#e3e3e3"></div><div class="c" style="left:252px;top:926.0px;width:77px;height:23.5px;background:#e3e3e3"></div><div class="c" style="left:329px;top:926.0px;width:133px;height:23.5px;background:#e3e3e3"></div><div class="c" style="left:462px;top:926.0px;width:74px;height:23.5px;background:#e3e3e3"></div><div class="c" style="left:536px;top:926.0px;width:121px;height:23.5px;background:#fff"></div><div class="c" style="left:657px;top:926.0px;width:161px;height:23.5px;background:#e3e3e3"></div><div class="t" style="left:44px;top:926.0px;width:61px;color:#3a3a3a"><div class="tri">75<span class="cm">,</span>00</div></div><div class="t" style="left:113px;top:926.0px;width:138px;color:#3a3a3a">6</div><div class="t" style="left:256px;top:926.0px;width:72px;color:#3a3a3a">18<span class="sl">/</span>10<span class="sl">/</span>2024</div><div class="t" style="left:540px;top:926.0px;width:116px;color:#3a3a3a">12000188</div><div class="t" style="left:661px;top:926.0px;width:156px;color:#3a3a3a">600000002</div><div class="ic" style="left:22px;top:949.5px;height:23.5px"></div><div class="c" style="left:44px;top:949.5px;width:65px;height:23.5px;background:#e3e3e3"></div><div class="c" style="left:109px;top:949.5px;width:143px;height:23.5px;background:#e3e3e3"></div><div class="c" style="left:252px;top:949.5px;width:77px;height:23.5px;background:#e3e3e3"></div><div class="c" style="left:329px;top:949.5px;width:133px;height:23.5px;background:#e3e3e3"></div><div class="c" style="left:462px;top:949.5px;width:74px;height:23.5px;background:#e3e3e3"></div><div class="c" style="left:536px;top:949.5px;width:121px;height:23.5px;background:#fff"></div><div class="c" style="left:657px;top:949.5px;width:161px;height:23.5px;background:#e3e3e3"></div><div class="t" style="left:44px;top:949.5px;width:61px;color:#3a3a3a"><div class="tri">0<span class="cm">,</span>00</div></div><div class="t" style="left:113px;top:949.5px;width:138px;color:#3a3a3a">6</div><div class="t" style="left:256px;top:949.5px;width:72px;color:#3a3a3a">22<span class="sl">/</span>10<span class="sl">/</span>2024</div><div class="t" style="left:540px;top:949.5px;width:116px;color:#3a3a3a">12000193</div><div class="t" style="left:661px;top:949.5px;width:156px;color:#3a3a3a">600000002</div><div class="ic" style="left:22px;top:973.0px;height:23.5px"></div><div class="c" style="left:44px;top:973.0px;width:65px;height:23.5px;background:#e3e3e3"></div><div class="c" style="left:109px;top:973.0px;width:143px;height:23.5px;background:#e3e3e3"></div><div class="c" style="left:252px;top:973.0px;width:77px;height:23.5px;background:#e3e3e3"></div><div class="c" style="left:329px;top:973.0px;width:133px;height:23.5px;background:#e3e3e3"></div><div class="c" style="left:462px;top:973.0px;width:74px;height:23.5px;background:#e3e3e3"></div><div class="c" style="left:536px;top:973.0px;width:121px;height:23.5px;background:#fff"></div><div class="c" style="left:657px;top:973.0px;width:161px;height:23.5px;background:#e3e3e3"></div><div class="t" style="left:44px;top:973.0px;width:61px;color:#3a3a3a"><div class="tri">0<span class="cm">,</span>00</div></div><div class="t" style="left:113px;top:973.0px;width:138px;color:#3a3a3a">6</div><div class="t" style="left:256px;top:973.0px;width:72px;color:#3a3a3a">22<span class="sl">/</span>10<span class="sl">/</span>2024</div><div class="t" style="left:540px;top:973.0px;width:116px;color:#3a3a3a">12000197</div><div class="t" style="left:661px;top:973.0px;width:156px;color:#3a3a3a">600000002</div><div class="ic" style="left:22px;top:996.5px;height:23.5px"></div><div class="c" style="left:44px;top:996.5px;width:65px;height:23.5px;background:#e3e3e3"></div><div class="c" style="left:109px;top:996.5px;width:143px;height:23.5px;background:#e3e3e3"></div><div class="c" style="left:252px;top:996.5px;width:77px;height:23.5px;background:#e3e3e3"></div><div class="c" style="left:329px;top:996.5px;width:133px;height:23.5px;background:#e3e3e3"></div><div class="c" style="left:462px;top:996.5px;width:74px;height:23.5px;background:#e3e3e3"></div><div class="c" style="left:536px;top:996.5px;width:121px;height:23.5px;background:#fff"></div><div class="c" style="left:657px;top:996.5px;width:161px;height:23.5px;background:#e3e3e3"></div><div class="t" style="left:44px;top:996.5px;width:61px;color:#3a3a3a"><div class="tri">0<span class="cm">,</span>00</div></div><div class="t" style="left:113px;top:996.5px;width:138px;color:#3a3a3a">6</div><div class="t" style="left:256px;top:996.5px;width:72px;color:#3a3a3a">22<span class="sl">/</span>10<span class="sl">/</span>2024</div><div class="t" style="left:540px;top:996.5px;width:116px;color:#3a3a3a">12000198</div><div class="t" style="left:661px;top:996.5px;width:156px;color:#3a3a3a">600000002</div><div class="ic" style="left:22px;top:1020.0px;height:5.5px"></div><div class="c" style="left:44px;top:1020.0px;width:65px;height:5.5px;background:#e3e3e3"></div><div class="c" style="left:109px;top:1020.0px;width:143px;height:5.5px;background:#e3e3e3"></div><div class="c" style="left:252px;top:1020.0px;width:77px;height:5.5px;background:#e3e3e3"></div><div class="c" style="left:329px;top:1020.0px;width:133px;height:5.5px;background:#e3e3e3"></div><div class="c" style="left:462px;top:1020.0px;width:74px;height:5.5px;background:#e3e3e3"></div><div class="c" style="left:536px;top:1020.0px;width:121px;height:5.5px;background:#fff"></div><div class="c" style="left:657px;top:1020.0px;width:161px;height:5.5px;background:#e3e3e3"></div><div class="hs" style="left:43px;top:761px"></div><div class="ht" style="left:48px;top:761px;width:60px">Total HT</div><div class="hs" style="left:108px;top:761px"></div><div class="ht" style="left:113px;top:761px;width:138px">Nb cols équivalents</div><div class="hs" style="left:251px;top:761px"></div><div class="ht" style="left:256px;top:761px;width:72px">Date cmd.</div><div class="hs" style="left:328px;top:761px"></div><div class="ht" style="left:333px;top:761px;width:128px">Date fin option</div><div class="hs" style="left:461px;top:761px"></div><div class="ht" style="left:466px;top:761px;width:69px">Date éch.</div><div class="hs" style="left:535px;top:761px"></div><div class="ht" style="left:540px;top:761px;width:116px">N° Commande</div><div class="hs" style="left:656px;top:761px"></div><div class="ht" style="left:661px;top:761px;width:156px">Code tiers</div><div class="vsb" style="left:818px;top:761px;width:25px;height:264.5px"></div><div class="vth" style="left:820.5px;top:786px;width:20px;height:48px"></div><div class="au" style="left:825px;top:769px"></div><div class="ad" style="left:824px;top:1006.5px"></div><div class="hsb" style="left:22px;top:1025.5px;width:822px"></div><div class="hth" style="left:48px;top:1028.0px;width:670px"></div><div class="al" style="left:29.5px;top:1031.0px"></div><div class="ar" style="left:801px;top:1031.0px"></div><div class="pn" style="left:861px;top:738px;width:825px;height:315px"></div><div class="ph" style="left:862px;top:738px;width:822px"></div><div class="pt" style="left:871px;top:738px">Mes commandes non payées [89]</div><div class="wa" style="left:862px;top:761px;width:822px;height:264.5px"></div><div class="ch" style="left:862px;top:761px;width:796px"></div><div class="ic" style="left:862px;top:786.0px;height:22.5px"></div><div class="c" style="left:884px;top:786.0px;width:65px;height:22.5px;background:#fdfde2"></div><div class="c" style="left:949px;top:786.0px;width:144px;height:22.5px;background:#e3e3e3"></div><div class="c" style="left:1093px;top:786.0px;width:132px;height:22.5px;background:#e3e3e3"></div><div class="c" style="left:1225px;top:786.0px;width:132px;height:22.5px;background:#e3e3e3"></div><div class="c" style="left:1357px;top:786.0px;width:133px;height:22.5px;background:#e3e3e3"></div><div class="c" style="left:1490px;top:786.0px;width:121px;height:22.5px;background:#fff"></div><div class="c" style="left:1611px;top:786.0px;width:47px;height:22.5px;background:#e3e3e3"></div><div class="t" style="left:884px;top:786.0px;width:61px;color:#a04a34"><div class="tri">522<span class="cm">,</span>00</div></div><div class="t" style="left:953px;top:786.0px;width:139px;color:#3a3a3a">8</div><div class="t" style="left:1097px;top:786.0px;width:127px;color:#3a3a3a">04<span class="sl">/</span>12<span class="sl">/</span>2023</div><div class="t" style="left:1494px;top:786.0px;width:116px;color:#3a3a3a">12000006</div><div class="t" style="left:1615px;top:786.0px;width:42px;color:#3a3a3a">100000013</div><div class="arr" style="left:869.5px;top:788.0px"></div><div class="ic" style="left:862px;top:808.5px;height:23.5px"></div><div class="c" style="left:884px;top:808.5px;width:65px;height:23.5px;background:#e3e3e3"></div><div class="c" style="left:949px;top:808.5px;width:144px;height:23.5px;background:#e3e3e3"></div><div class="c" style="left:1093px;top:808.5px;width:132px;height:23.5px;background:#e3e3e3"></div><div class="c" style="left:1225px;top:808.5px;width:132px;height:23.5px;background:#e3e3e3"></div><div class="c" style="left:1357px;top:808.5px;width:133px;height:23.5px;background:#e3e3e3"></div><div class="c" style="left:1490px;top:808.5px;width:121px;height:23.5px;background:#fff"></div><div class="c" style="left:1611px;top:808.5px;width:47px;height:23.5px;background:#e3e3e3"></div><div class="t" style="left:884px;top:808.5px;width:61px;color:#3a3a3a"><div class="tri">522<span class="cm">,</span>00</div></div><div class="t" style="left:953px;top:808.5px;width:139px;color:#3a3a3a">8</div><div class="t" style="left:1097px;top:808.5px;width:127px;color:#3a3a3a">19<span class="sl">/</span>12<span class="sl">/</span>2023</div><div class="t" style="left:1494px;top:808.5px;width:116px;color:#3a3a3a">12000008</div><div class="t" style="left:1615px;top:808.5px;width:42px;color:#3a3a3a">100000013</div><div class="ic" style="left:862px;top:832.0px;height:23.5px"></div><div class="c" style="left:884px;top:832.0px;width:65px;height:23.5px;background:#e3e3e3"></div><div class="c" style="left:949px;top:832.0px;width:144px;height:23.5px;background:#e3e3e3"></div><div class="c" style="left:1093px;top:832.0px;width:132px;height:23.5px;background:#e3e3e3"></div><div class="c" style="left:1225px;top:832.0px;width:132px;height:23.5px;background:#e3e3e3"></div><div class="c" style="left:1357px;top:832.0px;width:133px;height:23.5px;background:#e3e3e3"></div><div class="c" style="left:1490px;top:832.0px;width:121px;height:23.5px;background:#fff"></div><div class="c" style="left:1611px;top:832.0px;width:47px;height:23.5px;background:#e3e3e3"></div><div class="t" style="left:884px;top:832.0px;width:61px;color:#3a3a3a"><div class="tri">1 068<span class="cm">,</span>00</div></div><div class="t" style="left:953px;top:832.0px;width:139px;color:#3a3a3a">24</div><div class="t" style="left:1097px;top:832.0px;width:127px;color:#3a3a3a">15<span class="sl">/</span>01<span class="sl">/</span>2024</div><div class="t" style="left:1494px;top:832.0px;width:116px;color:#3a3a3a">12000017</div><div class="t" style="left:1615px;top:832.0px;width:42px;color:#3a3a3a">100000013</div><div class="ic" style="left:862px;top:855.5px;height:23.5px"></div><div class="c" style="left:884px;top:855.5px;width:65px;height:23.5px;background:#e3e3e3"></div><div class="c" style="left:949px;top:855.5px;width:144px;height:23.5px;background:#e3e3e3"></div><div class="c" style="left:1093px;top:855.5px;width:132px;height:23.5px;background:#e3e3e3"></div><div class="c" style="left:1225px;top:855.5px;width:132px;height:23.5px;background:#e3e3e3"></div><div class="c" style="left:1357px;top:855.5px;width:133px;height:23.5px;background:#e3e3e3"></div><div class="c" style="left:1490px;top:855.5px;width:121px;height:23.5px;background:#fff"></div><div class="c" style="left:1611px;top:855.5px;width:47px;height:23.5px;background:#e3e3e3"></div><div class="t" style="left:884px;top:855.5px;width:61px;color:#3a3a3a"><div class="tri">1 068<span class="cm">,</span>00</div></div><div class="t" style="left:953px;top:855.5px;width:139px;color:#3a3a3a">24</div><div class="t" style="left:1097px;top:855.5px;width:127px;color:#3a3a3a">16<span class="sl">/</span>01<span class="sl">/</span>2024</div><div class="t" style="left:1494px;top:855.5px;width:116px;color:#3a3a3a">12000020</div><div class="t" style="left:1615px;top:855.5px;width:42px;color:#3a3a3a">100000013</div><div class="ic" style="left:862px;top:879.0px;height:23.5px"></div><div class="c" style="left:884px;top:879.0px;width:65px;height:23.5px;background:#e3e3e3"></div><div class="c" style="left:949px;top:879.0px;width:144px;height:23.5px;background:#e3e3e3"></div><div class="c" style="left:1093px;top:879.0px;width:132px;height:23.5px;background:#e3e3e3"></div><div class="c" style="left:1225px;top:879.0px;width:132px;height:23.5px;background:#e3e3e3"></div><div class="c" style="left:1357px;top:879.0px;width:133px;height:23.5px;background:#e3e3e3"></div><div class="c" style="left:1490px;top:879.0px;width:121px;height:23.5px;background:#fff"></div><div class="c" style="left:1611px;top:879.0px;width:47px;height:23.5px;background:#e3e3e3"></div><div class="t" style="left:884px;top:879.0px;width:61px;color:#3a3a3a"><div class="tri">7 000<span class="cm">,</span>00</div></div><div class="t" style="left:953px;top:879.0px;width:139px;color:#3a3a3a">1000</div><div class="t" style="left:1097px;top:879.0px;width:127px;color:#3a3a3a">16<span class="sl">/</span>01<span class="sl">/</span>2024</div><div class="t" style="left:1494px;top:879.0px;width:116px;color:#3a3a3a">12000022</div><div class="t" style="left:1615px;top:879.0px;width:42px;color:#3a3a3a">100000013</div><div class="ic" style="left:862px;top:902.5px;height:23.5px"></div><div class="c" style="left:884px;top:902.5px;width:65px;height:23.5px;background:#e3e3e3"></div><div class="c" style="left:949px;top:902.5px;width:144px;height:23.5px;background:#e3e3e3"></div><div class="c" style="left:1093px;top:902.5px;width:132px;height:23.5px;background:#e3e3e3"></div><div class="c" style="left:1225px;top:902.5px;width:132px;height:23.5px;background:#e3e3e3"></div><div class="c" style="left:1357px;top:902.5px;width:133px;height:23.5px;background:#e3e3e3"></div><div class="c" style="left:1490px;top:902.5px;width:121px;height:23.5px;background:#fff"></div><div class="c" style="left:1611px;top:902.5px;width:47px;height:23.5px;background:#e3e3e3"></div><div class="t" style="left:884px;top:902.5px;width:61px;color:#3a3a3a"><div class="tri">299<span class="cm">,</span>70</div></div><div class="t" style="left:953px;top:902.5px;width:139px;color:#3a3a3a">6</div><div class="t" style="left:1097px;top:902.5px;width:127px;color:#3a3a3a">24<span class="sl">/</span>01<span class="sl">/</span>2024</div><div class="t" style="left:1494px;top:902.5px;width:116px;color:#3a3a3a">12000023</div><div class="t" style="left:1615px;top:902.5px;width:42px;color:#3a3a3a">100000013</div><div class="ic" style="left:862px;top:926.0px;height:23.5px"></div><div class="c" style="left:884px;top:926.0px;width:65px;height:23.5px;background:#e3e3e3"></div><div class="c" style="left:949px;top:926.0px;width:144px;height:23.5px;background:#e3e3e3"></div><div class="c" style="left:1093px;top:926.0px;width:132px;height:23.5px;background:#e3e3e3"></div><div class="c" style="left:1225px;top:926.0px;width:132px;height:23.5px;background:#e3e3e3"></div><div class="c" style="left:1357px;top:926.0px;width:133px;height:23.5px;background:#e3e3e3"></div><div class="c" style="left:1490px;top:926.0px;width:121px;height:23.5px;background:#fff"></div><div class="c" style="left:1611px;top:926.0px;width:47px;height:23.5px;background:#e3e3e3"></div><div class="t" style="left:884px;top:926.0px;width:61px;color:#3a3a3a"><div class="tri">961<span class="cm">,</span>20</div></div><div class="t" style="left:953px;top:926.0px;width:139px;color:#3a3a3a">24</div><div class="t" style="left:1097px;top:926.0px;width:127px;color:#3a3a3a">30<span class="sl">/</span>01<span class="sl">/</span>2024</div><div class="t" style="left:1494px;top:926.0px;width:116px;color:#3a3a3a">12000024</div><div class="t" style="left:1615px;top:926.0px;width:42px;color:#3a3a3a">100000013</div><div class="ic" style="left:862px;top:949.5px;height:23.5px"></div><div class="c" style="left:884px;top:949.5px;width:65px;height:23.5px;background:#e3e3e3"></div><div class="c" style="left:949px;top:949.5px;width:144px;height:23.5px;background:#e3e3e3"></div><div class="c" style="left:1093px;top:949.5px;width:132px;height:23.5px;background:#e3e3e3"></div><div class="c" style="left:1225px;top:949.5px;width:132px;height:23.5px;background:#e3e3e3"></div><div class="c" style="left:1357px;top:949.5px;width:133px;height:23.5px;background:#e3e3e3"></div><div class="c" style="left:1490px;top:949.5px;width:121px;height:23.5px;background:#fff"></div><div class="c" style="left:1611px;top:949.5px;width:47px;height:23.5px;background:#e3e3e3"></div><div class="t" style="left:884px;top:949.5px;width:61px;color:#3a3a3a"><div class="tri">1 400<span class="cm">,</span>00</div></div><div class="t" style="left:953px;top:949.5px;width:139px;color:#3a3a3a">600</div><div class="t" style="left:1097px;top:949.5px;width:127px;color:#3a3a3a">12<span class="sl">/</span>02<span class="sl">/</span>2024</div><div class="t" style="left:1494px;top:949.5px;width:116px;color:#3a3a3a">12000027</div><div class="t" style="left:1615px;top:949.5px;width:42px;color:#3a3a3a">600000002</div><div class="ic" style="left:862px;top:973.0px;height:23.5px"></div><div class="c" style="left:884px;top:973.0px;width:65px;height:23.5px;background:#e3e3e3"></div><div class="c" style="left:949px;top:973.0px;width:144px;height:23.5px;background:#e3e3e3"></div><div class="c" style="left:1093px;top:973.0px;width:132px;height:23.5px;background:#e3e3e3"></div><div class="c" style="left:1225px;top:973.0px;width:132px;height:23.5px;background:#e3e3e3"></div><div class="c" style="left:1357px;top:973.0px;width:133px;height:23.5px;background:#e3e3e3"></div><div class="c" style="left:1490px;top:973.0px;width:121px;height:23.5px;background:#fff"></div><div class="c" style="left:1611px;top:973.0px;width:47px;height:23.5px;background:#e3e3e3"></div><div class="t" style="left:884px;top:973.0px;width:61px;color:#3a3a3a"><div class="tri">5 585<span class="cm">,</span>42</div></div><div class="t" style="left:953px;top:973.0px;width:139px;color:#3a3a3a">7</div><div class="t" style="left:1097px;top:973.0px;width:127px;color:#3a3a3a">05<span class="sl">/</span>03<span class="sl">/</span>2024</div><div class="t" style="left:1494px;top:973.0px;width:116px;color:#3a3a3a">12000038</div><div class="t" style="left:1615px;top:973.0px;width:42px;color:#3a3a3a">600000002</div><div class="ic" style="left:862px;top:996.5px;height:23.5px"></div><div class="c" style="left:884px;top:996.5px;width:65px;height:23.5px;background:#e3e3e3"></div><div class="c" style="left:949px;top:996.5px;width:144px;height:23.5px;background:#e3e3e3"></div><div class="c" style="left:1093px;top:996.5px;width:132px;height:23.5px;background:#e3e3e3"></div><div class="c" style="left:1225px;top:996.5px;width:132px;height:23.5px;background:#e3e3e3"></div><div class="c" style="left:1357px;top:996.5px;width:133px;height:23.5px;background:#e3e3e3"></div><div class="c" style="left:1490px;top:996.5px;width:121px;height:23.5px;background:#fff"></div><div class="c" style="left:1611px;top:996.5px;width:47px;height:23.5px;background:#e3e3e3"></div><div class="t" style="left:884px;top:996.5px;width:61px;color:#3a3a3a"><div class="tri">3 912<span class="cm">,</span>00</div></div><div class="t" style="left:953px;top:996.5px;width:139px;color:#3a3a3a">12</div><div class="t" style="left:1097px;top:996.5px;width:127px;color:#3a3a3a">08<span class="sl">/</span>03<span class="sl">/</span>2024</div><div class="t" style="left:1494px;top:996.5px;width:116px;color:#3a3a3a">12000042</div><div class="t" style="left:1615px;top:996.5px;width:42px;color:#3a3a3a">100000013</div><div class="ic" style="left:862px;top:1020.0px;height:5.5px"></div><div class="c" style="left:884px;top:1020.0px;width:65px;height:5.5px;background:#e3e3e3"></div><div class="c" style="left:949px;top:1020.0px;width:144px;height:5.5px;background:#e3e3e3"></div><div class="c" style="left:1093px;top:1020.0px;width:132px;height:5.5px;background:#e3e3e3"></div><div class="c" style="left:1225px;top:1020.0px;width:132px;height:5.5px;background:#e3e3e3"></div><div class="c" style="left:1357px;top:1020.0px;width:133px;height:5.5px;background:#e3e3e3"></div><div class="c" style="left:1490px;top:1020.0px;width:121px;height:5.5px;background:#fff"></div><div class="c" style="left:1611px;top:1020.0px;width:47px;height:5.5px;background:#e3e3e3"></div><div class="hs" style="left:883px;top:761px"></div><div class="ht" style="left:888px;top:761px;width:60px">Total HT</div><div class="hs" style="left:948px;top:761px"></div><div class="ht" style="left:953px;top:761px;width:139px">Nb cols équivalents</div><div class="hs" style="left:1092px;top:761px"></div><div class="ht" style="left:1097px;top:761px;width:127px">Date cmd.</div><div class="hs" style="left:1224px;top:761px"></div><div class="ht" style="left:1229px;top:761px;width:127px">Date fin option</div><div class="hs" style="left:1356px;top:761px"></div><div class="ht" style="left:1361px;top:761px;width:128px">Date éch.</div><div class="hs" style="left:1489px;top:761px"></div><div class="ht" style="left:1494px;top:761px;width:116px">N° Commande</div><div class="hs" style="left:1610px;top:761px"></div><div class="ht" style="left:1615px;top:761px;width:42px">Code tiers</div><div class="vsb" style="left:1658px;top:761px;width:25px;height:264.5px"></div><div class="vth" style="left:1660.5px;top:786px;width:20px;height:25px"></div><div class="au" style="left:1665px;top:769px"></div><div class="ad" style="left:1664px;top:1006.5px"></div><div class="hsb" style="left:862px;top:1025.5px;width:822px"></div><div class="hth" style="left:888px;top:1028.0px;width:593px"></div><div class="al" style="left:869.5px;top:1031.0px"></div><div class="ar" style="left:1641px;top:1031.0px"></div></div></body></html>
